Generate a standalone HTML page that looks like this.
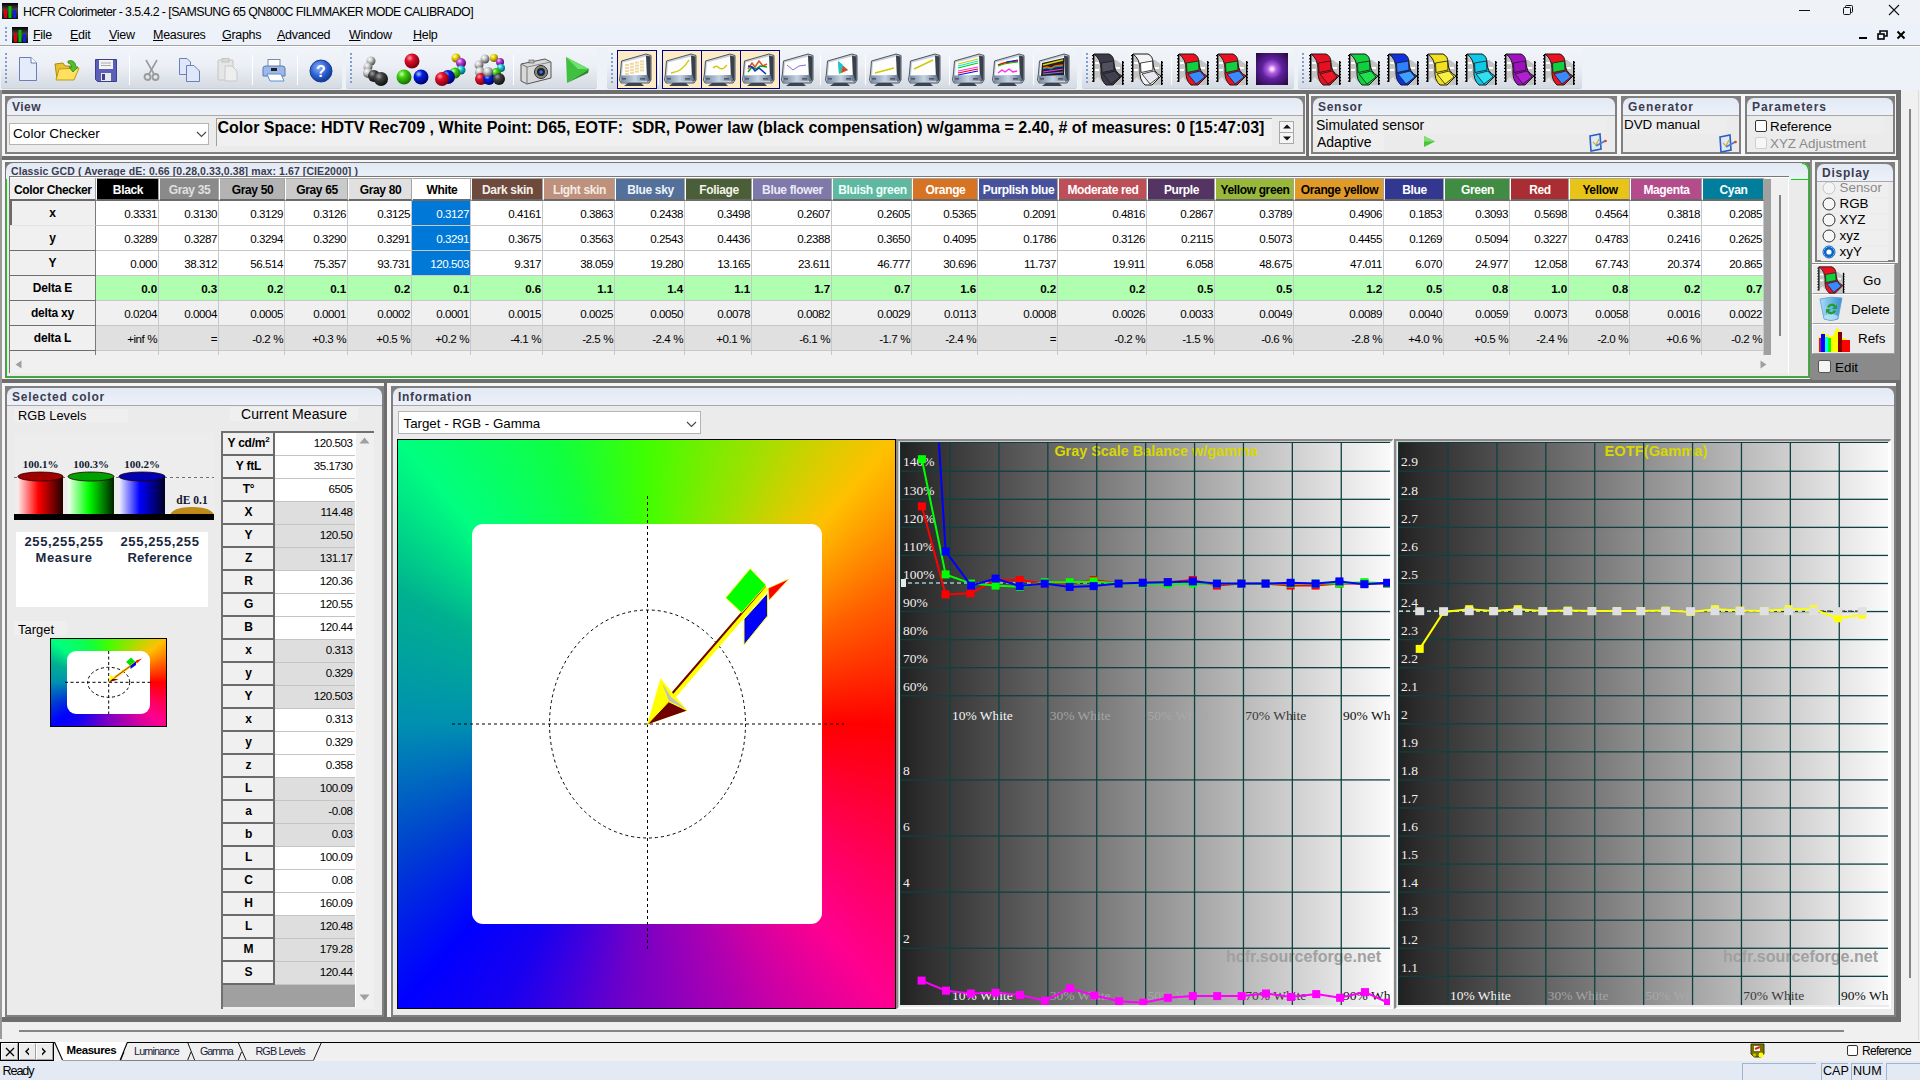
<!DOCTYPE html>
<html><head><meta charset="utf-8"><title>HCFR Colorimeter</title>
<style>
html,body{margin:0;padding:0;width:1920px;height:1080px;overflow:hidden;background:#f0f0f0;font-family:'Liberation Sans', sans-serif;}
#root{position:relative;width:1920px;height:1080px;overflow:hidden;}
#root div{position:absolute;box-sizing:border-box;}
#root svg{position:absolute;}
</style></head><body><div id="root">
<div style="left:0px;top:0px;width:1920px;height:23px;background:#eff2f7"></div><div style="left:0px;top:23px;width:1920px;height:22px;background:#edf1f9"></div><div style="left:0px;top:45px;width:1920px;height:1px;background:#a3a3a3"></div><div style="left:0px;top:46px;width:1920px;height:44px;background:#edf1f8"></div><div style="left:0px;top:46px;width:1920px;height:1px;background:#ffffff"></div><div style="left:1px;top:48px;width:341px;height:41px;background:linear-gradient(#f1f4f9 0%,#eceff5 45%,#d5dbe3 100%);border-radius:3px 3px 2px 2px;border-bottom:1px solid #c9cfd8"></div><div style="left:5px;top:53px;width:2px;height:2px;background:#7f9fcf"></div><div style="left:5px;top:57px;width:2px;height:2px;background:#7f9fcf"></div><div style="left:5px;top:61px;width:2px;height:2px;background:#7f9fcf"></div><div style="left:5px;top:65px;width:2px;height:2px;background:#7f9fcf"></div><div style="left:5px;top:69px;width:2px;height:2px;background:#7f9fcf"></div><div style="left:5px;top:73px;width:2px;height:2px;background:#7f9fcf"></div><div style="left:5px;top:77px;width:2px;height:2px;background:#7f9fcf"></div><div style="left:5px;top:81px;width:2px;height:2px;background:#7f9fcf"></div><div style="left:346px;top:48px;width:251px;height:41px;background:linear-gradient(#f1f4f9 0%,#eceff5 45%,#d5dbe3 100%);border-radius:3px 3px 2px 2px;border-bottom:1px solid #c9cfd8"></div><div style="left:350px;top:53px;width:2px;height:2px;background:#7f9fcf"></div><div style="left:350px;top:57px;width:2px;height:2px;background:#7f9fcf"></div><div style="left:350px;top:61px;width:2px;height:2px;background:#7f9fcf"></div><div style="left:350px;top:65px;width:2px;height:2px;background:#7f9fcf"></div><div style="left:350px;top:69px;width:2px;height:2px;background:#7f9fcf"></div><div style="left:350px;top:73px;width:2px;height:2px;background:#7f9fcf"></div><div style="left:350px;top:77px;width:2px;height:2px;background:#7f9fcf"></div><div style="left:350px;top:81px;width:2px;height:2px;background:#7f9fcf"></div><div style="left:607px;top:48px;width:470px;height:41px;background:linear-gradient(#f1f4f9 0%,#eceff5 45%,#d5dbe3 100%);border-radius:3px 3px 2px 2px;border-bottom:1px solid #c9cfd8"></div><div style="left:611px;top:53px;width:2px;height:2px;background:#7f9fcf"></div><div style="left:611px;top:57px;width:2px;height:2px;background:#7f9fcf"></div><div style="left:611px;top:61px;width:2px;height:2px;background:#7f9fcf"></div><div style="left:611px;top:65px;width:2px;height:2px;background:#7f9fcf"></div><div style="left:611px;top:69px;width:2px;height:2px;background:#7f9fcf"></div><div style="left:611px;top:73px;width:2px;height:2px;background:#7f9fcf"></div><div style="left:611px;top:77px;width:2px;height:2px;background:#7f9fcf"></div><div style="left:611px;top:81px;width:2px;height:2px;background:#7f9fcf"></div><div style="left:1082px;top:48px;width:212px;height:41px;background:linear-gradient(#f1f4f9 0%,#eceff5 45%,#d5dbe3 100%);border-radius:3px 3px 2px 2px;border-bottom:1px solid #c9cfd8"></div><div style="left:1086px;top:53px;width:2px;height:2px;background:#7f9fcf"></div><div style="left:1086px;top:57px;width:2px;height:2px;background:#7f9fcf"></div><div style="left:1086px;top:61px;width:2px;height:2px;background:#7f9fcf"></div><div style="left:1086px;top:65px;width:2px;height:2px;background:#7f9fcf"></div><div style="left:1086px;top:69px;width:2px;height:2px;background:#7f9fcf"></div><div style="left:1086px;top:73px;width:2px;height:2px;background:#7f9fcf"></div><div style="left:1086px;top:77px;width:2px;height:2px;background:#7f9fcf"></div><div style="left:1086px;top:81px;width:2px;height:2px;background:#7f9fcf"></div><div style="left:1298px;top:48px;width:284px;height:41px;background:linear-gradient(#f1f4f9 0%,#eceff5 45%,#d5dbe3 100%);border-radius:3px 3px 2px 2px;border-bottom:1px solid #c9cfd8"></div><div style="left:1302px;top:53px;width:2px;height:2px;background:#7f9fcf"></div><div style="left:1302px;top:57px;width:2px;height:2px;background:#7f9fcf"></div><div style="left:1302px;top:61px;width:2px;height:2px;background:#7f9fcf"></div><div style="left:1302px;top:65px;width:2px;height:2px;background:#7f9fcf"></div><div style="left:1302px;top:69px;width:2px;height:2px;background:#7f9fcf"></div><div style="left:1302px;top:73px;width:2px;height:2px;background:#7f9fcf"></div><div style="left:1302px;top:77px;width:2px;height:2px;background:#7f9fcf"></div><div style="left:1302px;top:81px;width:2px;height:2px;background:#7f9fcf"></div><div style="left:129px;top:55px;width:1px;height:30px;background:#c5cbd3;border-right:1px solid #fff"></div><div style="left:252px;top:55px;width:1px;height:30px;background:#c5cbd3;border-right:1px solid #fff"></div><div style="left:297px;top:55px;width:1px;height:30px;background:#c5cbd3;border-right:1px solid #fff"></div><div style="left:513px;top:55px;width:1px;height:30px;background:#c5cbd3;border-right:1px solid #fff"></div><div style="left:658px;top:55px;width:1px;height:30px;background:#c5cbd3;border-right:1px solid #fff"></div><div style="left:820px;top:55px;width:1px;height:30px;background:#c5cbd3;border-right:1px solid #fff"></div><div style="left:865px;top:55px;width:1px;height:30px;background:#c5cbd3;border-right:1px solid #fff"></div><div style="left:949px;top:55px;width:1px;height:30px;background:#c5cbd3;border-right:1px solid #fff"></div><div style="left:1033px;top:55px;width:1px;height:30px;background:#c5cbd3;border-right:1px solid #fff"></div><div style="left:1171px;top:55px;width:1px;height:30px;background:#c5cbd3;border-right:1px solid #fff"></div><div style="left:0px;top:90px;width:1901px;height:950px;background:#6e6e6e"></div><div style="left:0px;top:90px;width:2px;height:950px;background:#9a9a9a"></div><div style="left:2px;top:94px;width:1894px;height:62px;background:#f6f6f6"></div><div style="left:2px;top:160px;width:1894px;height:219px;background:#f6f6f6"></div><div style="left:2px;top:383px;width:1894px;height:634px;background:#f6f6f6"></div><div style="left:1306px;top:94px;width:3px;height:62px;background:#6e6e6e"></div><div style="left:384px;top:383px;width:3px;height:634px;background:#6e6e6e"></div><div style="left:1810px;top:160px;width:2px;height:219px;background:#8a8a8a"></div><div style="left:0px;top:1022px;width:1920px;height:20px;background:#f0f0f0"></div><div style="left:0px;top:1022px;width:2px;height:17px;background:#9a9a9a"></div><div style="left:1901px;top:90px;width:19px;height:952px;background:#f0f0f0"></div><div style="left:1918px;top:90px;width:1px;height:950px;background:#dcdcdc"></div><div style="left:1909px;top:109px;width:2px;height:869px;background:#858585"></div><div style="left:19px;top:1030px;width:1825px;height:2px;background:#858585"></div><div style="left:5px;top:96px;width:1300px;height:58px;background:#ebebeb;border:2px solid #808080"></div><div style="left:7px;top:98px;width:1296px;height:17px;background:#808080"></div><div style="left:7px;top:98px;width:1296px;height:17px;background:linear-gradient(#e2e9f4,#edf2f9);border-radius:7px 7px 0 0"></div><div style="left:7px;top:115px;width:1296px;height:1px;background:#a8a8a8"></div><div style="left:12px;top:100.84px;font-family:'Liberation Sans', sans-serif;font-size:12px;line-height:12px;font-weight:bold;color:#3c3c50;white-space:pre;letter-spacing:0.465px;">View</div><div style="left:1311px;top:96px;width:306px;height:58px;background:#ebebeb;border:2px solid #808080"></div><div style="left:1313px;top:98px;width:302px;height:17px;background:#808080"></div><div style="left:1313px;top:98px;width:302px;height:17px;background:linear-gradient(#e2e9f4,#edf2f9);border-radius:7px 7px 0 0"></div><div style="left:1313px;top:115px;width:302px;height:1px;background:#a8a8a8"></div><div style="left:1318px;top:100.84px;font-family:'Liberation Sans', sans-serif;font-size:12px;line-height:12px;font-weight:bold;color:#3c3c50;white-space:pre;letter-spacing:0.719px;">Sensor</div><div style="left:1621px;top:96px;width:120px;height:58px;background:#ebebeb;border:2px solid #808080"></div><div style="left:1623px;top:98px;width:116px;height:17px;background:#808080"></div><div style="left:1623px;top:98px;width:116px;height:17px;background:linear-gradient(#e2e9f4,#edf2f9);border-radius:7px 7px 0 0"></div><div style="left:1623px;top:115px;width:116px;height:1px;background:#a8a8a8"></div><div style="left:1628px;top:100.84px;font-family:'Liberation Sans', sans-serif;font-size:12px;line-height:12px;font-weight:bold;color:#3c3c50;white-space:pre;letter-spacing:0.960px;">Generator</div><div style="left:1745px;top:96px;width:150px;height:58px;background:#ebebeb;border:2px solid #808080"></div><div style="left:1747px;top:98px;width:146px;height:17px;background:#808080"></div><div style="left:1747px;top:98px;width:146px;height:17px;background:linear-gradient(#e2e9f4,#edf2f9);border-radius:7px 7px 0 0"></div><div style="left:1747px;top:115px;width:146px;height:1px;background:#a8a8a8"></div><div style="left:1752px;top:100.84px;font-family:'Liberation Sans', sans-serif;font-size:12px;line-height:12px;font-weight:bold;color:#3c3c50;white-space:pre;letter-spacing:0.961px;">Parameters</div><svg style="left:0;top:0" width="0" height="0"><defs>
<radialGradient id="bR" cx="35%" cy="30%" r="70%"><stop offset="0" stop-color="#ff9aa8"/><stop offset="0.35" stop-color="#e0102a"/><stop offset="1" stop-color="#7a0010"/></radialGradient>
<radialGradient id="bG" cx="35%" cy="30%" r="70%"><stop offset="0" stop-color="#c8ffb0"/><stop offset="0.35" stop-color="#40d010"/><stop offset="1" stop-color="#1a7000"/></radialGradient>
<radialGradient id="bB" cx="35%" cy="30%" r="70%"><stop offset="0" stop-color="#b0c8ff"/><stop offset="0.35" stop-color="#0020e0"/><stop offset="1" stop-color="#000070"/></radialGradient>
<radialGradient id="bW" cx="35%" cy="30%" r="70%"><stop offset="0" stop-color="#ffffff"/><stop offset="0.4" stop-color="#c8c8c8"/><stop offset="1" stop-color="#505050"/></radialGradient>
<radialGradient id="bK" cx="35%" cy="30%" r="70%"><stop offset="0" stop-color="#a0a0a0"/><stop offset="0.4" stop-color="#404040"/><stop offset="1" stop-color="#101010"/></radialGradient>
<radialGradient id="bY" cx="35%" cy="30%" r="70%"><stop offset="0" stop-color="#ffffc0"/><stop offset="0.4" stop-color="#e8d000"/><stop offset="1" stop-color="#806000"/></radialGradient>
<radialGradient id="bM" cx="35%" cy="30%" r="70%"><stop offset="0" stop-color="#ffc0ff"/><stop offset="0.4" stop-color="#b040d0"/><stop offset="1" stop-color="#500070"/></radialGradient>
<radialGradient id="bC" cx="35%" cy="30%" r="70%"><stop offset="0" stop-color="#c0ffff"/><stop offset="0.4" stop-color="#20c8d8"/><stop offset="1" stop-color="#006070"/></radialGradient>
<linearGradient id="monB" x1="0" y1="0" x2="1" y2="0"><stop offset="0" stop-color="#6f87a3"/><stop offset="0.5" stop-color="#c5d3e3"/><stop offset="1" stop-color="#5a708c"/></linearGradient>
<radialGradient id="helpG" cx="40%" cy="35%" r="65%"><stop offset="0" stop-color="#8fb4ff"/><stop offset="0.6" stop-color="#2a5fd0"/><stop offset="1" stop-color="#123a90"/></radialGradient>
<radialGradient id="purp" cx="50%" cy="50%" r="60%"><stop offset="0" stop-color="#ffffff"/><stop offset="0.15" stop-color="#e0a0ff"/><stop offset="0.45" stop-color="#7020c0"/><stop offset="1" stop-color="#1a0830"/></radialGradient>
<linearGradient id="cylR" x1="0" x2="1"><stop offset="0" stop-color="#ffe8e8"/><stop offset="0.45" stop-color="#ff0000"/><stop offset="1" stop-color="#200000"/></linearGradient>
<linearGradient id="cylG" x1="0" x2="1"><stop offset="0" stop-color="#f0fff0"/><stop offset="0.45" stop-color="#00ff00"/><stop offset="1" stop-color="#002000"/></linearGradient>
<linearGradient id="cylB" x1="0" x2="1"><stop offset="0" stop-color="#f0f0ff"/><stop offset="0.45" stop-color="#0000ff"/><stop offset="1" stop-color="#000020"/></linearGradient>
</defs></svg><svg style="left:2px;top:3px" width="16" height="16" viewBox="0 0 16 16"><rect width="16" height="16" fill="#000"/><defs><linearGradient id="ai" x1="0" y1="0" x2="0" y2="1"><stop offset="0" stop-color="#000"/><stop offset="0.4" stop-color="#444"/><stop offset="1" stop-color="#111"/></linearGradient></defs><rect width="16" height="16" fill="url(#ai)"/><rect x="2" y="6" width="3" height="9" fill="#e00000"/><rect x="6.5" y="3" width="3" height="12" fill="#00c000"/><rect x="11" y="7" width="3" height="8" fill="#1020e0"/></svg><div style="left:23px;top:5.50px;font-family:'Liberation Sans', sans-serif;font-size:12.4px;line-height:12.4px;font-weight:normal;color:#000;white-space:pre;letter-spacing:-0.570px;">HCFR Colorimeter - 3.5.4.2 - [SAMSUNG 65 QN800C FILMMAKER MODE CALIBRADO]</div><div style="left:1799px;top:10px;width:11px;height:1px;background:#111"></div><svg style="left:1842px;top:4px" width="12" height="12" viewBox="0 0 12 12"><rect x="1.5" y="3.5" width="7" height="7" rx="1" fill="none" stroke="#111"/><path d="M3.5,3.5 V2.5 Q3.5,1.5 4.5,1.5 H9.5 Q10.5,1.5 10.5,2.5 V7.5 Q10.5,8.5 9.5,8.5 H8.5" fill="none" stroke="#111"/></svg><svg style="left:1888px;top:4px" width="12" height="12" viewBox="0 0 12 12"><path d="M1,1 L11,11 M11,1 L1,11" stroke="#111" stroke-width="1.1"/></svg><div style="left:5px;top:27px;width:2px;height:2px;background:#7f9fcf"></div><div style="left:5px;top:31px;width:2px;height:2px;background:#7f9fcf"></div><div style="left:5px;top:35px;width:2px;height:2px;background:#7f9fcf"></div><div style="left:5px;top:39px;width:2px;height:2px;background:#7f9fcf"></div><svg style="left:12px;top:27px" width="16" height="16" viewBox="0 0 16 16"><rect width="16" height="16" fill="#000"/><defs><linearGradient id="ai" x1="0" y1="0" x2="0" y2="1"><stop offset="0" stop-color="#000"/><stop offset="0.4" stop-color="#444"/><stop offset="1" stop-color="#111"/></linearGradient></defs><rect width="16" height="16" fill="url(#ai)"/><rect x="2" y="6" width="3" height="9" fill="#e00000"/><rect x="6.5" y="3" width="3" height="12" fill="#00c000"/><rect x="11" y="7" width="3" height="8" fill="#1020e0"/></svg><div style="left:33px;top:29.42px;font-family:'Liberation Sans', sans-serif;font-size:12.5px;line-height:12.5px;font-weight:normal;color:#000;white-space:pre;letter-spacing:-0.3px"><u>F</u>ile</div><div style="left:70px;top:29.42px;font-family:'Liberation Sans', sans-serif;font-size:12.5px;line-height:12.5px;font-weight:normal;color:#000;white-space:pre;letter-spacing:-0.3px"><u>E</u>dit</div><div style="left:109px;top:29.42px;font-family:'Liberation Sans', sans-serif;font-size:12.5px;line-height:12.5px;font-weight:normal;color:#000;white-space:pre;letter-spacing:-0.3px"><u>V</u>iew</div><div style="left:153px;top:29.42px;font-family:'Liberation Sans', sans-serif;font-size:12.5px;line-height:12.5px;font-weight:normal;color:#000;white-space:pre;letter-spacing:-0.3px"><u>M</u>easures</div><div style="left:222px;top:29.42px;font-family:'Liberation Sans', sans-serif;font-size:12.5px;line-height:12.5px;font-weight:normal;color:#000;white-space:pre;letter-spacing:-0.3px"><u>G</u>raphs</div><div style="left:277px;top:29.42px;font-family:'Liberation Sans', sans-serif;font-size:12.5px;line-height:12.5px;font-weight:normal;color:#000;white-space:pre;letter-spacing:-0.3px"><u>A</u>dvanced</div><div style="left:349px;top:29.42px;font-family:'Liberation Sans', sans-serif;font-size:12.5px;line-height:12.5px;font-weight:normal;color:#000;white-space:pre;letter-spacing:-0.3px"><u>W</u>indow</div><div style="left:413px;top:29.42px;font-family:'Liberation Sans', sans-serif;font-size:12.5px;line-height:12.5px;font-weight:normal;color:#000;white-space:pre;letter-spacing:-0.3px"><u>H</u>elp</div><div style="left:1859px;top:37px;width:8px;height:2px;background:#000"></div><svg style="left:1877px;top:30px" width="11" height="10" viewBox="0 0 11 10"><rect x="1" y="4" width="6" height="5" fill="none" stroke="#000" stroke-width="1.6"/><path d="M3,3.5 V1 H10 V6 H7.5" fill="none" stroke="#000" stroke-width="1.6"/></svg><svg style="left:1896px;top:30px" width="10" height="10" viewBox="0 0 10 10"><path d="M1.5,1.5 L8.5,8.5 M8.5,1.5 L1.5,8.5" stroke="#000" stroke-width="2"/></svg><svg style="left:18px;top:57px" width="20" height="24" viewBox="0 0 20 24"><path d="M1.5,0.5 H13 L18.5,6 V23.5 H1.5 Z" fill="#e4ecfb" stroke="#6b7fb8"/><path d="M13,0.5 V6 H18.5" fill="#fff" stroke="#6b7fb8"/></svg><svg style="left:54px;top:58px" width="26" height="24" viewBox="0 0 26 24"><path d="M1,6 L9,5 L11,8 L20,8 L20,21 L3,21 Z" fill="#e8c030" stroke="#b08a10"/><path d="M5,11 L25,10 L20,22 L2,22 Z" fill="#ffe060" stroke="#c09a10"/><path d="M14,3 Q21,1 22,9 L24,9 L19,14 L15,9 L18,9 Q17,5 14,5 Z" fill="#50c030" stroke="#2a8a10" stroke-width="0.8"/></svg><svg style="left:95px;top:59px" width="22" height="23" viewBox="0 0 22 23"><path d="M0.5,0.5 H21.5 V22.5 H2.5 L0.5,20.5 Z" fill="#5a5fb8" stroke="#3a3f90"/><rect x="4" y="1" width="14" height="9" fill="#f4f4f4"/><line x1="6" y1="4" x2="16" y2="4" stroke="#aaa"/><line x1="6" y1="6.5" x2="16" y2="6.5" stroke="#aaa"/><rect x="6" y="14" width="10" height="8" fill="#e8e8e8"/><rect x="7" y="15" width="3" height="6" fill="#3a3f90"/></svg><svg style="left:143px;top:59px" width="17" height="22" viewBox="0 0 17 22"><line x1="3" y1="1" x2="11" y2="15" stroke="#9a9a9a" stroke-width="1.6"/><line x1="14" y1="1" x2="6" y2="15" stroke="#9a9a9a" stroke-width="1.6"/><circle cx="4.5" cy="18" r="3" fill="none" stroke="#9a9a9a" stroke-width="1.8"/><circle cx="12.5" cy="18" r="3" fill="none" stroke="#9a9a9a" stroke-width="1.8"/></svg><svg style="left:179px;top:58px" width="22" height="24" viewBox="0 0 22 24"><path d="M0.5,0.5 H8 L11.5,4 V16.5 H0.5 Z" fill="#dfe8fa" stroke="#6b7fb8"/><path d="M7.5,7.5 H15 L20.5,13 V23.5 H7.5 Z" fill="#dfe8fa" stroke="#6b7fb8"/></svg><svg style="left:217px;top:58px" width="22" height="24" viewBox="0 0 22 24"><rect x="1" y="2" width="15" height="20" rx="1" fill="#e6e6e6" stroke="#c4c4c4"/><rect x="5" y="0.5" width="7" height="3.5" fill="#d8d8d8" stroke="#c4c4c4"/><path d="M8,8 H15 L20,13 V23 H8 Z" fill="#eeeeee" stroke="#c8c8c8"/></svg><svg style="left:262px;top:59px" width="24" height="23" viewBox="0 0 24 23"><rect x="6" y="0.5" width="12" height="8" fill="#fff" stroke="#7a8ab0"/><path d="M1,9 Q1,7 4,7 H20 Q23,7 23,9 V17 H1 Z" fill="#9ab8e8" stroke="#5a78b0"/><rect x="9" y="9" width="6" height="3" fill="#222"/><path d="M5,15 H19 L22,22 H8 Z" fill="#fff" stroke="#5a90d0"/></svg><svg style="left:309px;top:59px" width="24" height="24" viewBox="0 0 24 24"><circle cx="12" cy="12" r="11" fill="url(#helpG)" stroke="#1a3f90" stroke-width="1"/><text x="12" y="18" font-family="Liberation Sans" font-weight="bold" font-size="16" fill="#fff" text-anchor="middle">?</text></svg><svg style="left:359px;top:53px" width="34" height="34" viewBox="0 0 34 34"><circle cx="12" cy="8" r="4.5" fill="url(#bW)"/><circle cx="9" cy="14" r="4.5" fill="url(#bW)"/><circle cx="9" cy="20" r="5" fill="url(#bW)"/><circle cx="15" cy="23" r="6" fill="url(#bK)"/><circle cx="22" cy="26" r="7" fill="url(#bK)"/></svg><svg style="left:396px;top:53px" width="34" height="34" viewBox="0 0 34 34"><circle cx="16" cy="8" r="7.5" fill="url(#bR)"/><circle cx="8" cy="24" r="7.5" fill="url(#bG)"/><circle cx="25" cy="24" r="7.5" fill="url(#bB)"/></svg><svg style="left:435px;top:53px" width="34" height="34" viewBox="0 0 34 34"><circle cx="21" cy="5" r="4.5" fill="url(#bY)"/><circle cx="26" cy="10" r="5" fill="url(#bM)"/><circle cx="26" cy="17" r="4.5" fill="url(#bC)"/><circle cx="20" cy="20" r="5.5" fill="url(#bG)"/><circle cx="13" cy="24" r="7" fill="url(#bB)"/><circle cx="7" cy="26" r="7" fill="url(#bR)"/></svg><svg style="left:474px;top:53px" width="34" height="34" viewBox="0 0 34 34"><circle cx="11" cy="6" r="4.5" fill="url(#bW)"/><circle cx="20" cy="5" r="4" fill="url(#bY)"/><circle cx="26" cy="9" r="4" fill="url(#bM)"/><circle cx="27" cy="15" r="4" fill="url(#bC)"/><circle cx="22" cy="20" r="5" fill="url(#bG)"/><circle cx="5" cy="12" r="4.5" fill="url(#bW)"/><circle cx="6" cy="19" r="5" fill="url(#bW)"/><circle cx="7" cy="26" r="6" fill="url(#bR)"/><circle cx="15" cy="26" r="6" fill="url(#bB)"/><circle cx="25" cy="26" r="6" fill="url(#bK)"/><circle cx="14" cy="19" r="5" fill="url(#bW)"/></svg><svg style="left:519px;top:56px" width="34" height="30" viewBox="0 0 34 30"><path d="M2,8 L26,3 L32,6 L32,22 L8,28 L2,25 Z" fill="#d8d8d8" stroke="#555" stroke-width="1"/><path d="M2,8 L8,11 L8,28" fill="none" stroke="#777"/><path d="M8,11 L32,6" fill="none" stroke="#888"/><circle cx="22" cy="16" r="6.5" fill="#888" stroke="#333"/><circle cx="22" cy="16" r="4" fill="#222"/><circle cx="22" cy="16" r="1.8" fill="#3070ff"/><rect x="10" y="4" width="5" height="3" fill="#bbb" stroke="#555" stroke-width="0.6"/></svg><svg style="left:564px;top:56px" width="26" height="28" viewBox="0 0 26 28"><path d="M2,1 L25,13 L3,27 Z" fill="#40c040"/><path d="M2,1 L25,13 L14,13 Z" fill="#70e070"/><path d="M3,27 L25,13 L24,17 Z" fill="#209020"/></svg><div style="left:617px;top:50px;width:40px;height:39px;background:#fdebc6;border:1px solid #000080"></div><div style="left:662px;top:50px;width:40px;height:39px;background:#fdebc6;border:1px solid #000080"></div><div style="left:701px;top:50px;width:40px;height:39px;background:#fdebc6;border:1px solid #000080"></div><div style="left:740px;top:50px;width:40px;height:39px;background:#fdebc6;border:1px solid #000080"></div><svg style="left:619px;top:53px" width="34" height="34" viewBox="0 0 34 34"><path d="M2.5,8 L27,1 L32,2.5 L32,27 L30,30 L2,30 L0.5,27 L1.5,20 Z" fill="#c9d0d8" stroke="#4e5662" stroke-width="1"/><path d="M4,9.5 L27,3.5 L27,22 L3,23 Z" fill="#fdfdfd"/><path d="M27,2.5 L31.5,3.5 L31.5,27 L28.5,29 Z" fill="#394049"/><path d="M1.5,22.5 L28,22 L30.5,27.5 L2,29.5 Z" fill="url(#monB)"/><rect x="3" y="25" width="4" height="1.6" fill="#556"/><rect x="21" y="25" width="5" height="1.6" fill="#556"/><path d="M5,33 L25,33 L22,30 L9,30 Z" fill="#3c4350"/><g fill="#f0d8a0"><rect x="6" y="11.0" width="4" height="2"/><rect x="11" y="9.8" width="4" height="2"/><rect x="16" y="8.6" width="4" height="2"/><rect x="21" y="7.4" width="4" height="2"/><rect x="6" y="14.0" width="4" height="2"/><rect x="11" y="12.8" width="4" height="2"/><rect x="16" y="11.6" width="4" height="2"/><rect x="21" y="10.4" width="4" height="2"/><rect x="6" y="17.0" width="4" height="2"/><rect x="11" y="15.8" width="4" height="2"/><rect x="16" y="14.6" width="4" height="2"/><rect x="21" y="13.4" width="4" height="2"/><rect x="6" y="20.0" width="4" height="2"/><rect x="11" y="18.8" width="4" height="2"/><rect x="16" y="17.6" width="4" height="2"/><rect x="21" y="16.4" width="4" height="2"/></g></svg><svg style="left:664px;top:53px" width="34" height="34" viewBox="0 0 34 34"><path d="M2.5,8 L27,1 L32,2.5 L32,27 L30,30 L2,30 L0.5,27 L1.5,20 Z" fill="#c9d0d8" stroke="#4e5662" stroke-width="1"/><path d="M4,9.5 L27,3.5 L27,22 L3,23 Z" fill="#fdfdfd"/><path d="M27,2.5 L31.5,3.5 L31.5,27 L28.5,29 Z" fill="#394049"/><path d="M1.5,22.5 L28,22 L30.5,27.5 L2,29.5 Z" fill="url(#monB)"/><rect x="3" y="25" width="4" height="1.6" fill="#556"/><rect x="21" y="25" width="5" height="1.6" fill="#556"/><path d="M5,33 L25,33 L22,30 L9,30 Z" fill="#3c4350"/><path d="M7,20 Q18,19 25,7" fill="none" stroke="#d0c800" stroke-width="1.4"/></svg><svg style="left:703px;top:53px" width="34" height="34" viewBox="0 0 34 34"><path d="M2.5,8 L27,1 L32,2.5 L32,27 L30,30 L2,30 L0.5,27 L1.5,20 Z" fill="#c9d0d8" stroke="#4e5662" stroke-width="1"/><path d="M4,9.5 L27,3.5 L27,22 L3,23 Z" fill="#fdfdfd"/><path d="M27,2.5 L31.5,3.5 L31.5,27 L28.5,29 Z" fill="#394049"/><path d="M1.5,22.5 L28,22 L30.5,27.5 L2,29.5 Z" fill="url(#monB)"/><rect x="3" y="25" width="4" height="1.6" fill="#556"/><rect x="21" y="25" width="5" height="1.6" fill="#556"/><path d="M5,33 L25,33 L22,30 L9,30 Z" fill="#3c4350"/><path d="M10,15 Q13,12 15,14 Q18,17 21,15 L24,12" fill="none" stroke="#d0c800" stroke-width="1.4"/></svg><svg style="left:742px;top:53px" width="34" height="34" viewBox="0 0 34 34"><path d="M2.5,8 L27,1 L32,2.5 L32,27 L30,30 L2,30 L0.5,27 L1.5,20 Z" fill="#c9d0d8" stroke="#4e5662" stroke-width="1"/><path d="M4,9.5 L27,3.5 L27,22 L3,23 Z" fill="#fdfdfd"/><path d="M27,2.5 L31.5,3.5 L31.5,27 L28.5,29 Z" fill="#394049"/><path d="M1.5,22.5 L28,22 L30.5,27.5 L2,29.5 Z" fill="url(#monB)"/><rect x="3" y="25" width="4" height="1.6" fill="#556"/><rect x="21" y="25" width="5" height="1.6" fill="#556"/><path d="M5,33 L25,33 L22,30 L9,30 Z" fill="#3c4350"/><path d="M6,16 L10,10 L13,14 L17,8 L21,13 L25,11" fill="none" stroke="#e05020" stroke-width="1.5"/><path d="M6,19 L10,14 L14,16 L18,13 L25,14" fill="none" stroke="#10a020" stroke-width="1.5"/><path d="M6,13 L10,14 L13,18 L17,15 L24,21" fill="none" stroke="#1030c0" stroke-width="1.5"/></svg><svg style="left:781px;top:53px" width="34" height="34" viewBox="0 0 34 34"><path d="M2.5,8 L27,1 L32,2.5 L32,27 L30,30 L2,30 L0.5,27 L1.5,20 Z" fill="#c9d0d8" stroke="#4e5662" stroke-width="1"/><path d="M4,9.5 L27,3.5 L27,22 L3,23 Z" fill="#fdfdfd"/><path d="M27,2.5 L31.5,3.5 L31.5,27 L28.5,29 Z" fill="#394049"/><path d="M1.5,22.5 L28,22 L30.5,27.5 L2,29.5 Z" fill="url(#monB)"/><rect x="3" y="25" width="4" height="1.6" fill="#556"/><rect x="21" y="25" width="5" height="1.6" fill="#556"/><path d="M5,33 L25,33 L22,30 L9,30 Z" fill="#3c4350"/><path d="M6,12 L12,17 L18,13 L25,12" fill="none" stroke="#8070e0" stroke-width="1"/></svg><svg style="left:825px;top:53px" width="34" height="34" viewBox="0 0 34 34"><path d="M2.5,8 L27,1 L32,2.5 L32,27 L30,30 L2,30 L0.5,27 L1.5,20 Z" fill="#c9d0d8" stroke="#4e5662" stroke-width="1"/><path d="M4,9.5 L27,3.5 L27,22 L3,23 Z" fill="#fdfdfd"/><path d="M27,2.5 L31.5,3.5 L31.5,27 L28.5,29 Z" fill="#394049"/><path d="M1.5,22.5 L28,22 L30.5,27.5 L2,29.5 Z" fill="url(#monB)"/><rect x="3" y="25" width="4" height="1.6" fill="#556"/><rect x="21" y="25" width="5" height="1.6" fill="#556"/><path d="M5,33 L25,33 L22,30 L9,30 Z" fill="#3c4350"/><path d="M13,8 L23,17 L14,21 Z" fill="#40d040"/><path d="M13,8 L18,12 L14,21 Z" fill="#20c0e0"/><path d="M18,13 L23,17 L16,20 Z" fill="#e04040"/></svg><svg style="left:869px;top:53px" width="34" height="34" viewBox="0 0 34 34"><path d="M2.5,8 L27,1 L32,2.5 L32,27 L30,30 L2,30 L0.5,27 L1.5,20 Z" fill="#c9d0d8" stroke="#4e5662" stroke-width="1"/><path d="M4,9.5 L27,3.5 L27,22 L3,23 Z" fill="#fdfdfd"/><path d="M27,2.5 L31.5,3.5 L31.5,27 L28.5,29 Z" fill="#394049"/><path d="M1.5,22.5 L28,22 L30.5,27.5 L2,29.5 Z" fill="url(#monB)"/><rect x="3" y="25" width="4" height="1.6" fill="#556"/><rect x="21" y="25" width="5" height="1.6" fill="#556"/><path d="M5,33 L25,33 L22,30 L9,30 Z" fill="#3c4350"/><path d="M6,20 L25,15" fill="none" stroke="#d0c800" stroke-width="1.4"/></svg><svg style="left:908px;top:53px" width="34" height="34" viewBox="0 0 34 34"><path d="M2.5,8 L27,1 L32,2.5 L32,27 L30,30 L2,30 L0.5,27 L1.5,20 Z" fill="#c9d0d8" stroke="#4e5662" stroke-width="1"/><path d="M4,9.5 L27,3.5 L27,22 L3,23 Z" fill="#fdfdfd"/><path d="M27,2.5 L31.5,3.5 L31.5,27 L28.5,29 Z" fill="#394049"/><path d="M1.5,22.5 L28,22 L30.5,27.5 L2,29.5 Z" fill="url(#monB)"/><rect x="3" y="25" width="4" height="1.6" fill="#556"/><rect x="21" y="25" width="5" height="1.6" fill="#556"/><path d="M5,33 L25,33 L22,30 L9,30 Z" fill="#3c4350"/><path d="M6,16 L25,7" fill="none" stroke="#d0c800" stroke-width="1.4"/></svg><svg style="left:952px;top:53px" width="34" height="34" viewBox="0 0 34 34"><path d="M2.5,8 L27,1 L32,2.5 L32,27 L30,30 L2,30 L0.5,27 L1.5,20 Z" fill="#c9d0d8" stroke="#4e5662" stroke-width="1"/><path d="M4,9.5 L27,3.5 L27,22 L3,23 Z" fill="#fdfdfd"/><path d="M27,2.5 L31.5,3.5 L31.5,27 L28.5,29 Z" fill="#394049"/><path d="M1.5,22.5 L28,22 L30.5,27.5 L2,29.5 Z" fill="url(#monB)"/><rect x="3" y="25" width="4" height="1.6" fill="#556"/><rect x="21" y="25" width="5" height="1.6" fill="#556"/><path d="M5,33 L25,33 L22,30 L9,30 Z" fill="#3c4350"/><path d="M6,11 L26,6" stroke="#d0c800" stroke-width="1.2"/><path d="M6,13 L26,8" stroke="#00e8e8" stroke-width="1.2"/><path d="M6,15 L26,10" stroke="#00d000" stroke-width="1.2"/><path d="M6,18 L26,14" stroke="#ff30ff" stroke-width="1.2"/><path d="M6,20 L26,16" stroke="#ff0000" stroke-width="1.2"/><path d="M6,22 L26,18" stroke="#0010ff" stroke-width="1.2"/></svg><svg style="left:992px;top:53px" width="34" height="34" viewBox="0 0 34 34"><path d="M2.5,8 L27,1 L32,2.5 L32,27 L30,30 L2,30 L0.5,27 L1.5,20 Z" fill="#c9d0d8" stroke="#4e5662" stroke-width="1"/><path d="M4,9.5 L27,3.5 L27,22 L3,23 Z" fill="#fdfdfd"/><path d="M27,2.5 L31.5,3.5 L31.5,27 L28.5,29 Z" fill="#394049"/><path d="M1.5,22.5 L28,22 L30.5,27.5 L2,29.5 Z" fill="url(#monB)"/><rect x="3" y="25" width="4" height="1.6" fill="#556"/><rect x="21" y="25" width="5" height="1.6" fill="#556"/><path d="M5,33 L25,33 L22,30 L9,30 Z" fill="#3c4350"/><path d="M6,12 L12,10 L18,9 L26,8" stroke="#ff0000" stroke-width="1.6" fill="none"/><path d="M6,13 L12,11 L18,10 L26,9" stroke="#00c000" stroke-width="1.2" fill="none"/><path d="M14,9 L26,7" stroke="#0020ff" stroke-width="1.2" fill="none"/><path d="M6,20 L10,17 L13,19 L17,16 L21,19 L25,18" stroke="#ff20ff" stroke-width="1.3" fill="none"/></svg><svg style="left:1037px;top:53px" width="34" height="34" viewBox="0 0 34 34"><path d="M2.5,8 L27,1 L32,2.5 L32,27 L30,30 L2,30 L0.5,27 L1.5,20 Z" fill="#c9d0d8" stroke="#4e5662" stroke-width="1"/><path d="M4,9.5 L27,3.5 L27,22 L3,23 Z" fill="#fdfdfd"/><path d="M27,2.5 L31.5,3.5 L31.5,27 L28.5,29 Z" fill="#394049"/><path d="M1.5,22.5 L28,22 L30.5,27.5 L2,29.5 Z" fill="url(#monB)"/><rect x="3" y="25" width="4" height="1.6" fill="#556"/><rect x="21" y="25" width="5" height="1.6" fill="#556"/><path d="M5,33 L25,33 L22,30 L9,30 Z" fill="#3c4350"/><path d="M5,10 L27,5 L27,22 L4,23 Z" fill="#202020"/><path d="M6,12 L26,7" stroke="#e0d000" stroke-width="1.3"/><path d="M6,15 L10,14 L14,15 L18,13 L26,12" stroke="#ff6000" stroke-width="1.3" fill="none"/><path d="M6,16 L10,15 L14,16 L18,14 L26,13" stroke="#00a0e0" stroke-width="1" fill="none"/><path d="M6,19 L26,16" stroke="#ff30ff" stroke-width="1.2"/><path d="M6,21 L26,19" stroke="#8070ff" stroke-width="1.2"/></svg><svg style="left:1092px;top:53px" width="32" height="33" viewBox="0 0 32 33"><path d="M1,1 L10,1 L10,29 L6,24 L1,29 Z" fill="#c4c4c4"/><rect x="1" y="1" width="1.4" height="28" fill="#000"/><path d="M3,9 H7 V11 H3 Z M3,16 H7 V18 H3 Z" fill="#fff"/><path d="M19,7 L24,7 L31,12 L31,32 L20,32 Z" fill="#c4c4c4"/><rect x="30" y="8" width="1.4" height="24" fill="#000"/><path d="M24,14 H28 V16 H24 Z M24,21 H28 V23 H24 Z" fill="#fff"/><rect x="0" y="2.0" width="1.2" height="1.2" fill="#000"/><rect x="0" y="5.2" width="1.2" height="1.2" fill="#000"/><rect x="0" y="8.4" width="1.2" height="1.2" fill="#000"/><rect x="0" y="11.6" width="1.2" height="1.2" fill="#000"/><rect x="0" y="14.8" width="1.2" height="1.2" fill="#000"/><rect x="0" y="18.0" width="1.2" height="1.2" fill="#000"/><rect x="0" y="21.2" width="1.2" height="1.2" fill="#000"/><rect x="0" y="24.4" width="1.2" height="1.2" fill="#000"/><rect x="0" y="27.6" width="1.2" height="1.2" fill="#000"/><rect x="30.8" y="9.0" width="1.2" height="1.2" fill="#000"/><rect x="30.8" y="12.0" width="1.2" height="1.2" fill="#000"/><rect x="30.8" y="15.0" width="1.2" height="1.2" fill="#000"/><rect x="30.8" y="18.0" width="1.2" height="1.2" fill="#000"/><rect x="30.8" y="21.0" width="1.2" height="1.2" fill="#000"/><rect x="30.8" y="24.0" width="1.2" height="1.2" fill="#000"/><rect x="30.8" y="27.0" width="1.2" height="1.2" fill="#000"/><rect x="30.8" y="30.0" width="1.2" height="1.2" fill="#000"/><path d="M2,1 L17,1 Q22,3 22,10 Q22,19 30,23 L21,32 L14,32 Q8,27 9,16 Q9,6 2,1 Z" fill="#3a3a48" stroke="#1a1a1a" stroke-width="1"/><path d="M9.5,10 L21.5,8 L22,17 L10,19.5 Z" fill="#505060" stroke="#1a1a1a" stroke-width="0.8"/><path d="M11,21 L23,18 L28,24 L19,31 Z" fill="#404050" stroke="#1a1a1a" stroke-width="0.8"/></svg><svg style="left:1131px;top:53px" width="32" height="33" viewBox="0 0 32 33"><path d="M1,1 L10,1 L10,29 L6,24 L1,29 Z" fill="#c4c4c4"/><rect x="1" y="1" width="1.4" height="28" fill="#000"/><path d="M3,9 H7 V11 H3 Z M3,16 H7 V18 H3 Z" fill="#fff"/><path d="M19,7 L24,7 L31,12 L31,32 L20,32 Z" fill="#c4c4c4"/><rect x="30" y="8" width="1.4" height="24" fill="#000"/><path d="M24,14 H28 V16 H24 Z M24,21 H28 V23 H24 Z" fill="#fff"/><rect x="0" y="2.0" width="1.2" height="1.2" fill="#000"/><rect x="0" y="5.2" width="1.2" height="1.2" fill="#000"/><rect x="0" y="8.4" width="1.2" height="1.2" fill="#000"/><rect x="0" y="11.6" width="1.2" height="1.2" fill="#000"/><rect x="0" y="14.8" width="1.2" height="1.2" fill="#000"/><rect x="0" y="18.0" width="1.2" height="1.2" fill="#000"/><rect x="0" y="21.2" width="1.2" height="1.2" fill="#000"/><rect x="0" y="24.4" width="1.2" height="1.2" fill="#000"/><rect x="0" y="27.6" width="1.2" height="1.2" fill="#000"/><rect x="30.8" y="9.0" width="1.2" height="1.2" fill="#000"/><rect x="30.8" y="12.0" width="1.2" height="1.2" fill="#000"/><rect x="30.8" y="15.0" width="1.2" height="1.2" fill="#000"/><rect x="30.8" y="18.0" width="1.2" height="1.2" fill="#000"/><rect x="30.8" y="21.0" width="1.2" height="1.2" fill="#000"/><rect x="30.8" y="24.0" width="1.2" height="1.2" fill="#000"/><rect x="30.8" y="27.0" width="1.2" height="1.2" fill="#000"/><rect x="30.8" y="30.0" width="1.2" height="1.2" fill="#000"/><path d="M2,1 L17,1 Q22,3 22,10 Q22,19 30,23 L21,32 L14,32 Q8,27 9,16 Q9,6 2,1 Z" fill="#f4f4f4" stroke="#1a1a1a" stroke-width="1"/><path d="M9.5,10 L21.5,8 L22,17 L10,19.5 Z" fill="#ffffff" stroke="#1a1a1a" stroke-width="0.8"/><path d="M11,21 L23,18 L28,24 L19,31 Z" fill="#e8e8f0" stroke="#1a1a1a" stroke-width="0.8"/></svg><svg style="left:1177px;top:53px" width="32" height="33" viewBox="0 0 32 33"><path d="M1,1 L10,1 L10,29 L6,24 L1,29 Z" fill="#c4c4c4"/><rect x="1" y="1" width="1.4" height="28" fill="#000"/><path d="M3,9 H7 V11 H3 Z M3,16 H7 V18 H3 Z" fill="#fff"/><path d="M19,7 L24,7 L31,12 L31,32 L20,32 Z" fill="#c4c4c4"/><rect x="30" y="8" width="1.4" height="24" fill="#000"/><path d="M24,14 H28 V16 H24 Z M24,21 H28 V23 H24 Z" fill="#fff"/><rect x="0" y="2.0" width="1.2" height="1.2" fill="#000"/><rect x="0" y="5.2" width="1.2" height="1.2" fill="#000"/><rect x="0" y="8.4" width="1.2" height="1.2" fill="#000"/><rect x="0" y="11.6" width="1.2" height="1.2" fill="#000"/><rect x="0" y="14.8" width="1.2" height="1.2" fill="#000"/><rect x="0" y="18.0" width="1.2" height="1.2" fill="#000"/><rect x="0" y="21.2" width="1.2" height="1.2" fill="#000"/><rect x="0" y="24.4" width="1.2" height="1.2" fill="#000"/><rect x="0" y="27.6" width="1.2" height="1.2" fill="#000"/><rect x="30.8" y="9.0" width="1.2" height="1.2" fill="#000"/><rect x="30.8" y="12.0" width="1.2" height="1.2" fill="#000"/><rect x="30.8" y="15.0" width="1.2" height="1.2" fill="#000"/><rect x="30.8" y="18.0" width="1.2" height="1.2" fill="#000"/><rect x="30.8" y="21.0" width="1.2" height="1.2" fill="#000"/><rect x="30.8" y="24.0" width="1.2" height="1.2" fill="#000"/><rect x="30.8" y="27.0" width="1.2" height="1.2" fill="#000"/><rect x="30.8" y="30.0" width="1.2" height="1.2" fill="#000"/><path d="M2,1 L17,1 Q22,3 22,10 Q22,19 30,23 L21,32 L14,32 Q8,27 9,16 Q9,6 2,1 Z" fill="#ee1020" stroke="#1a1a1a" stroke-width="1"/><path d="M9.5,10 L21.5,8 L22,17 L10,19.5 Z" fill="#10d040" stroke="#1a1a1a" stroke-width="0.8"/><path d="M11,21 L23,18 L28,24 L19,31 Z" fill="#3a8aff" stroke="#1a1a1a" stroke-width="0.8"/></svg><svg style="left:1216px;top:53px" width="32" height="33" viewBox="0 0 32 33"><path d="M1,1 L10,1 L10,29 L6,24 L1,29 Z" fill="#c4c4c4"/><rect x="1" y="1" width="1.4" height="28" fill="#000"/><path d="M3,9 H7 V11 H3 Z M3,16 H7 V18 H3 Z" fill="#fff"/><path d="M19,7 L24,7 L31,12 L31,32 L20,32 Z" fill="#c4c4c4"/><rect x="30" y="8" width="1.4" height="24" fill="#000"/><path d="M24,14 H28 V16 H24 Z M24,21 H28 V23 H24 Z" fill="#fff"/><rect x="0" y="2.0" width="1.2" height="1.2" fill="#000"/><rect x="0" y="5.2" width="1.2" height="1.2" fill="#000"/><rect x="0" y="8.4" width="1.2" height="1.2" fill="#000"/><rect x="0" y="11.6" width="1.2" height="1.2" fill="#000"/><rect x="0" y="14.8" width="1.2" height="1.2" fill="#000"/><rect x="0" y="18.0" width="1.2" height="1.2" fill="#000"/><rect x="0" y="21.2" width="1.2" height="1.2" fill="#000"/><rect x="0" y="24.4" width="1.2" height="1.2" fill="#000"/><rect x="0" y="27.6" width="1.2" height="1.2" fill="#000"/><rect x="30.8" y="9.0" width="1.2" height="1.2" fill="#000"/><rect x="30.8" y="12.0" width="1.2" height="1.2" fill="#000"/><rect x="30.8" y="15.0" width="1.2" height="1.2" fill="#000"/><rect x="30.8" y="18.0" width="1.2" height="1.2" fill="#000"/><rect x="30.8" y="21.0" width="1.2" height="1.2" fill="#000"/><rect x="30.8" y="24.0" width="1.2" height="1.2" fill="#000"/><rect x="30.8" y="27.0" width="1.2" height="1.2" fill="#000"/><rect x="30.8" y="30.0" width="1.2" height="1.2" fill="#000"/><path d="M2,1 L17,1 Q22,3 22,10 Q22,19 30,23 L21,32 L14,32 Q8,27 9,16 Q9,6 2,1 Z" fill="#ee1020" stroke="#1a1a1a" stroke-width="1"/><path d="M9.5,10 L21.5,8 L22,17 L10,19.5 Z" fill="#10d040" stroke="#1a1a1a" stroke-width="0.8"/><path d="M11,21 L23,18 L28,24 L19,31 Z" fill="#3a8aff" stroke="#1a1a1a" stroke-width="0.8"/></svg><div style="left:1256px;top:53px;width:32px;height:32px;background:radial-gradient(circle at 50% 50%,#ffffff 0,#f0c0ff 8%,#b060e0 20%,#6020a0 45%,#200838 100%)"></div><svg style="left:1309px;top:53px" width="32" height="33" viewBox="0 0 32 33"><path d="M1,1 L10,1 L10,29 L6,24 L1,29 Z" fill="#c4c4c4"/><rect x="1" y="1" width="1.4" height="28" fill="#000"/><path d="M3,9 H7 V11 H3 Z M3,16 H7 V18 H3 Z" fill="#fff"/><path d="M19,7 L24,7 L31,12 L31,32 L20,32 Z" fill="#c4c4c4"/><rect x="30" y="8" width="1.4" height="24" fill="#000"/><path d="M24,14 H28 V16 H24 Z M24,21 H28 V23 H24 Z" fill="#fff"/><rect x="0" y="2.0" width="1.2" height="1.2" fill="#000"/><rect x="0" y="5.2" width="1.2" height="1.2" fill="#000"/><rect x="0" y="8.4" width="1.2" height="1.2" fill="#000"/><rect x="0" y="11.6" width="1.2" height="1.2" fill="#000"/><rect x="0" y="14.8" width="1.2" height="1.2" fill="#000"/><rect x="0" y="18.0" width="1.2" height="1.2" fill="#000"/><rect x="0" y="21.2" width="1.2" height="1.2" fill="#000"/><rect x="0" y="24.4" width="1.2" height="1.2" fill="#000"/><rect x="0" y="27.6" width="1.2" height="1.2" fill="#000"/><rect x="30.8" y="9.0" width="1.2" height="1.2" fill="#000"/><rect x="30.8" y="12.0" width="1.2" height="1.2" fill="#000"/><rect x="30.8" y="15.0" width="1.2" height="1.2" fill="#000"/><rect x="30.8" y="18.0" width="1.2" height="1.2" fill="#000"/><rect x="30.8" y="21.0" width="1.2" height="1.2" fill="#000"/><rect x="30.8" y="24.0" width="1.2" height="1.2" fill="#000"/><rect x="30.8" y="27.0" width="1.2" height="1.2" fill="#000"/><rect x="30.8" y="30.0" width="1.2" height="1.2" fill="#000"/><path d="M2,1 L17,1 Q22,3 22,10 Q22,19 30,23 L21,32 L14,32 Q8,27 9,16 Q9,6 2,1 Z" fill="#e81020" stroke="#1a1a1a" stroke-width="1"/><path d="M9.5,10 L21.5,8 L22,17 L10,19.5 Z" fill="#e81020" stroke="#1a1a1a" stroke-width="0.8"/><path d="M11,21 L23,18 L28,24 L19,31 Z" fill="#f01828" stroke="#1a1a1a" stroke-width="0.8"/></svg><svg style="left:1348px;top:53px" width="32" height="33" viewBox="0 0 32 33"><path d="M1,1 L10,1 L10,29 L6,24 L1,29 Z" fill="#c4c4c4"/><rect x="1" y="1" width="1.4" height="28" fill="#000"/><path d="M3,9 H7 V11 H3 Z M3,16 H7 V18 H3 Z" fill="#fff"/><path d="M19,7 L24,7 L31,12 L31,32 L20,32 Z" fill="#c4c4c4"/><rect x="30" y="8" width="1.4" height="24" fill="#000"/><path d="M24,14 H28 V16 H24 Z M24,21 H28 V23 H24 Z" fill="#fff"/><rect x="0" y="2.0" width="1.2" height="1.2" fill="#000"/><rect x="0" y="5.2" width="1.2" height="1.2" fill="#000"/><rect x="0" y="8.4" width="1.2" height="1.2" fill="#000"/><rect x="0" y="11.6" width="1.2" height="1.2" fill="#000"/><rect x="0" y="14.8" width="1.2" height="1.2" fill="#000"/><rect x="0" y="18.0" width="1.2" height="1.2" fill="#000"/><rect x="0" y="21.2" width="1.2" height="1.2" fill="#000"/><rect x="0" y="24.4" width="1.2" height="1.2" fill="#000"/><rect x="0" y="27.6" width="1.2" height="1.2" fill="#000"/><rect x="30.8" y="9.0" width="1.2" height="1.2" fill="#000"/><rect x="30.8" y="12.0" width="1.2" height="1.2" fill="#000"/><rect x="30.8" y="15.0" width="1.2" height="1.2" fill="#000"/><rect x="30.8" y="18.0" width="1.2" height="1.2" fill="#000"/><rect x="30.8" y="21.0" width="1.2" height="1.2" fill="#000"/><rect x="30.8" y="24.0" width="1.2" height="1.2" fill="#000"/><rect x="30.8" y="27.0" width="1.2" height="1.2" fill="#000"/><rect x="30.8" y="30.0" width="1.2" height="1.2" fill="#000"/><path d="M2,1 L17,1 Q22,3 22,10 Q22,19 30,23 L21,32 L14,32 Q8,27 9,16 Q9,6 2,1 Z" fill="#10d040" stroke="#1a1a1a" stroke-width="1"/><path d="M9.5,10 L21.5,8 L22,17 L10,19.5 Z" fill="#10d040" stroke="#1a1a1a" stroke-width="0.8"/><path d="M11,21 L23,18 L28,24 L19,31 Z" fill="#20e050" stroke="#1a1a1a" stroke-width="0.8"/></svg><svg style="left:1387px;top:53px" width="32" height="33" viewBox="0 0 32 33"><path d="M1,1 L10,1 L10,29 L6,24 L1,29 Z" fill="#c4c4c4"/><rect x="1" y="1" width="1.4" height="28" fill="#000"/><path d="M3,9 H7 V11 H3 Z M3,16 H7 V18 H3 Z" fill="#fff"/><path d="M19,7 L24,7 L31,12 L31,32 L20,32 Z" fill="#c4c4c4"/><rect x="30" y="8" width="1.4" height="24" fill="#000"/><path d="M24,14 H28 V16 H24 Z M24,21 H28 V23 H24 Z" fill="#fff"/><rect x="0" y="2.0" width="1.2" height="1.2" fill="#000"/><rect x="0" y="5.2" width="1.2" height="1.2" fill="#000"/><rect x="0" y="8.4" width="1.2" height="1.2" fill="#000"/><rect x="0" y="11.6" width="1.2" height="1.2" fill="#000"/><rect x="0" y="14.8" width="1.2" height="1.2" fill="#000"/><rect x="0" y="18.0" width="1.2" height="1.2" fill="#000"/><rect x="0" y="21.2" width="1.2" height="1.2" fill="#000"/><rect x="0" y="24.4" width="1.2" height="1.2" fill="#000"/><rect x="0" y="27.6" width="1.2" height="1.2" fill="#000"/><rect x="30.8" y="9.0" width="1.2" height="1.2" fill="#000"/><rect x="30.8" y="12.0" width="1.2" height="1.2" fill="#000"/><rect x="30.8" y="15.0" width="1.2" height="1.2" fill="#000"/><rect x="30.8" y="18.0" width="1.2" height="1.2" fill="#000"/><rect x="30.8" y="21.0" width="1.2" height="1.2" fill="#000"/><rect x="30.8" y="24.0" width="1.2" height="1.2" fill="#000"/><rect x="30.8" y="27.0" width="1.2" height="1.2" fill="#000"/><rect x="30.8" y="30.0" width="1.2" height="1.2" fill="#000"/><path d="M2,1 L17,1 Q22,3 22,10 Q22,19 30,23 L21,32 L14,32 Q8,27 9,16 Q9,6 2,1 Z" fill="#1030e0" stroke="#1a1a1a" stroke-width="1"/><path d="M9.5,10 L21.5,8 L22,17 L10,19.5 Z" fill="#3080ff" stroke="#1a1a1a" stroke-width="0.8"/><path d="M11,21 L23,18 L28,24 L19,31 Z" fill="#40a0ff" stroke="#1a1a1a" stroke-width="0.8"/></svg><svg style="left:1426px;top:53px" width="32" height="33" viewBox="0 0 32 33"><path d="M1,1 L10,1 L10,29 L6,24 L1,29 Z" fill="#c4c4c4"/><rect x="1" y="1" width="1.4" height="28" fill="#000"/><path d="M3,9 H7 V11 H3 Z M3,16 H7 V18 H3 Z" fill="#fff"/><path d="M19,7 L24,7 L31,12 L31,32 L20,32 Z" fill="#c4c4c4"/><rect x="30" y="8" width="1.4" height="24" fill="#000"/><path d="M24,14 H28 V16 H24 Z M24,21 H28 V23 H24 Z" fill="#fff"/><rect x="0" y="2.0" width="1.2" height="1.2" fill="#000"/><rect x="0" y="5.2" width="1.2" height="1.2" fill="#000"/><rect x="0" y="8.4" width="1.2" height="1.2" fill="#000"/><rect x="0" y="11.6" width="1.2" height="1.2" fill="#000"/><rect x="0" y="14.8" width="1.2" height="1.2" fill="#000"/><rect x="0" y="18.0" width="1.2" height="1.2" fill="#000"/><rect x="0" y="21.2" width="1.2" height="1.2" fill="#000"/><rect x="0" y="24.4" width="1.2" height="1.2" fill="#000"/><rect x="0" y="27.6" width="1.2" height="1.2" fill="#000"/><rect x="30.8" y="9.0" width="1.2" height="1.2" fill="#000"/><rect x="30.8" y="12.0" width="1.2" height="1.2" fill="#000"/><rect x="30.8" y="15.0" width="1.2" height="1.2" fill="#000"/><rect x="30.8" y="18.0" width="1.2" height="1.2" fill="#000"/><rect x="30.8" y="21.0" width="1.2" height="1.2" fill="#000"/><rect x="30.8" y="24.0" width="1.2" height="1.2" fill="#000"/><rect x="30.8" y="27.0" width="1.2" height="1.2" fill="#000"/><rect x="30.8" y="30.0" width="1.2" height="1.2" fill="#000"/><path d="M2,1 L17,1 Q22,3 22,10 Q22,19 30,23 L21,32 L14,32 Q8,27 9,16 Q9,6 2,1 Z" fill="#f0e020" stroke="#1a1a1a" stroke-width="1"/><path d="M9.5,10 L21.5,8 L22,17 L10,19.5 Z" fill="#f0e020" stroke="#1a1a1a" stroke-width="0.8"/><path d="M11,21 L23,18 L28,24 L19,31 Z" fill="#f8f040" stroke="#1a1a1a" stroke-width="0.8"/></svg><svg style="left:1465px;top:53px" width="32" height="33" viewBox="0 0 32 33"><path d="M1,1 L10,1 L10,29 L6,24 L1,29 Z" fill="#c4c4c4"/><rect x="1" y="1" width="1.4" height="28" fill="#000"/><path d="M3,9 H7 V11 H3 Z M3,16 H7 V18 H3 Z" fill="#fff"/><path d="M19,7 L24,7 L31,12 L31,32 L20,32 Z" fill="#c4c4c4"/><rect x="30" y="8" width="1.4" height="24" fill="#000"/><path d="M24,14 H28 V16 H24 Z M24,21 H28 V23 H24 Z" fill="#fff"/><rect x="0" y="2.0" width="1.2" height="1.2" fill="#000"/><rect x="0" y="5.2" width="1.2" height="1.2" fill="#000"/><rect x="0" y="8.4" width="1.2" height="1.2" fill="#000"/><rect x="0" y="11.6" width="1.2" height="1.2" fill="#000"/><rect x="0" y="14.8" width="1.2" height="1.2" fill="#000"/><rect x="0" y="18.0" width="1.2" height="1.2" fill="#000"/><rect x="0" y="21.2" width="1.2" height="1.2" fill="#000"/><rect x="0" y="24.4" width="1.2" height="1.2" fill="#000"/><rect x="0" y="27.6" width="1.2" height="1.2" fill="#000"/><rect x="30.8" y="9.0" width="1.2" height="1.2" fill="#000"/><rect x="30.8" y="12.0" width="1.2" height="1.2" fill="#000"/><rect x="30.8" y="15.0" width="1.2" height="1.2" fill="#000"/><rect x="30.8" y="18.0" width="1.2" height="1.2" fill="#000"/><rect x="30.8" y="21.0" width="1.2" height="1.2" fill="#000"/><rect x="30.8" y="24.0" width="1.2" height="1.2" fill="#000"/><rect x="30.8" y="27.0" width="1.2" height="1.2" fill="#000"/><rect x="30.8" y="30.0" width="1.2" height="1.2" fill="#000"/><path d="M2,1 L17,1 Q22,3 22,10 Q22,19 30,23 L21,32 L14,32 Q8,27 9,16 Q9,6 2,1 Z" fill="#10c8e8" stroke="#1a1a1a" stroke-width="1"/><path d="M9.5,10 L21.5,8 L22,17 L10,19.5 Z" fill="#10c8e8" stroke="#1a1a1a" stroke-width="0.8"/><path d="M11,21 L23,18 L28,24 L19,31 Z" fill="#30e0f0" stroke="#1a1a1a" stroke-width="0.8"/></svg><svg style="left:1504px;top:53px" width="32" height="33" viewBox="0 0 32 33"><path d="M1,1 L10,1 L10,29 L6,24 L1,29 Z" fill="#c4c4c4"/><rect x="1" y="1" width="1.4" height="28" fill="#000"/><path d="M3,9 H7 V11 H3 Z M3,16 H7 V18 H3 Z" fill="#fff"/><path d="M19,7 L24,7 L31,12 L31,32 L20,32 Z" fill="#c4c4c4"/><rect x="30" y="8" width="1.4" height="24" fill="#000"/><path d="M24,14 H28 V16 H24 Z M24,21 H28 V23 H24 Z" fill="#fff"/><rect x="0" y="2.0" width="1.2" height="1.2" fill="#000"/><rect x="0" y="5.2" width="1.2" height="1.2" fill="#000"/><rect x="0" y="8.4" width="1.2" height="1.2" fill="#000"/><rect x="0" y="11.6" width="1.2" height="1.2" fill="#000"/><rect x="0" y="14.8" width="1.2" height="1.2" fill="#000"/><rect x="0" y="18.0" width="1.2" height="1.2" fill="#000"/><rect x="0" y="21.2" width="1.2" height="1.2" fill="#000"/><rect x="0" y="24.4" width="1.2" height="1.2" fill="#000"/><rect x="0" y="27.6" width="1.2" height="1.2" fill="#000"/><rect x="30.8" y="9.0" width="1.2" height="1.2" fill="#000"/><rect x="30.8" y="12.0" width="1.2" height="1.2" fill="#000"/><rect x="30.8" y="15.0" width="1.2" height="1.2" fill="#000"/><rect x="30.8" y="18.0" width="1.2" height="1.2" fill="#000"/><rect x="30.8" y="21.0" width="1.2" height="1.2" fill="#000"/><rect x="30.8" y="24.0" width="1.2" height="1.2" fill="#000"/><rect x="30.8" y="27.0" width="1.2" height="1.2" fill="#000"/><rect x="30.8" y="30.0" width="1.2" height="1.2" fill="#000"/><path d="M2,1 L17,1 Q22,3 22,10 Q22,19 30,23 L21,32 L14,32 Q8,27 9,16 Q9,6 2,1 Z" fill="#a010c0" stroke="#1a1a1a" stroke-width="1"/><path d="M9.5,10 L21.5,8 L22,17 L10,19.5 Z" fill="#a010c0" stroke="#1a1a1a" stroke-width="0.8"/><path d="M11,21 L23,18 L28,24 L19,31 Z" fill="#b020d0" stroke="#1a1a1a" stroke-width="0.8"/></svg><svg style="left:1543px;top:53px" width="32" height="33" viewBox="0 0 32 33"><path d="M1,1 L10,1 L10,29 L6,24 L1,29 Z" fill="#c4c4c4"/><rect x="1" y="1" width="1.4" height="28" fill="#000"/><path d="M3,9 H7 V11 H3 Z M3,16 H7 V18 H3 Z" fill="#fff"/><path d="M19,7 L24,7 L31,12 L31,32 L20,32 Z" fill="#c4c4c4"/><rect x="30" y="8" width="1.4" height="24" fill="#000"/><path d="M24,14 H28 V16 H24 Z M24,21 H28 V23 H24 Z" fill="#fff"/><rect x="0" y="2.0" width="1.2" height="1.2" fill="#000"/><rect x="0" y="5.2" width="1.2" height="1.2" fill="#000"/><rect x="0" y="8.4" width="1.2" height="1.2" fill="#000"/><rect x="0" y="11.6" width="1.2" height="1.2" fill="#000"/><rect x="0" y="14.8" width="1.2" height="1.2" fill="#000"/><rect x="0" y="18.0" width="1.2" height="1.2" fill="#000"/><rect x="0" y="21.2" width="1.2" height="1.2" fill="#000"/><rect x="0" y="24.4" width="1.2" height="1.2" fill="#000"/><rect x="0" y="27.6" width="1.2" height="1.2" fill="#000"/><rect x="30.8" y="9.0" width="1.2" height="1.2" fill="#000"/><rect x="30.8" y="12.0" width="1.2" height="1.2" fill="#000"/><rect x="30.8" y="15.0" width="1.2" height="1.2" fill="#000"/><rect x="30.8" y="18.0" width="1.2" height="1.2" fill="#000"/><rect x="30.8" y="21.0" width="1.2" height="1.2" fill="#000"/><rect x="30.8" y="24.0" width="1.2" height="1.2" fill="#000"/><rect x="30.8" y="27.0" width="1.2" height="1.2" fill="#000"/><rect x="30.8" y="30.0" width="1.2" height="1.2" fill="#000"/><path d="M2,1 L17,1 Q22,3 22,10 Q22,19 30,23 L21,32 L14,32 Q8,27 9,16 Q9,6 2,1 Z" fill="#ee1020" stroke="#1a1a1a" stroke-width="1"/><path d="M9.5,10 L21.5,8 L22,17 L10,19.5 Z" fill="#10d040" stroke="#1a1a1a" stroke-width="0.8"/><path d="M11,21 L23,18 L28,24 L19,31 Z" fill="#3a8aff" stroke="#1a1a1a" stroke-width="0.8"/></svg><div style="left:9px;top:123px;width:200px;height:22px;background:#fff;border:1px solid #b4b4b4"></div><div style="left:13px;top:126.99px;font-family:'Liberation Sans', sans-serif;font-size:13.6px;line-height:13.6px;font-weight:normal;color:#000;white-space:pre;">Color Checker</div><svg style="left:196px;top:131px" width="11" height="7" viewBox="0 0 11 7"><path d="M1,1 L5.5,5.5 L10,1" fill="none" stroke="#444" stroke-width="1.1"/></svg><div style="left:216px;top:118px;width:1056px;height:28px;background:#f0f0f0;border-top:1px solid #a0a0a0;border-left:1px solid #a0a0a0"></div><div style="left:217.5px;top:120.46px;font-family:'Liberation Sans', sans-serif;font-size:16px;line-height:16px;font-weight:bold;color:#000;white-space:pre;letter-spacing:0.02px">Color Space: HDTV Rec709 , White Point: D65, EOTF:  SDR, Power law (black compensation) w/gamma = 2.40, # of measures: 0 [15:47:03]</div><div style="left:1279px;top:121px;width:15px;height:12px;background:#f4f4f4;border:1px solid #a8a8a8"></div><div style="left:1279px;top:132px;width:15px;height:12px;background:#f4f4f4;border:1px solid #a8a8a8"></div><svg style="left:1283px;top:124px" width="8" height="5" viewBox="0 0 8 5"><path d="M0,4.5 L4,0.5 L8,4.5 Z" fill="#111"/></svg><svg style="left:1283px;top:136px" width="8" height="5" viewBox="0 0 8 5"><path d="M0,0.5 L4,4.5 L8,0.5 Z" fill="#111"/></svg><div style="left:1314px;top:117px;width:292px;height:17px;background:#ededed"></div><div style="left:1316px;top:118.15px;font-family:'Liberation Sans', sans-serif;font-size:14px;line-height:14px;font-weight:normal;color:#000;white-space:pre;">Simulated sensor</div><div style="left:1317px;top:134px;width:67px;height:17px;background:#efefef"></div><div style="left:1317px;top:134.65px;font-family:'Liberation Sans', sans-serif;font-size:14px;line-height:14px;font-weight:normal;color:#000;white-space:pre;">Adaptive</div><svg style="left:1423px;top:135px" width="13" height="13" viewBox="0 0 13 13"><path d="M1,1 L12,6.5 L1,12 Z" fill="#50c040"/><path d="M1,1 L12,6.5 L1,6.5 Z" fill="#80e070"/></svg><svg style="left:1588px;top:133px" width="20" height="20" viewBox="0 0 20 20"><path d="M2,3 L12,1 L13,16 L3,18 Z" fill="#dfe9fa" stroke="#2a5fc0" stroke-width="1.6"/><path d="M5,9 L8,12 L11,6" fill="none" stroke="#d8b030" stroke-width="1.3"/><path d="M8,13 L17,8" stroke="#5080d0" stroke-width="2"/><circle cx="17.5" cy="8" r="1.3" fill="#d04030"/></svg><div style="left:1624px;top:117px;width:102px;height:17px;background:#ededed"></div><div style="left:1624px;top:117.66px;font-family:'Liberation Sans', sans-serif;font-size:13.4px;line-height:13.4px;font-weight:normal;color:#000;white-space:pre;">DVD manual</div><svg style="left:1718px;top:134px" width="20" height="20" viewBox="0 0 20 20"><path d="M2,3 L12,1 L13,16 L3,18 Z" fill="#dfe9fa" stroke="#2a5fc0" stroke-width="1.6"/><path d="M5,9 L8,12 L11,6" fill="none" stroke="#d8b030" stroke-width="1.3"/><path d="M8,13 L17,8" stroke="#5080d0" stroke-width="2"/><circle cx="17.5" cy="8" r="1.3" fill="#d04030"/></svg><div style="left:1754px;top:117px;width:130px;height:17px;background:#ededed"></div><div style="left:1755px;top:120px;width:12px;height:12px;background:#fff;border:1px solid #333;border-radius:2px"></div><div style="left:1770px;top:120.16px;font-family:'Liberation Sans', sans-serif;font-size:13.4px;line-height:13.4px;font-weight:normal;color:#000;white-space:pre;">Reference</div><div style="left:1755px;top:137px;width:12px;height:12px;background:#f6f6f6;border:1px solid #cfcfcf;border-radius:2px"></div><div style="left:1770px;top:136.66px;font-family:'Liberation Sans', sans-serif;font-size:13.4px;line-height:13.4px;font-weight:normal;color:#8a8a8a;white-space:pre;">XYZ Adjustment</div><div style="left:5px;top:162px;width:1805px;height:216px;background:#ebebeb;border:1px solid #787878"></div><div style="left:6px;top:163px;width:1803px;height:17px;background:#787878"></div><div style="left:6px;top:163px;width:1803px;height:17px;background:linear-gradient(#e2e9f4,#edf2f9);border-radius:7px 7px 0 0"></div><div style="left:6px;top:179px;width:1803px;height:198px;border:1px solid #10d010;border-top:none;border-right:none"></div><div style="left:1791px;top:163px;width:18px;height:214px;border-right:1px solid #10d010;border-top:1px solid transparent;border-radius:0 7px 0 0"></div><div style="left:1791px;top:163px;width:18px;height:10px;border-right:1px solid #10d010;border-top:1px solid #10d010;border-radius:0 7px 0 0;clip-path:inset(0 0 0 60%)"></div><div style="left:1791px;top:179px;width:18px;height:1px;background:#10d010"></div><div style="left:11px;top:165.61px;font-family:'Liberation Sans', sans-serif;font-size:10.5px;line-height:10.5px;font-weight:bold;color:#3c3c50;white-space:pre;letter-spacing:0.084px;">Classic GCD ( Average dE: 0.66 [0.28,0.33,0.38] max: 1.67 [CIE2000] )</div><div style="left:9px;top:176px;width:1780px;height:197px;background:#f0f0f0;border-top:1px solid #777;border-left:1px solid #777"></div><div style="left:10px;top:177px;width:1778px;height:1px;background:#fff"></div><div style="left:10px;top:178px;width:86px;height:23px;background:#f0f0f0;border-right:1px solid #a0a0a0;border-bottom:2px solid #6a6a6a"></div><div style="left:14px;top:183.64px;font-family:'Liberation Sans', sans-serif;font-size:12px;line-height:12px;font-weight:bold;color:#000;white-space:pre;letter-spacing:-0.333px;">Color Checker</div><div style="left:96px;top:178px;width:63px;height:23px;background:#000000;border:1px solid #a4a4a4;border-left:1px solid #fff;border-bottom:2px solid #6a6a6a"></div><div style="left:-172.0px;width:600px;text-align:center;top:183.64px;font-family:'Liberation Sans', sans-serif;font-size:12px;line-height:12px;font-weight:bold;color:#fff;white-space:pre;letter-spacing:-0.35px">Black</div><div style="left:159px;top:178px;width:60px;height:23px;background:#8a8a8a;border:1px solid #a4a4a4;border-left:1px solid #fff;border-bottom:2px solid #6a6a6a"></div><div style="left:-110.5px;width:600px;text-align:center;top:183.64px;font-family:'Liberation Sans', sans-serif;font-size:12px;line-height:12px;font-weight:bold;color:#e0e0e0;white-space:pre;letter-spacing:-0.35px">Gray 35</div><div style="left:219px;top:178px;width:66px;height:23px;background:#b3b3b3;border:1px solid #a4a4a4;border-left:1px solid #fff;border-bottom:2px solid #6a6a6a"></div><div style="left:-47.5px;width:600px;text-align:center;top:183.64px;font-family:'Liberation Sans', sans-serif;font-size:12px;line-height:12px;font-weight:bold;color:#000;white-space:pre;letter-spacing:-0.35px">Gray 50</div><div style="left:285px;top:178px;width:63px;height:23px;background:#cacaca;border:1px solid #a4a4a4;border-left:1px solid #fff;border-bottom:2px solid #6a6a6a"></div><div style="left:17.0px;width:600px;text-align:center;top:183.64px;font-family:'Liberation Sans', sans-serif;font-size:12px;line-height:12px;font-weight:bold;color:#000;white-space:pre;letter-spacing:-0.35px">Gray 65</div><div style="left:348px;top:178px;width:64px;height:23px;background:#e0e0e0;border:1px solid #a4a4a4;border-left:1px solid #fff;border-bottom:2px solid #6a6a6a"></div><div style="left:80.5px;width:600px;text-align:center;top:183.64px;font-family:'Liberation Sans', sans-serif;font-size:12px;line-height:12px;font-weight:bold;color:#000;white-space:pre;letter-spacing:-0.35px">Gray 80</div><div style="left:412px;top:178px;width:59px;height:23px;background:#ffffff;border:1px solid #a4a4a4;border-left:1px solid #fff;border-bottom:2px solid #6a6a6a"></div><div style="left:142.0px;width:600px;text-align:center;top:183.64px;font-family:'Liberation Sans', sans-serif;font-size:12px;line-height:12px;font-weight:bold;color:#000;white-space:pre;letter-spacing:-0.35px">White</div><div style="left:471px;top:178px;width:72px;height:23px;background:#6e4a3c;border:1px solid #a4a4a4;border-left:1px solid #fff;border-bottom:2px solid #6a6a6a"></div><div style="left:207.5px;width:600px;text-align:center;top:183.64px;font-family:'Liberation Sans', sans-serif;font-size:12px;line-height:12px;font-weight:bold;color:#f4f0ec;white-space:pre;letter-spacing:-0.35px">Dark skin</div><div style="left:543px;top:178px;width:72px;height:23px;background:#bf907c;border:1px solid #a4a4a4;border-left:1px solid #fff;border-bottom:2px solid #6a6a6a"></div><div style="left:279.5px;width:600px;text-align:center;top:183.64px;font-family:'Liberation Sans', sans-serif;font-size:12px;line-height:12px;font-weight:bold;color:#f4ece4;white-space:pre;letter-spacing:-0.35px">Light skin</div><div style="left:615px;top:178px;width:70px;height:23px;background:#53709a;border:1px solid #a4a4a4;border-left:1px solid #fff;border-bottom:2px solid #6a6a6a"></div><div style="left:350.5px;width:600px;text-align:center;top:183.64px;font-family:'Liberation Sans', sans-serif;font-size:12px;line-height:12px;font-weight:bold;color:#eef2fa;white-space:pre;letter-spacing:-0.35px">Blue sky</div><div style="left:685px;top:178px;width:67px;height:23px;background:#4a5e38;border:1px solid #a4a4a4;border-left:1px solid #fff;border-bottom:2px solid #6a6a6a"></div><div style="left:419.0px;width:600px;text-align:center;top:183.64px;font-family:'Liberation Sans', sans-serif;font-size:12px;line-height:12px;font-weight:bold;color:#f4f4e8;white-space:pre;letter-spacing:-0.35px">Foliage</div><div style="left:752px;top:178px;width:80px;height:23px;background:#7e78ab;border:1px solid #a4a4a4;border-left:1px solid #fff;border-bottom:2px solid #6a6a6a"></div><div style="left:492.5px;width:600px;text-align:center;top:183.64px;font-family:'Liberation Sans', sans-serif;font-size:12px;line-height:12px;font-weight:bold;color:#eceaf8;white-space:pre;letter-spacing:-0.35px">Blue flower</div><div style="left:832px;top:178px;width:80px;height:23px;background:#5fb8a2;border:1px solid #a4a4a4;border-left:1px solid #fff;border-bottom:2px solid #6a6a6a"></div><div style="left:572.5px;width:600px;text-align:center;top:183.64px;font-family:'Liberation Sans', sans-serif;font-size:12px;line-height:12px;font-weight:bold;color:#f0fff8;white-space:pre;letter-spacing:-0.35px">Bluish green</div><div style="left:912px;top:178px;width:66px;height:23px;background:#d67424;border:1px solid #a4a4a4;border-left:1px solid #fff;border-bottom:2px solid #6a6a6a"></div><div style="left:645.5px;width:600px;text-align:center;top:183.64px;font-family:'Liberation Sans', sans-serif;font-size:12px;line-height:12px;font-weight:bold;color:#fff;white-space:pre;letter-spacing:-0.35px">Orange</div><div style="left:978px;top:178px;width:80px;height:23px;background:#48529c;border:1px solid #a4a4a4;border-left:1px solid #fff;border-bottom:2px solid #6a6a6a"></div><div style="left:718.5px;width:600px;text-align:center;top:183.64px;font-family:'Liberation Sans', sans-serif;font-size:12px;line-height:12px;font-weight:bold;color:#fff;white-space:pre;letter-spacing:-0.35px">Purplish blue</div><div style="left:1058px;top:178px;width:89px;height:23px;background:#bd4f58;border:1px solid #a4a4a4;border-left:1px solid #fff;border-bottom:2px solid #6a6a6a"></div><div style="left:803.0px;width:600px;text-align:center;top:183.64px;font-family:'Liberation Sans', sans-serif;font-size:12px;line-height:12px;font-weight:bold;color:#fff;white-space:pre;letter-spacing:-0.35px">Moderate red</div><div style="left:1147px;top:178px;width:68px;height:23px;background:#543462;border:1px solid #a4a4a4;border-left:1px solid #fff;border-bottom:2px solid #6a6a6a"></div><div style="left:881.5px;width:600px;text-align:center;top:183.64px;font-family:'Liberation Sans', sans-serif;font-size:12px;line-height:12px;font-weight:bold;color:#fff;white-space:pre;letter-spacing:-0.35px">Purple</div><div style="left:1215px;top:178px;width:79px;height:23px;background:#98b83a;border:1px solid #a4a4a4;border-left:1px solid #fff;border-bottom:2px solid #6a6a6a"></div><div style="left:955.0px;width:600px;text-align:center;top:183.64px;font-family:'Liberation Sans', sans-serif;font-size:12px;line-height:12px;font-weight:bold;color:#000;white-space:pre;letter-spacing:-0.35px">Yellow green</div><div style="left:1294px;top:178px;width:90px;height:23px;background:#e09a28;border:1px solid #a4a4a4;border-left:1px solid #fff;border-bottom:2px solid #6a6a6a"></div><div style="left:1039.5px;width:600px;text-align:center;top:183.64px;font-family:'Liberation Sans', sans-serif;font-size:12px;line-height:12px;font-weight:bold;color:#000;white-space:pre;letter-spacing:-0.35px">Orange yellow</div><div style="left:1384px;top:178px;width:60px;height:23px;background:#323890;border:1px solid #a4a4a4;border-left:1px solid #fff;border-bottom:2px solid #6a6a6a"></div><div style="left:1114.5px;width:600px;text-align:center;top:183.64px;font-family:'Liberation Sans', sans-serif;font-size:12px;line-height:12px;font-weight:bold;color:#fff;white-space:pre;letter-spacing:-0.35px">Blue</div><div style="left:1444px;top:178px;width:66px;height:23px;background:#3f8c42;border:1px solid #a4a4a4;border-left:1px solid #fff;border-bottom:2px solid #6a6a6a"></div><div style="left:1177.5px;width:600px;text-align:center;top:183.64px;font-family:'Liberation Sans', sans-serif;font-size:12px;line-height:12px;font-weight:bold;color:#fff;white-space:pre;letter-spacing:-0.35px">Green</div><div style="left:1510px;top:178px;width:59px;height:23px;background:#a82e34;border:1px solid #a4a4a4;border-left:1px solid #fff;border-bottom:2px solid #6a6a6a"></div><div style="left:1240.0px;width:600px;text-align:center;top:183.64px;font-family:'Liberation Sans', sans-serif;font-size:12px;line-height:12px;font-weight:bold;color:#fff;white-space:pre;letter-spacing:-0.35px">Red</div><div style="left:1569px;top:178px;width:61px;height:23px;background:#e8c418;border:1px solid #a4a4a4;border-left:1px solid #fff;border-bottom:2px solid #6a6a6a"></div><div style="left:1300.0px;width:600px;text-align:center;top:183.64px;font-family:'Liberation Sans', sans-serif;font-size:12px;line-height:12px;font-weight:bold;color:#000;white-space:pre;letter-spacing:-0.35px">Yellow</div><div style="left:1630px;top:178px;width:72px;height:23px;background:#b44c8c;border:1px solid #a4a4a4;border-left:1px solid #fff;border-bottom:2px solid #6a6a6a"></div><div style="left:1366.5px;width:600px;text-align:center;top:183.64px;font-family:'Liberation Sans', sans-serif;font-size:12px;line-height:12px;font-weight:bold;color:#fff;white-space:pre;letter-spacing:-0.35px">Magenta</div><div style="left:1702px;top:178px;width:62px;height:23px;background:#007e9c;border:1px solid #a4a4a4;border-left:1px solid #fff;border-bottom:2px solid #6a6a6a"></div><div style="left:1433.5px;width:600px;text-align:center;top:183.64px;font-family:'Liberation Sans', sans-serif;font-size:12px;line-height:12px;font-weight:bold;color:#fff;white-space:pre;letter-spacing:-0.35px">Cyan</div><div style="left:10px;top:201px;width:86px;height:25px;background:#f0f0f0;border-right:1px solid #7a7a7a;border-bottom:1px solid #e4e4e4"></div><div style="left:-247.5px;width:600px;text-align:center;top:207.34px;font-family:'Liberation Sans', sans-serif;font-size:12px;line-height:12px;font-weight:bold;color:#000;white-space:pre;letter-spacing:-0.2px">x</div><div style="left:96px;top:201px;width:1668px;height:25px;background:#ffffff"></div><div style="left:96px;top:201px;width:63px;height:25px;border-right:1px solid #c8c8c8;border-bottom:1px solid #c8c8c8"></div><div style="left:-443px;width:600px;text-align:right;top:207.68px;font-family:'Liberation Sans', sans-serif;font-size:11.6px;line-height:11.6px;font-weight:normal;color:#000;white-space:pre;letter-spacing:-0.45px">0.3331</div><div style="left:159px;top:201px;width:60px;height:25px;border-right:1px solid #c8c8c8;border-bottom:1px solid #c8c8c8"></div><div style="left:-383px;width:600px;text-align:right;top:207.68px;font-family:'Liberation Sans', sans-serif;font-size:11.6px;line-height:11.6px;font-weight:normal;color:#000;white-space:pre;letter-spacing:-0.45px">0.3130</div><div style="left:219px;top:201px;width:66px;height:25px;border-right:1px solid #c8c8c8;border-bottom:1px solid #c8c8c8"></div><div style="left:-317px;width:600px;text-align:right;top:207.68px;font-family:'Liberation Sans', sans-serif;font-size:11.6px;line-height:11.6px;font-weight:normal;color:#000;white-space:pre;letter-spacing:-0.45px">0.3129</div><div style="left:285px;top:201px;width:63px;height:25px;border-right:1px solid #c8c8c8;border-bottom:1px solid #c8c8c8"></div><div style="left:-254px;width:600px;text-align:right;top:207.68px;font-family:'Liberation Sans', sans-serif;font-size:11.6px;line-height:11.6px;font-weight:normal;color:#000;white-space:pre;letter-spacing:-0.45px">0.3126</div><div style="left:348px;top:201px;width:64px;height:25px;border-right:1px solid #c8c8c8;border-bottom:1px solid #c8c8c8"></div><div style="left:-190px;width:600px;text-align:right;top:207.68px;font-family:'Liberation Sans', sans-serif;font-size:11.6px;line-height:11.6px;font-weight:normal;color:#000;white-space:pre;letter-spacing:-0.45px">0.3125</div><div style="left:412px;top:201px;width:59px;height:25px;background:#0078d7"></div><div style="left:412px;top:201px;width:59px;height:25px;border-right:1px solid #c8c8c8;border-bottom:1px solid #c8c8c8"></div><div style="left:-131px;width:600px;text-align:right;top:207.68px;font-family:'Liberation Sans', sans-serif;font-size:11.6px;line-height:11.6px;font-weight:normal;color:#fff;white-space:pre;letter-spacing:-0.45px">0.3127</div><div style="left:471px;top:201px;width:72px;height:25px;border-right:1px solid #c8c8c8;border-bottom:1px solid #c8c8c8"></div><div style="left:-59px;width:600px;text-align:right;top:207.68px;font-family:'Liberation Sans', sans-serif;font-size:11.6px;line-height:11.6px;font-weight:normal;color:#000;white-space:pre;letter-spacing:-0.45px">0.4161</div><div style="left:543px;top:201px;width:72px;height:25px;border-right:1px solid #c8c8c8;border-bottom:1px solid #c8c8c8"></div><div style="left:13px;width:600px;text-align:right;top:207.68px;font-family:'Liberation Sans', sans-serif;font-size:11.6px;line-height:11.6px;font-weight:normal;color:#000;white-space:pre;letter-spacing:-0.45px">0.3863</div><div style="left:615px;top:201px;width:70px;height:25px;border-right:1px solid #c8c8c8;border-bottom:1px solid #c8c8c8"></div><div style="left:83px;width:600px;text-align:right;top:207.68px;font-family:'Liberation Sans', sans-serif;font-size:11.6px;line-height:11.6px;font-weight:normal;color:#000;white-space:pre;letter-spacing:-0.45px">0.2438</div><div style="left:685px;top:201px;width:67px;height:25px;border-right:1px solid #c8c8c8;border-bottom:1px solid #c8c8c8"></div><div style="left:150px;width:600px;text-align:right;top:207.68px;font-family:'Liberation Sans', sans-serif;font-size:11.6px;line-height:11.6px;font-weight:normal;color:#000;white-space:pre;letter-spacing:-0.45px">0.3498</div><div style="left:752px;top:201px;width:80px;height:25px;border-right:1px solid #c8c8c8;border-bottom:1px solid #c8c8c8"></div><div style="left:230px;width:600px;text-align:right;top:207.68px;font-family:'Liberation Sans', sans-serif;font-size:11.6px;line-height:11.6px;font-weight:normal;color:#000;white-space:pre;letter-spacing:-0.45px">0.2607</div><div style="left:832px;top:201px;width:80px;height:25px;border-right:1px solid #c8c8c8;border-bottom:1px solid #c8c8c8"></div><div style="left:310px;width:600px;text-align:right;top:207.68px;font-family:'Liberation Sans', sans-serif;font-size:11.6px;line-height:11.6px;font-weight:normal;color:#000;white-space:pre;letter-spacing:-0.45px">0.2605</div><div style="left:912px;top:201px;width:66px;height:25px;border-right:1px solid #c8c8c8;border-bottom:1px solid #c8c8c8"></div><div style="left:376px;width:600px;text-align:right;top:207.68px;font-family:'Liberation Sans', sans-serif;font-size:11.6px;line-height:11.6px;font-weight:normal;color:#000;white-space:pre;letter-spacing:-0.45px">0.5365</div><div style="left:978px;top:201px;width:80px;height:25px;border-right:1px solid #c8c8c8;border-bottom:1px solid #c8c8c8"></div><div style="left:456px;width:600px;text-align:right;top:207.68px;font-family:'Liberation Sans', sans-serif;font-size:11.6px;line-height:11.6px;font-weight:normal;color:#000;white-space:pre;letter-spacing:-0.45px">0.2091</div><div style="left:1058px;top:201px;width:89px;height:25px;border-right:1px solid #c8c8c8;border-bottom:1px solid #c8c8c8"></div><div style="left:545px;width:600px;text-align:right;top:207.68px;font-family:'Liberation Sans', sans-serif;font-size:11.6px;line-height:11.6px;font-weight:normal;color:#000;white-space:pre;letter-spacing:-0.45px">0.4816</div><div style="left:1147px;top:201px;width:68px;height:25px;border-right:1px solid #c8c8c8;border-bottom:1px solid #c8c8c8"></div><div style="left:613px;width:600px;text-align:right;top:207.68px;font-family:'Liberation Sans', sans-serif;font-size:11.6px;line-height:11.6px;font-weight:normal;color:#000;white-space:pre;letter-spacing:-0.45px">0.2867</div><div style="left:1215px;top:201px;width:79px;height:25px;border-right:1px solid #c8c8c8;border-bottom:1px solid #c8c8c8"></div><div style="left:692px;width:600px;text-align:right;top:207.68px;font-family:'Liberation Sans', sans-serif;font-size:11.6px;line-height:11.6px;font-weight:normal;color:#000;white-space:pre;letter-spacing:-0.45px">0.3789</div><div style="left:1294px;top:201px;width:90px;height:25px;border-right:1px solid #c8c8c8;border-bottom:1px solid #c8c8c8"></div><div style="left:782px;width:600px;text-align:right;top:207.68px;font-family:'Liberation Sans', sans-serif;font-size:11.6px;line-height:11.6px;font-weight:normal;color:#000;white-space:pre;letter-spacing:-0.45px">0.4906</div><div style="left:1384px;top:201px;width:60px;height:25px;border-right:1px solid #c8c8c8;border-bottom:1px solid #c8c8c8"></div><div style="left:842px;width:600px;text-align:right;top:207.68px;font-family:'Liberation Sans', sans-serif;font-size:11.6px;line-height:11.6px;font-weight:normal;color:#000;white-space:pre;letter-spacing:-0.45px">0.1853</div><div style="left:1444px;top:201px;width:66px;height:25px;border-right:1px solid #c8c8c8;border-bottom:1px solid #c8c8c8"></div><div style="left:908px;width:600px;text-align:right;top:207.68px;font-family:'Liberation Sans', sans-serif;font-size:11.6px;line-height:11.6px;font-weight:normal;color:#000;white-space:pre;letter-spacing:-0.45px">0.3093</div><div style="left:1510px;top:201px;width:59px;height:25px;border-right:1px solid #c8c8c8;border-bottom:1px solid #c8c8c8"></div><div style="left:967px;width:600px;text-align:right;top:207.68px;font-family:'Liberation Sans', sans-serif;font-size:11.6px;line-height:11.6px;font-weight:normal;color:#000;white-space:pre;letter-spacing:-0.45px">0.5698</div><div style="left:1569px;top:201px;width:61px;height:25px;border-right:1px solid #c8c8c8;border-bottom:1px solid #c8c8c8"></div><div style="left:1028px;width:600px;text-align:right;top:207.68px;font-family:'Liberation Sans', sans-serif;font-size:11.6px;line-height:11.6px;font-weight:normal;color:#000;white-space:pre;letter-spacing:-0.45px">0.4564</div><div style="left:1630px;top:201px;width:72px;height:25px;border-right:1px solid #c8c8c8;border-bottom:1px solid #c8c8c8"></div><div style="left:1100px;width:600px;text-align:right;top:207.68px;font-family:'Liberation Sans', sans-serif;font-size:11.6px;line-height:11.6px;font-weight:normal;color:#000;white-space:pre;letter-spacing:-0.45px">0.3818</div><div style="left:1702px;top:201px;width:62px;height:25px;border-right:1px solid #c8c8c8;border-bottom:1px solid #c8c8c8"></div><div style="left:1162px;width:600px;text-align:right;top:207.68px;font-family:'Liberation Sans', sans-serif;font-size:11.6px;line-height:11.6px;font-weight:normal;color:#000;white-space:pre;letter-spacing:-0.45px">0.2085</div><div style="left:10px;top:226px;width:86px;height:25px;background:#f0f0f0;border-right:1px solid #7a7a7a;border-bottom:1.5px solid #6e6e6e"></div><div style="left:-247.5px;width:600px;text-align:center;top:232.34px;font-family:'Liberation Sans', sans-serif;font-size:12px;line-height:12px;font-weight:bold;color:#000;white-space:pre;letter-spacing:-0.2px">y</div><div style="left:96px;top:226px;width:1668px;height:25px;background:#ffffff"></div><div style="left:96px;top:226px;width:63px;height:25px;border-right:1px solid #c8c8c8;border-bottom:1px solid #c8c8c8"></div><div style="left:-443px;width:600px;text-align:right;top:232.68px;font-family:'Liberation Sans', sans-serif;font-size:11.6px;line-height:11.6px;font-weight:normal;color:#000;white-space:pre;letter-spacing:-0.45px">0.3289</div><div style="left:159px;top:226px;width:60px;height:25px;border-right:1px solid #c8c8c8;border-bottom:1px solid #c8c8c8"></div><div style="left:-383px;width:600px;text-align:right;top:232.68px;font-family:'Liberation Sans', sans-serif;font-size:11.6px;line-height:11.6px;font-weight:normal;color:#000;white-space:pre;letter-spacing:-0.45px">0.3287</div><div style="left:219px;top:226px;width:66px;height:25px;border-right:1px solid #c8c8c8;border-bottom:1px solid #c8c8c8"></div><div style="left:-317px;width:600px;text-align:right;top:232.68px;font-family:'Liberation Sans', sans-serif;font-size:11.6px;line-height:11.6px;font-weight:normal;color:#000;white-space:pre;letter-spacing:-0.45px">0.3294</div><div style="left:285px;top:226px;width:63px;height:25px;border-right:1px solid #c8c8c8;border-bottom:1px solid #c8c8c8"></div><div style="left:-254px;width:600px;text-align:right;top:232.68px;font-family:'Liberation Sans', sans-serif;font-size:11.6px;line-height:11.6px;font-weight:normal;color:#000;white-space:pre;letter-spacing:-0.45px">0.3290</div><div style="left:348px;top:226px;width:64px;height:25px;border-right:1px solid #c8c8c8;border-bottom:1px solid #c8c8c8"></div><div style="left:-190px;width:600px;text-align:right;top:232.68px;font-family:'Liberation Sans', sans-serif;font-size:11.6px;line-height:11.6px;font-weight:normal;color:#000;white-space:pre;letter-spacing:-0.45px">0.3291</div><div style="left:412px;top:226px;width:59px;height:25px;background:#0078d7"></div><div style="left:412px;top:226px;width:59px;height:25px;border-right:1px solid #c8c8c8;border-bottom:1px solid #c8c8c8"></div><div style="left:-131px;width:600px;text-align:right;top:232.68px;font-family:'Liberation Sans', sans-serif;font-size:11.6px;line-height:11.6px;font-weight:normal;color:#fff;white-space:pre;letter-spacing:-0.45px">0.3291</div><div style="left:471px;top:226px;width:72px;height:25px;border-right:1px solid #c8c8c8;border-bottom:1px solid #c8c8c8"></div><div style="left:-59px;width:600px;text-align:right;top:232.68px;font-family:'Liberation Sans', sans-serif;font-size:11.6px;line-height:11.6px;font-weight:normal;color:#000;white-space:pre;letter-spacing:-0.45px">0.3675</div><div style="left:543px;top:226px;width:72px;height:25px;border-right:1px solid #c8c8c8;border-bottom:1px solid #c8c8c8"></div><div style="left:13px;width:600px;text-align:right;top:232.68px;font-family:'Liberation Sans', sans-serif;font-size:11.6px;line-height:11.6px;font-weight:normal;color:#000;white-space:pre;letter-spacing:-0.45px">0.3563</div><div style="left:615px;top:226px;width:70px;height:25px;border-right:1px solid #c8c8c8;border-bottom:1px solid #c8c8c8"></div><div style="left:83px;width:600px;text-align:right;top:232.68px;font-family:'Liberation Sans', sans-serif;font-size:11.6px;line-height:11.6px;font-weight:normal;color:#000;white-space:pre;letter-spacing:-0.45px">0.2543</div><div style="left:685px;top:226px;width:67px;height:25px;border-right:1px solid #c8c8c8;border-bottom:1px solid #c8c8c8"></div><div style="left:150px;width:600px;text-align:right;top:232.68px;font-family:'Liberation Sans', sans-serif;font-size:11.6px;line-height:11.6px;font-weight:normal;color:#000;white-space:pre;letter-spacing:-0.45px">0.4436</div><div style="left:752px;top:226px;width:80px;height:25px;border-right:1px solid #c8c8c8;border-bottom:1px solid #c8c8c8"></div><div style="left:230px;width:600px;text-align:right;top:232.68px;font-family:'Liberation Sans', sans-serif;font-size:11.6px;line-height:11.6px;font-weight:normal;color:#000;white-space:pre;letter-spacing:-0.45px">0.2388</div><div style="left:832px;top:226px;width:80px;height:25px;border-right:1px solid #c8c8c8;border-bottom:1px solid #c8c8c8"></div><div style="left:310px;width:600px;text-align:right;top:232.68px;font-family:'Liberation Sans', sans-serif;font-size:11.6px;line-height:11.6px;font-weight:normal;color:#000;white-space:pre;letter-spacing:-0.45px">0.3650</div><div style="left:912px;top:226px;width:66px;height:25px;border-right:1px solid #c8c8c8;border-bottom:1px solid #c8c8c8"></div><div style="left:376px;width:600px;text-align:right;top:232.68px;font-family:'Liberation Sans', sans-serif;font-size:11.6px;line-height:11.6px;font-weight:normal;color:#000;white-space:pre;letter-spacing:-0.45px">0.4095</div><div style="left:978px;top:226px;width:80px;height:25px;border-right:1px solid #c8c8c8;border-bottom:1px solid #c8c8c8"></div><div style="left:456px;width:600px;text-align:right;top:232.68px;font-family:'Liberation Sans', sans-serif;font-size:11.6px;line-height:11.6px;font-weight:normal;color:#000;white-space:pre;letter-spacing:-0.45px">0.1786</div><div style="left:1058px;top:226px;width:89px;height:25px;border-right:1px solid #c8c8c8;border-bottom:1px solid #c8c8c8"></div><div style="left:545px;width:600px;text-align:right;top:232.68px;font-family:'Liberation Sans', sans-serif;font-size:11.6px;line-height:11.6px;font-weight:normal;color:#000;white-space:pre;letter-spacing:-0.45px">0.3126</div><div style="left:1147px;top:226px;width:68px;height:25px;border-right:1px solid #c8c8c8;border-bottom:1px solid #c8c8c8"></div><div style="left:613px;width:600px;text-align:right;top:232.68px;font-family:'Liberation Sans', sans-serif;font-size:11.6px;line-height:11.6px;font-weight:normal;color:#000;white-space:pre;letter-spacing:-0.45px">0.2115</div><div style="left:1215px;top:226px;width:79px;height:25px;border-right:1px solid #c8c8c8;border-bottom:1px solid #c8c8c8"></div><div style="left:692px;width:600px;text-align:right;top:232.68px;font-family:'Liberation Sans', sans-serif;font-size:11.6px;line-height:11.6px;font-weight:normal;color:#000;white-space:pre;letter-spacing:-0.45px">0.5073</div><div style="left:1294px;top:226px;width:90px;height:25px;border-right:1px solid #c8c8c8;border-bottom:1px solid #c8c8c8"></div><div style="left:782px;width:600px;text-align:right;top:232.68px;font-family:'Liberation Sans', sans-serif;font-size:11.6px;line-height:11.6px;font-weight:normal;color:#000;white-space:pre;letter-spacing:-0.45px">0.4455</div><div style="left:1384px;top:226px;width:60px;height:25px;border-right:1px solid #c8c8c8;border-bottom:1px solid #c8c8c8"></div><div style="left:842px;width:600px;text-align:right;top:232.68px;font-family:'Liberation Sans', sans-serif;font-size:11.6px;line-height:11.6px;font-weight:normal;color:#000;white-space:pre;letter-spacing:-0.45px">0.1269</div><div style="left:1444px;top:226px;width:66px;height:25px;border-right:1px solid #c8c8c8;border-bottom:1px solid #c8c8c8"></div><div style="left:908px;width:600px;text-align:right;top:232.68px;font-family:'Liberation Sans', sans-serif;font-size:11.6px;line-height:11.6px;font-weight:normal;color:#000;white-space:pre;letter-spacing:-0.45px">0.5094</div><div style="left:1510px;top:226px;width:59px;height:25px;border-right:1px solid #c8c8c8;border-bottom:1px solid #c8c8c8"></div><div style="left:967px;width:600px;text-align:right;top:232.68px;font-family:'Liberation Sans', sans-serif;font-size:11.6px;line-height:11.6px;font-weight:normal;color:#000;white-space:pre;letter-spacing:-0.45px">0.3227</div><div style="left:1569px;top:226px;width:61px;height:25px;border-right:1px solid #c8c8c8;border-bottom:1px solid #c8c8c8"></div><div style="left:1028px;width:600px;text-align:right;top:232.68px;font-family:'Liberation Sans', sans-serif;font-size:11.6px;line-height:11.6px;font-weight:normal;color:#000;white-space:pre;letter-spacing:-0.45px">0.4783</div><div style="left:1630px;top:226px;width:72px;height:25px;border-right:1px solid #c8c8c8;border-bottom:1px solid #c8c8c8"></div><div style="left:1100px;width:600px;text-align:right;top:232.68px;font-family:'Liberation Sans', sans-serif;font-size:11.6px;line-height:11.6px;font-weight:normal;color:#000;white-space:pre;letter-spacing:-0.45px">0.2416</div><div style="left:1702px;top:226px;width:62px;height:25px;border-right:1px solid #c8c8c8;border-bottom:1px solid #c8c8c8"></div><div style="left:1162px;width:600px;text-align:right;top:232.68px;font-family:'Liberation Sans', sans-serif;font-size:11.6px;line-height:11.6px;font-weight:normal;color:#000;white-space:pre;letter-spacing:-0.45px">0.2625</div><div style="left:10px;top:251px;width:86px;height:25px;background:#f0f0f0;border-right:1px solid #7a7a7a;border-bottom:1.5px solid #6e6e6e"></div><div style="left:-247.5px;width:600px;text-align:center;top:257.34px;font-family:'Liberation Sans', sans-serif;font-size:12px;line-height:12px;font-weight:bold;color:#000;white-space:pre;letter-spacing:-0.2px">Y</div><div style="left:96px;top:251px;width:1668px;height:25px;background:#ffffff"></div><div style="left:96px;top:251px;width:63px;height:25px;border-right:1px solid #c8c8c8;border-bottom:1px solid #c8c8c8"></div><div style="left:-443px;width:600px;text-align:right;top:257.68px;font-family:'Liberation Sans', sans-serif;font-size:11.6px;line-height:11.6px;font-weight:normal;color:#000;white-space:pre;letter-spacing:-0.45px">0.000</div><div style="left:159px;top:251px;width:60px;height:25px;border-right:1px solid #c8c8c8;border-bottom:1px solid #c8c8c8"></div><div style="left:-383px;width:600px;text-align:right;top:257.68px;font-family:'Liberation Sans', sans-serif;font-size:11.6px;line-height:11.6px;font-weight:normal;color:#000;white-space:pre;letter-spacing:-0.45px">38.312</div><div style="left:219px;top:251px;width:66px;height:25px;border-right:1px solid #c8c8c8;border-bottom:1px solid #c8c8c8"></div><div style="left:-317px;width:600px;text-align:right;top:257.68px;font-family:'Liberation Sans', sans-serif;font-size:11.6px;line-height:11.6px;font-weight:normal;color:#000;white-space:pre;letter-spacing:-0.45px">56.514</div><div style="left:285px;top:251px;width:63px;height:25px;border-right:1px solid #c8c8c8;border-bottom:1px solid #c8c8c8"></div><div style="left:-254px;width:600px;text-align:right;top:257.68px;font-family:'Liberation Sans', sans-serif;font-size:11.6px;line-height:11.6px;font-weight:normal;color:#000;white-space:pre;letter-spacing:-0.45px">75.357</div><div style="left:348px;top:251px;width:64px;height:25px;border-right:1px solid #c8c8c8;border-bottom:1px solid #c8c8c8"></div><div style="left:-190px;width:600px;text-align:right;top:257.68px;font-family:'Liberation Sans', sans-serif;font-size:11.6px;line-height:11.6px;font-weight:normal;color:#000;white-space:pre;letter-spacing:-0.45px">93.731</div><div style="left:412px;top:251px;width:59px;height:25px;background:#0078d7"></div><div style="left:412px;top:251px;width:59px;height:25px;border-right:1px solid #c8c8c8;border-bottom:1px solid #c8c8c8"></div><div style="left:-131px;width:600px;text-align:right;top:257.68px;font-family:'Liberation Sans', sans-serif;font-size:11.6px;line-height:11.6px;font-weight:normal;color:#fff;white-space:pre;letter-spacing:-0.45px">120.503</div><div style="left:471px;top:251px;width:72px;height:25px;border-right:1px solid #c8c8c8;border-bottom:1px solid #c8c8c8"></div><div style="left:-59px;width:600px;text-align:right;top:257.68px;font-family:'Liberation Sans', sans-serif;font-size:11.6px;line-height:11.6px;font-weight:normal;color:#000;white-space:pre;letter-spacing:-0.45px">9.317</div><div style="left:543px;top:251px;width:72px;height:25px;border-right:1px solid #c8c8c8;border-bottom:1px solid #c8c8c8"></div><div style="left:13px;width:600px;text-align:right;top:257.68px;font-family:'Liberation Sans', sans-serif;font-size:11.6px;line-height:11.6px;font-weight:normal;color:#000;white-space:pre;letter-spacing:-0.45px">38.059</div><div style="left:615px;top:251px;width:70px;height:25px;border-right:1px solid #c8c8c8;border-bottom:1px solid #c8c8c8"></div><div style="left:83px;width:600px;text-align:right;top:257.68px;font-family:'Liberation Sans', sans-serif;font-size:11.6px;line-height:11.6px;font-weight:normal;color:#000;white-space:pre;letter-spacing:-0.45px">19.280</div><div style="left:685px;top:251px;width:67px;height:25px;border-right:1px solid #c8c8c8;border-bottom:1px solid #c8c8c8"></div><div style="left:150px;width:600px;text-align:right;top:257.68px;font-family:'Liberation Sans', sans-serif;font-size:11.6px;line-height:11.6px;font-weight:normal;color:#000;white-space:pre;letter-spacing:-0.45px">13.165</div><div style="left:752px;top:251px;width:80px;height:25px;border-right:1px solid #c8c8c8;border-bottom:1px solid #c8c8c8"></div><div style="left:230px;width:600px;text-align:right;top:257.68px;font-family:'Liberation Sans', sans-serif;font-size:11.6px;line-height:11.6px;font-weight:normal;color:#000;white-space:pre;letter-spacing:-0.45px">23.611</div><div style="left:832px;top:251px;width:80px;height:25px;border-right:1px solid #c8c8c8;border-bottom:1px solid #c8c8c8"></div><div style="left:310px;width:600px;text-align:right;top:257.68px;font-family:'Liberation Sans', sans-serif;font-size:11.6px;line-height:11.6px;font-weight:normal;color:#000;white-space:pre;letter-spacing:-0.45px">46.777</div><div style="left:912px;top:251px;width:66px;height:25px;border-right:1px solid #c8c8c8;border-bottom:1px solid #c8c8c8"></div><div style="left:376px;width:600px;text-align:right;top:257.68px;font-family:'Liberation Sans', sans-serif;font-size:11.6px;line-height:11.6px;font-weight:normal;color:#000;white-space:pre;letter-spacing:-0.45px">30.696</div><div style="left:978px;top:251px;width:80px;height:25px;border-right:1px solid #c8c8c8;border-bottom:1px solid #c8c8c8"></div><div style="left:456px;width:600px;text-align:right;top:257.68px;font-family:'Liberation Sans', sans-serif;font-size:11.6px;line-height:11.6px;font-weight:normal;color:#000;white-space:pre;letter-spacing:-0.45px">11.737</div><div style="left:1058px;top:251px;width:89px;height:25px;border-right:1px solid #c8c8c8;border-bottom:1px solid #c8c8c8"></div><div style="left:545px;width:600px;text-align:right;top:257.68px;font-family:'Liberation Sans', sans-serif;font-size:11.6px;line-height:11.6px;font-weight:normal;color:#000;white-space:pre;letter-spacing:-0.45px">19.911</div><div style="left:1147px;top:251px;width:68px;height:25px;border-right:1px solid #c8c8c8;border-bottom:1px solid #c8c8c8"></div><div style="left:613px;width:600px;text-align:right;top:257.68px;font-family:'Liberation Sans', sans-serif;font-size:11.6px;line-height:11.6px;font-weight:normal;color:#000;white-space:pre;letter-spacing:-0.45px">6.058</div><div style="left:1215px;top:251px;width:79px;height:25px;border-right:1px solid #c8c8c8;border-bottom:1px solid #c8c8c8"></div><div style="left:692px;width:600px;text-align:right;top:257.68px;font-family:'Liberation Sans', sans-serif;font-size:11.6px;line-height:11.6px;font-weight:normal;color:#000;white-space:pre;letter-spacing:-0.45px">48.675</div><div style="left:1294px;top:251px;width:90px;height:25px;border-right:1px solid #c8c8c8;border-bottom:1px solid #c8c8c8"></div><div style="left:782px;width:600px;text-align:right;top:257.68px;font-family:'Liberation Sans', sans-serif;font-size:11.6px;line-height:11.6px;font-weight:normal;color:#000;white-space:pre;letter-spacing:-0.45px">47.011</div><div style="left:1384px;top:251px;width:60px;height:25px;border-right:1px solid #c8c8c8;border-bottom:1px solid #c8c8c8"></div><div style="left:842px;width:600px;text-align:right;top:257.68px;font-family:'Liberation Sans', sans-serif;font-size:11.6px;line-height:11.6px;font-weight:normal;color:#000;white-space:pre;letter-spacing:-0.45px">6.070</div><div style="left:1444px;top:251px;width:66px;height:25px;border-right:1px solid #c8c8c8;border-bottom:1px solid #c8c8c8"></div><div style="left:908px;width:600px;text-align:right;top:257.68px;font-family:'Liberation Sans', sans-serif;font-size:11.6px;line-height:11.6px;font-weight:normal;color:#000;white-space:pre;letter-spacing:-0.45px">24.977</div><div style="left:1510px;top:251px;width:59px;height:25px;border-right:1px solid #c8c8c8;border-bottom:1px solid #c8c8c8"></div><div style="left:967px;width:600px;text-align:right;top:257.68px;font-family:'Liberation Sans', sans-serif;font-size:11.6px;line-height:11.6px;font-weight:normal;color:#000;white-space:pre;letter-spacing:-0.45px">12.058</div><div style="left:1569px;top:251px;width:61px;height:25px;border-right:1px solid #c8c8c8;border-bottom:1px solid #c8c8c8"></div><div style="left:1028px;width:600px;text-align:right;top:257.68px;font-family:'Liberation Sans', sans-serif;font-size:11.6px;line-height:11.6px;font-weight:normal;color:#000;white-space:pre;letter-spacing:-0.45px">67.743</div><div style="left:1630px;top:251px;width:72px;height:25px;border-right:1px solid #c8c8c8;border-bottom:1px solid #c8c8c8"></div><div style="left:1100px;width:600px;text-align:right;top:257.68px;font-family:'Liberation Sans', sans-serif;font-size:11.6px;line-height:11.6px;font-weight:normal;color:#000;white-space:pre;letter-spacing:-0.45px">20.374</div><div style="left:1702px;top:251px;width:62px;height:25px;border-right:1px solid #c8c8c8;border-bottom:1px solid #c8c8c8"></div><div style="left:1162px;width:600px;text-align:right;top:257.68px;font-family:'Liberation Sans', sans-serif;font-size:11.6px;line-height:11.6px;font-weight:normal;color:#000;white-space:pre;letter-spacing:-0.45px">20.865</div><div style="left:10px;top:276px;width:86px;height:25px;background:#f0f0f0;border-right:1px solid #7a7a7a;border-bottom:1.5px solid #6e6e6e"></div><div style="left:-247.5px;width:600px;text-align:center;top:282.34px;font-family:'Liberation Sans', sans-serif;font-size:12px;line-height:12px;font-weight:bold;color:#000;white-space:pre;letter-spacing:-0.2px">Delta E</div><div style="left:96px;top:276px;width:1668px;height:25px;background:#b0ffb0"></div><div style="left:96px;top:276px;width:63px;height:25px;border-right:1px solid #c8c8c8;border-bottom:1px solid #c8c8c8"></div><div style="left:-443px;width:600px;text-align:right;top:282.68px;font-family:'Liberation Sans', sans-serif;font-size:11.6px;line-height:11.6px;font-weight:bold;color:#000;white-space:pre;letter-spacing:-0.1px">0.0</div><div style="left:159px;top:276px;width:60px;height:25px;border-right:1px solid #c8c8c8;border-bottom:1px solid #c8c8c8"></div><div style="left:-383px;width:600px;text-align:right;top:282.68px;font-family:'Liberation Sans', sans-serif;font-size:11.6px;line-height:11.6px;font-weight:bold;color:#000;white-space:pre;letter-spacing:-0.1px">0.3</div><div style="left:219px;top:276px;width:66px;height:25px;border-right:1px solid #c8c8c8;border-bottom:1px solid #c8c8c8"></div><div style="left:-317px;width:600px;text-align:right;top:282.68px;font-family:'Liberation Sans', sans-serif;font-size:11.6px;line-height:11.6px;font-weight:bold;color:#000;white-space:pre;letter-spacing:-0.1px">0.2</div><div style="left:285px;top:276px;width:63px;height:25px;border-right:1px solid #c8c8c8;border-bottom:1px solid #c8c8c8"></div><div style="left:-254px;width:600px;text-align:right;top:282.68px;font-family:'Liberation Sans', sans-serif;font-size:11.6px;line-height:11.6px;font-weight:bold;color:#000;white-space:pre;letter-spacing:-0.1px">0.1</div><div style="left:348px;top:276px;width:64px;height:25px;border-right:1px solid #c8c8c8;border-bottom:1px solid #c8c8c8"></div><div style="left:-190px;width:600px;text-align:right;top:282.68px;font-family:'Liberation Sans', sans-serif;font-size:11.6px;line-height:11.6px;font-weight:bold;color:#000;white-space:pre;letter-spacing:-0.1px">0.2</div><div style="left:412px;top:276px;width:59px;height:25px;border-right:1px solid #c8c8c8;border-bottom:1px solid #c8c8c8"></div><div style="left:-131px;width:600px;text-align:right;top:282.68px;font-family:'Liberation Sans', sans-serif;font-size:11.6px;line-height:11.6px;font-weight:bold;color:#000;white-space:pre;letter-spacing:-0.1px">0.1</div><div style="left:471px;top:276px;width:72px;height:25px;border-right:1px solid #c8c8c8;border-bottom:1px solid #c8c8c8"></div><div style="left:-59px;width:600px;text-align:right;top:282.68px;font-family:'Liberation Sans', sans-serif;font-size:11.6px;line-height:11.6px;font-weight:bold;color:#000;white-space:pre;letter-spacing:-0.1px">0.6</div><div style="left:543px;top:276px;width:72px;height:25px;border-right:1px solid #c8c8c8;border-bottom:1px solid #c8c8c8"></div><div style="left:13px;width:600px;text-align:right;top:282.68px;font-family:'Liberation Sans', sans-serif;font-size:11.6px;line-height:11.6px;font-weight:bold;color:#000;white-space:pre;letter-spacing:-0.1px">1.1</div><div style="left:615px;top:276px;width:70px;height:25px;border-right:1px solid #c8c8c8;border-bottom:1px solid #c8c8c8"></div><div style="left:83px;width:600px;text-align:right;top:282.68px;font-family:'Liberation Sans', sans-serif;font-size:11.6px;line-height:11.6px;font-weight:bold;color:#000;white-space:pre;letter-spacing:-0.1px">1.4</div><div style="left:685px;top:276px;width:67px;height:25px;border-right:1px solid #c8c8c8;border-bottom:1px solid #c8c8c8"></div><div style="left:150px;width:600px;text-align:right;top:282.68px;font-family:'Liberation Sans', sans-serif;font-size:11.6px;line-height:11.6px;font-weight:bold;color:#000;white-space:pre;letter-spacing:-0.1px">1.1</div><div style="left:752px;top:276px;width:80px;height:25px;border-right:1px solid #c8c8c8;border-bottom:1px solid #c8c8c8"></div><div style="left:230px;width:600px;text-align:right;top:282.68px;font-family:'Liberation Sans', sans-serif;font-size:11.6px;line-height:11.6px;font-weight:bold;color:#000;white-space:pre;letter-spacing:-0.1px">1.7</div><div style="left:832px;top:276px;width:80px;height:25px;border-right:1px solid #c8c8c8;border-bottom:1px solid #c8c8c8"></div><div style="left:310px;width:600px;text-align:right;top:282.68px;font-family:'Liberation Sans', sans-serif;font-size:11.6px;line-height:11.6px;font-weight:bold;color:#000;white-space:pre;letter-spacing:-0.1px">0.7</div><div style="left:912px;top:276px;width:66px;height:25px;border-right:1px solid #c8c8c8;border-bottom:1px solid #c8c8c8"></div><div style="left:376px;width:600px;text-align:right;top:282.68px;font-family:'Liberation Sans', sans-serif;font-size:11.6px;line-height:11.6px;font-weight:bold;color:#000;white-space:pre;letter-spacing:-0.1px">1.6</div><div style="left:978px;top:276px;width:80px;height:25px;border-right:1px solid #c8c8c8;border-bottom:1px solid #c8c8c8"></div><div style="left:456px;width:600px;text-align:right;top:282.68px;font-family:'Liberation Sans', sans-serif;font-size:11.6px;line-height:11.6px;font-weight:bold;color:#000;white-space:pre;letter-spacing:-0.1px">0.2</div><div style="left:1058px;top:276px;width:89px;height:25px;border-right:1px solid #c8c8c8;border-bottom:1px solid #c8c8c8"></div><div style="left:545px;width:600px;text-align:right;top:282.68px;font-family:'Liberation Sans', sans-serif;font-size:11.6px;line-height:11.6px;font-weight:bold;color:#000;white-space:pre;letter-spacing:-0.1px">0.2</div><div style="left:1147px;top:276px;width:68px;height:25px;border-right:1px solid #c8c8c8;border-bottom:1px solid #c8c8c8"></div><div style="left:613px;width:600px;text-align:right;top:282.68px;font-family:'Liberation Sans', sans-serif;font-size:11.6px;line-height:11.6px;font-weight:bold;color:#000;white-space:pre;letter-spacing:-0.1px">0.5</div><div style="left:1215px;top:276px;width:79px;height:25px;border-right:1px solid #c8c8c8;border-bottom:1px solid #c8c8c8"></div><div style="left:692px;width:600px;text-align:right;top:282.68px;font-family:'Liberation Sans', sans-serif;font-size:11.6px;line-height:11.6px;font-weight:bold;color:#000;white-space:pre;letter-spacing:-0.1px">0.5</div><div style="left:1294px;top:276px;width:90px;height:25px;border-right:1px solid #c8c8c8;border-bottom:1px solid #c8c8c8"></div><div style="left:782px;width:600px;text-align:right;top:282.68px;font-family:'Liberation Sans', sans-serif;font-size:11.6px;line-height:11.6px;font-weight:bold;color:#000;white-space:pre;letter-spacing:-0.1px">1.2</div><div style="left:1384px;top:276px;width:60px;height:25px;border-right:1px solid #c8c8c8;border-bottom:1px solid #c8c8c8"></div><div style="left:842px;width:600px;text-align:right;top:282.68px;font-family:'Liberation Sans', sans-serif;font-size:11.6px;line-height:11.6px;font-weight:bold;color:#000;white-space:pre;letter-spacing:-0.1px">0.5</div><div style="left:1444px;top:276px;width:66px;height:25px;border-right:1px solid #c8c8c8;border-bottom:1px solid #c8c8c8"></div><div style="left:908px;width:600px;text-align:right;top:282.68px;font-family:'Liberation Sans', sans-serif;font-size:11.6px;line-height:11.6px;font-weight:bold;color:#000;white-space:pre;letter-spacing:-0.1px">0.8</div><div style="left:1510px;top:276px;width:59px;height:25px;border-right:1px solid #c8c8c8;border-bottom:1px solid #c8c8c8"></div><div style="left:967px;width:600px;text-align:right;top:282.68px;font-family:'Liberation Sans', sans-serif;font-size:11.6px;line-height:11.6px;font-weight:bold;color:#000;white-space:pre;letter-spacing:-0.1px">1.0</div><div style="left:1569px;top:276px;width:61px;height:25px;border-right:1px solid #c8c8c8;border-bottom:1px solid #c8c8c8"></div><div style="left:1028px;width:600px;text-align:right;top:282.68px;font-family:'Liberation Sans', sans-serif;font-size:11.6px;line-height:11.6px;font-weight:bold;color:#000;white-space:pre;letter-spacing:-0.1px">0.8</div><div style="left:1630px;top:276px;width:72px;height:25px;border-right:1px solid #c8c8c8;border-bottom:1px solid #c8c8c8"></div><div style="left:1100px;width:600px;text-align:right;top:282.68px;font-family:'Liberation Sans', sans-serif;font-size:11.6px;line-height:11.6px;font-weight:bold;color:#000;white-space:pre;letter-spacing:-0.1px">0.2</div><div style="left:1702px;top:276px;width:62px;height:25px;border-right:1px solid #c8c8c8;border-bottom:1px solid #c8c8c8"></div><div style="left:1162px;width:600px;text-align:right;top:282.68px;font-family:'Liberation Sans', sans-serif;font-size:11.6px;line-height:11.6px;font-weight:bold;color:#000;white-space:pre;letter-spacing:-0.1px">0.7</div><div style="left:10px;top:301px;width:86px;height:25px;background:#f0f0f0;border-right:1px solid #7a7a7a;border-bottom:1.5px solid #6e6e6e"></div><div style="left:-247.5px;width:600px;text-align:center;top:307.34px;font-family:'Liberation Sans', sans-serif;font-size:12px;line-height:12px;font-weight:bold;color:#000;white-space:pre;letter-spacing:-0.2px">delta xy</div><div style="left:96px;top:301px;width:1668px;height:25px;background:#f0f0f0"></div><div style="left:96px;top:301px;width:63px;height:25px;border-right:1px solid #c8c8c8;border-bottom:1px solid #c8c8c8"></div><div style="left:-443px;width:600px;text-align:right;top:307.68px;font-family:'Liberation Sans', sans-serif;font-size:11.6px;line-height:11.6px;font-weight:normal;color:#000;white-space:pre;letter-spacing:-0.45px">0.0204</div><div style="left:159px;top:301px;width:60px;height:25px;border-right:1px solid #c8c8c8;border-bottom:1px solid #c8c8c8"></div><div style="left:-383px;width:600px;text-align:right;top:307.68px;font-family:'Liberation Sans', sans-serif;font-size:11.6px;line-height:11.6px;font-weight:normal;color:#000;white-space:pre;letter-spacing:-0.45px">0.0004</div><div style="left:219px;top:301px;width:66px;height:25px;border-right:1px solid #c8c8c8;border-bottom:1px solid #c8c8c8"></div><div style="left:-317px;width:600px;text-align:right;top:307.68px;font-family:'Liberation Sans', sans-serif;font-size:11.6px;line-height:11.6px;font-weight:normal;color:#000;white-space:pre;letter-spacing:-0.45px">0.0005</div><div style="left:285px;top:301px;width:63px;height:25px;border-right:1px solid #c8c8c8;border-bottom:1px solid #c8c8c8"></div><div style="left:-254px;width:600px;text-align:right;top:307.68px;font-family:'Liberation Sans', sans-serif;font-size:11.6px;line-height:11.6px;font-weight:normal;color:#000;white-space:pre;letter-spacing:-0.45px">0.0001</div><div style="left:348px;top:301px;width:64px;height:25px;border-right:1px solid #c8c8c8;border-bottom:1px solid #c8c8c8"></div><div style="left:-190px;width:600px;text-align:right;top:307.68px;font-family:'Liberation Sans', sans-serif;font-size:11.6px;line-height:11.6px;font-weight:normal;color:#000;white-space:pre;letter-spacing:-0.45px">0.0002</div><div style="left:412px;top:301px;width:59px;height:25px;border-right:1px solid #c8c8c8;border-bottom:1px solid #c8c8c8"></div><div style="left:-131px;width:600px;text-align:right;top:307.68px;font-family:'Liberation Sans', sans-serif;font-size:11.6px;line-height:11.6px;font-weight:normal;color:#000;white-space:pre;letter-spacing:-0.45px">0.0001</div><div style="left:471px;top:301px;width:72px;height:25px;border-right:1px solid #c8c8c8;border-bottom:1px solid #c8c8c8"></div><div style="left:-59px;width:600px;text-align:right;top:307.68px;font-family:'Liberation Sans', sans-serif;font-size:11.6px;line-height:11.6px;font-weight:normal;color:#000;white-space:pre;letter-spacing:-0.45px">0.0015</div><div style="left:543px;top:301px;width:72px;height:25px;border-right:1px solid #c8c8c8;border-bottom:1px solid #c8c8c8"></div><div style="left:13px;width:600px;text-align:right;top:307.68px;font-family:'Liberation Sans', sans-serif;font-size:11.6px;line-height:11.6px;font-weight:normal;color:#000;white-space:pre;letter-spacing:-0.45px">0.0025</div><div style="left:615px;top:301px;width:70px;height:25px;border-right:1px solid #c8c8c8;border-bottom:1px solid #c8c8c8"></div><div style="left:83px;width:600px;text-align:right;top:307.68px;font-family:'Liberation Sans', sans-serif;font-size:11.6px;line-height:11.6px;font-weight:normal;color:#000;white-space:pre;letter-spacing:-0.45px">0.0050</div><div style="left:685px;top:301px;width:67px;height:25px;border-right:1px solid #c8c8c8;border-bottom:1px solid #c8c8c8"></div><div style="left:150px;width:600px;text-align:right;top:307.68px;font-family:'Liberation Sans', sans-serif;font-size:11.6px;line-height:11.6px;font-weight:normal;color:#000;white-space:pre;letter-spacing:-0.45px">0.0078</div><div style="left:752px;top:301px;width:80px;height:25px;border-right:1px solid #c8c8c8;border-bottom:1px solid #c8c8c8"></div><div style="left:230px;width:600px;text-align:right;top:307.68px;font-family:'Liberation Sans', sans-serif;font-size:11.6px;line-height:11.6px;font-weight:normal;color:#000;white-space:pre;letter-spacing:-0.45px">0.0082</div><div style="left:832px;top:301px;width:80px;height:25px;border-right:1px solid #c8c8c8;border-bottom:1px solid #c8c8c8"></div><div style="left:310px;width:600px;text-align:right;top:307.68px;font-family:'Liberation Sans', sans-serif;font-size:11.6px;line-height:11.6px;font-weight:normal;color:#000;white-space:pre;letter-spacing:-0.45px">0.0029</div><div style="left:912px;top:301px;width:66px;height:25px;border-right:1px solid #c8c8c8;border-bottom:1px solid #c8c8c8"></div><div style="left:376px;width:600px;text-align:right;top:307.68px;font-family:'Liberation Sans', sans-serif;font-size:11.6px;line-height:11.6px;font-weight:normal;color:#000;white-space:pre;letter-spacing:-0.45px">0.0113</div><div style="left:978px;top:301px;width:80px;height:25px;border-right:1px solid #c8c8c8;border-bottom:1px solid #c8c8c8"></div><div style="left:456px;width:600px;text-align:right;top:307.68px;font-family:'Liberation Sans', sans-serif;font-size:11.6px;line-height:11.6px;font-weight:normal;color:#000;white-space:pre;letter-spacing:-0.45px">0.0008</div><div style="left:1058px;top:301px;width:89px;height:25px;border-right:1px solid #c8c8c8;border-bottom:1px solid #c8c8c8"></div><div style="left:545px;width:600px;text-align:right;top:307.68px;font-family:'Liberation Sans', sans-serif;font-size:11.6px;line-height:11.6px;font-weight:normal;color:#000;white-space:pre;letter-spacing:-0.45px">0.0026</div><div style="left:1147px;top:301px;width:68px;height:25px;border-right:1px solid #c8c8c8;border-bottom:1px solid #c8c8c8"></div><div style="left:613px;width:600px;text-align:right;top:307.68px;font-family:'Liberation Sans', sans-serif;font-size:11.6px;line-height:11.6px;font-weight:normal;color:#000;white-space:pre;letter-spacing:-0.45px">0.0033</div><div style="left:1215px;top:301px;width:79px;height:25px;border-right:1px solid #c8c8c8;border-bottom:1px solid #c8c8c8"></div><div style="left:692px;width:600px;text-align:right;top:307.68px;font-family:'Liberation Sans', sans-serif;font-size:11.6px;line-height:11.6px;font-weight:normal;color:#000;white-space:pre;letter-spacing:-0.45px">0.0049</div><div style="left:1294px;top:301px;width:90px;height:25px;border-right:1px solid #c8c8c8;border-bottom:1px solid #c8c8c8"></div><div style="left:782px;width:600px;text-align:right;top:307.68px;font-family:'Liberation Sans', sans-serif;font-size:11.6px;line-height:11.6px;font-weight:normal;color:#000;white-space:pre;letter-spacing:-0.45px">0.0089</div><div style="left:1384px;top:301px;width:60px;height:25px;border-right:1px solid #c8c8c8;border-bottom:1px solid #c8c8c8"></div><div style="left:842px;width:600px;text-align:right;top:307.68px;font-family:'Liberation Sans', sans-serif;font-size:11.6px;line-height:11.6px;font-weight:normal;color:#000;white-space:pre;letter-spacing:-0.45px">0.0040</div><div style="left:1444px;top:301px;width:66px;height:25px;border-right:1px solid #c8c8c8;border-bottom:1px solid #c8c8c8"></div><div style="left:908px;width:600px;text-align:right;top:307.68px;font-family:'Liberation Sans', sans-serif;font-size:11.6px;line-height:11.6px;font-weight:normal;color:#000;white-space:pre;letter-spacing:-0.45px">0.0059</div><div style="left:1510px;top:301px;width:59px;height:25px;border-right:1px solid #c8c8c8;border-bottom:1px solid #c8c8c8"></div><div style="left:967px;width:600px;text-align:right;top:307.68px;font-family:'Liberation Sans', sans-serif;font-size:11.6px;line-height:11.6px;font-weight:normal;color:#000;white-space:pre;letter-spacing:-0.45px">0.0073</div><div style="left:1569px;top:301px;width:61px;height:25px;border-right:1px solid #c8c8c8;border-bottom:1px solid #c8c8c8"></div><div style="left:1028px;width:600px;text-align:right;top:307.68px;font-family:'Liberation Sans', sans-serif;font-size:11.6px;line-height:11.6px;font-weight:normal;color:#000;white-space:pre;letter-spacing:-0.45px">0.0058</div><div style="left:1630px;top:301px;width:72px;height:25px;border-right:1px solid #c8c8c8;border-bottom:1px solid #c8c8c8"></div><div style="left:1100px;width:600px;text-align:right;top:307.68px;font-family:'Liberation Sans', sans-serif;font-size:11.6px;line-height:11.6px;font-weight:normal;color:#000;white-space:pre;letter-spacing:-0.45px">0.0016</div><div style="left:1702px;top:301px;width:62px;height:25px;border-right:1px solid #c8c8c8;border-bottom:1px solid #c8c8c8"></div><div style="left:1162px;width:600px;text-align:right;top:307.68px;font-family:'Liberation Sans', sans-serif;font-size:11.6px;line-height:11.6px;font-weight:normal;color:#000;white-space:pre;letter-spacing:-0.45px">0.0022</div><div style="left:10px;top:326px;width:86px;height:25px;background:#f0f0f0;border-right:1px solid #7a7a7a;border-bottom:1.5px solid #6e6e6e"></div><div style="left:-247.5px;width:600px;text-align:center;top:332.34px;font-family:'Liberation Sans', sans-serif;font-size:12px;line-height:12px;font-weight:bold;color:#000;white-space:pre;letter-spacing:-0.2px">delta L</div><div style="left:96px;top:326px;width:1668px;height:25px;background:#e0e0e0"></div><div style="left:96px;top:326px;width:63px;height:25px;border-right:1px solid #c8c8c8;border-bottom:1px solid #c8c8c8"></div><div style="left:-443px;width:600px;text-align:right;top:332.68px;font-family:'Liberation Sans', sans-serif;font-size:11.6px;line-height:11.6px;font-weight:normal;color:#000;white-space:pre;letter-spacing:-0.45px">+inf %</div><div style="left:159px;top:326px;width:60px;height:25px;border-right:1px solid #c8c8c8;border-bottom:1px solid #c8c8c8"></div><div style="left:-383px;width:600px;text-align:right;top:332.68px;font-family:'Liberation Sans', sans-serif;font-size:11.6px;line-height:11.6px;font-weight:normal;color:#000;white-space:pre;letter-spacing:-0.45px">=</div><div style="left:219px;top:326px;width:66px;height:25px;border-right:1px solid #c8c8c8;border-bottom:1px solid #c8c8c8"></div><div style="left:-317px;width:600px;text-align:right;top:332.68px;font-family:'Liberation Sans', sans-serif;font-size:11.6px;line-height:11.6px;font-weight:normal;color:#000;white-space:pre;letter-spacing:-0.45px">-0.2 %</div><div style="left:285px;top:326px;width:63px;height:25px;border-right:1px solid #c8c8c8;border-bottom:1px solid #c8c8c8"></div><div style="left:-254px;width:600px;text-align:right;top:332.68px;font-family:'Liberation Sans', sans-serif;font-size:11.6px;line-height:11.6px;font-weight:normal;color:#000;white-space:pre;letter-spacing:-0.45px">+0.3 %</div><div style="left:348px;top:326px;width:64px;height:25px;border-right:1px solid #c8c8c8;border-bottom:1px solid #c8c8c8"></div><div style="left:-190px;width:600px;text-align:right;top:332.68px;font-family:'Liberation Sans', sans-serif;font-size:11.6px;line-height:11.6px;font-weight:normal;color:#000;white-space:pre;letter-spacing:-0.45px">+0.5 %</div><div style="left:412px;top:326px;width:59px;height:25px;border-right:1px solid #c8c8c8;border-bottom:1px solid #c8c8c8"></div><div style="left:-131px;width:600px;text-align:right;top:332.68px;font-family:'Liberation Sans', sans-serif;font-size:11.6px;line-height:11.6px;font-weight:normal;color:#000;white-space:pre;letter-spacing:-0.45px">+0.2 %</div><div style="left:471px;top:326px;width:72px;height:25px;border-right:1px solid #c8c8c8;border-bottom:1px solid #c8c8c8"></div><div style="left:-59px;width:600px;text-align:right;top:332.68px;font-family:'Liberation Sans', sans-serif;font-size:11.6px;line-height:11.6px;font-weight:normal;color:#000;white-space:pre;letter-spacing:-0.45px">-4.1 %</div><div style="left:543px;top:326px;width:72px;height:25px;border-right:1px solid #c8c8c8;border-bottom:1px solid #c8c8c8"></div><div style="left:13px;width:600px;text-align:right;top:332.68px;font-family:'Liberation Sans', sans-serif;font-size:11.6px;line-height:11.6px;font-weight:normal;color:#000;white-space:pre;letter-spacing:-0.45px">-2.5 %</div><div style="left:615px;top:326px;width:70px;height:25px;border-right:1px solid #c8c8c8;border-bottom:1px solid #c8c8c8"></div><div style="left:83px;width:600px;text-align:right;top:332.68px;font-family:'Liberation Sans', sans-serif;font-size:11.6px;line-height:11.6px;font-weight:normal;color:#000;white-space:pre;letter-spacing:-0.45px">-2.4 %</div><div style="left:685px;top:326px;width:67px;height:25px;border-right:1px solid #c8c8c8;border-bottom:1px solid #c8c8c8"></div><div style="left:150px;width:600px;text-align:right;top:332.68px;font-family:'Liberation Sans', sans-serif;font-size:11.6px;line-height:11.6px;font-weight:normal;color:#000;white-space:pre;letter-spacing:-0.45px">+0.1 %</div><div style="left:752px;top:326px;width:80px;height:25px;border-right:1px solid #c8c8c8;border-bottom:1px solid #c8c8c8"></div><div style="left:230px;width:600px;text-align:right;top:332.68px;font-family:'Liberation Sans', sans-serif;font-size:11.6px;line-height:11.6px;font-weight:normal;color:#000;white-space:pre;letter-spacing:-0.45px">-6.1 %</div><div style="left:832px;top:326px;width:80px;height:25px;border-right:1px solid #c8c8c8;border-bottom:1px solid #c8c8c8"></div><div style="left:310px;width:600px;text-align:right;top:332.68px;font-family:'Liberation Sans', sans-serif;font-size:11.6px;line-height:11.6px;font-weight:normal;color:#000;white-space:pre;letter-spacing:-0.45px">-1.7 %</div><div style="left:912px;top:326px;width:66px;height:25px;border-right:1px solid #c8c8c8;border-bottom:1px solid #c8c8c8"></div><div style="left:376px;width:600px;text-align:right;top:332.68px;font-family:'Liberation Sans', sans-serif;font-size:11.6px;line-height:11.6px;font-weight:normal;color:#000;white-space:pre;letter-spacing:-0.45px">-2.4 %</div><div style="left:978px;top:326px;width:80px;height:25px;border-right:1px solid #c8c8c8;border-bottom:1px solid #c8c8c8"></div><div style="left:456px;width:600px;text-align:right;top:332.68px;font-family:'Liberation Sans', sans-serif;font-size:11.6px;line-height:11.6px;font-weight:normal;color:#000;white-space:pre;letter-spacing:-0.45px">=</div><div style="left:1058px;top:326px;width:89px;height:25px;border-right:1px solid #c8c8c8;border-bottom:1px solid #c8c8c8"></div><div style="left:545px;width:600px;text-align:right;top:332.68px;font-family:'Liberation Sans', sans-serif;font-size:11.6px;line-height:11.6px;font-weight:normal;color:#000;white-space:pre;letter-spacing:-0.45px">-0.2 %</div><div style="left:1147px;top:326px;width:68px;height:25px;border-right:1px solid #c8c8c8;border-bottom:1px solid #c8c8c8"></div><div style="left:613px;width:600px;text-align:right;top:332.68px;font-family:'Liberation Sans', sans-serif;font-size:11.6px;line-height:11.6px;font-weight:normal;color:#000;white-space:pre;letter-spacing:-0.45px">-1.5 %</div><div style="left:1215px;top:326px;width:79px;height:25px;border-right:1px solid #c8c8c8;border-bottom:1px solid #c8c8c8"></div><div style="left:692px;width:600px;text-align:right;top:332.68px;font-family:'Liberation Sans', sans-serif;font-size:11.6px;line-height:11.6px;font-weight:normal;color:#000;white-space:pre;letter-spacing:-0.45px">-0.6 %</div><div style="left:1294px;top:326px;width:90px;height:25px;border-right:1px solid #c8c8c8;border-bottom:1px solid #c8c8c8"></div><div style="left:782px;width:600px;text-align:right;top:332.68px;font-family:'Liberation Sans', sans-serif;font-size:11.6px;line-height:11.6px;font-weight:normal;color:#000;white-space:pre;letter-spacing:-0.45px">-2.8 %</div><div style="left:1384px;top:326px;width:60px;height:25px;border-right:1px solid #c8c8c8;border-bottom:1px solid #c8c8c8"></div><div style="left:842px;width:600px;text-align:right;top:332.68px;font-family:'Liberation Sans', sans-serif;font-size:11.6px;line-height:11.6px;font-weight:normal;color:#000;white-space:pre;letter-spacing:-0.45px">+4.0 %</div><div style="left:1444px;top:326px;width:66px;height:25px;border-right:1px solid #c8c8c8;border-bottom:1px solid #c8c8c8"></div><div style="left:908px;width:600px;text-align:right;top:332.68px;font-family:'Liberation Sans', sans-serif;font-size:11.6px;line-height:11.6px;font-weight:normal;color:#000;white-space:pre;letter-spacing:-0.45px">+0.5 %</div><div style="left:1510px;top:326px;width:59px;height:25px;border-right:1px solid #c8c8c8;border-bottom:1px solid #c8c8c8"></div><div style="left:967px;width:600px;text-align:right;top:332.68px;font-family:'Liberation Sans', sans-serif;font-size:11.6px;line-height:11.6px;font-weight:normal;color:#000;white-space:pre;letter-spacing:-0.45px">-2.4 %</div><div style="left:1569px;top:326px;width:61px;height:25px;border-right:1px solid #c8c8c8;border-bottom:1px solid #c8c8c8"></div><div style="left:1028px;width:600px;text-align:right;top:332.68px;font-family:'Liberation Sans', sans-serif;font-size:11.6px;line-height:11.6px;font-weight:normal;color:#000;white-space:pre;letter-spacing:-0.45px">-2.0 %</div><div style="left:1630px;top:326px;width:72px;height:25px;border-right:1px solid #c8c8c8;border-bottom:1px solid #c8c8c8"></div><div style="left:1100px;width:600px;text-align:right;top:332.68px;font-family:'Liberation Sans', sans-serif;font-size:11.6px;line-height:11.6px;font-weight:normal;color:#000;white-space:pre;letter-spacing:-0.45px">+0.6 %</div><div style="left:1702px;top:326px;width:62px;height:25px;border-right:1px solid #c8c8c8;border-bottom:1px solid #c8c8c8"></div><div style="left:1162px;width:600px;text-align:right;top:332.68px;font-family:'Liberation Sans', sans-serif;font-size:11.6px;line-height:11.6px;font-weight:normal;color:#000;white-space:pre;letter-spacing:-0.45px">-0.2 %</div><div style="left:10px;top:201px;width:1.5px;height:24px;background:#6a6a6a"></div><div style="left:10px;top:351px;width:1754px;height:4px;background:#f0f0f0"></div><div style="left:95px;top:351px;width:1px;height:4px;background:#c8c8c8"></div><div style="left:158px;top:351px;width:1px;height:4px;background:#c8c8c8"></div><div style="left:218px;top:351px;width:1px;height:4px;background:#c8c8c8"></div><div style="left:284px;top:351px;width:1px;height:4px;background:#c8c8c8"></div><div style="left:347px;top:351px;width:1px;height:4px;background:#c8c8c8"></div><div style="left:411px;top:351px;width:1px;height:4px;background:#c8c8c8"></div><div style="left:470px;top:351px;width:1px;height:4px;background:#c8c8c8"></div><div style="left:542px;top:351px;width:1px;height:4px;background:#c8c8c8"></div><div style="left:614px;top:351px;width:1px;height:4px;background:#c8c8c8"></div><div style="left:684px;top:351px;width:1px;height:4px;background:#c8c8c8"></div><div style="left:751px;top:351px;width:1px;height:4px;background:#c8c8c8"></div><div style="left:831px;top:351px;width:1px;height:4px;background:#c8c8c8"></div><div style="left:911px;top:351px;width:1px;height:4px;background:#c8c8c8"></div><div style="left:977px;top:351px;width:1px;height:4px;background:#c8c8c8"></div><div style="left:1057px;top:351px;width:1px;height:4px;background:#c8c8c8"></div><div style="left:1146px;top:351px;width:1px;height:4px;background:#c8c8c8"></div><div style="left:1214px;top:351px;width:1px;height:4px;background:#c8c8c8"></div><div style="left:1293px;top:351px;width:1px;height:4px;background:#c8c8c8"></div><div style="left:1383px;top:351px;width:1px;height:4px;background:#c8c8c8"></div><div style="left:1443px;top:351px;width:1px;height:4px;background:#c8c8c8"></div><div style="left:1509px;top:351px;width:1px;height:4px;background:#c8c8c8"></div><div style="left:1568px;top:351px;width:1px;height:4px;background:#c8c8c8"></div><div style="left:1629px;top:351px;width:1px;height:4px;background:#c8c8c8"></div><div style="left:1701px;top:351px;width:1px;height:4px;background:#c8c8c8"></div><div style="left:1763px;top:351px;width:1px;height:4px;background:#c8c8c8"></div><div style="left:95px;top:351px;width:1px;height:4px;background:#7a7a7a"></div><div style="left:10px;top:355px;width:1778px;height:18px;background:#f0f0f0"></div><svg style="left:15px;top:360px" width="7" height="9" viewBox="0 0 7 9"><path d="M6.5,0.5 L0.5,4.5 L6.5,8.5 Z" fill="#a0a0a0"/></svg><svg style="left:1760px;top:360px" width="7" height="9" viewBox="0 0 7 9"><path d="M0.5,0.5 L6.5,4.5 L0.5,8.5 Z" fill="#a0a0a0"/></svg><div style="left:1764px;top:179px;width:7px;height:176px;background:#a0a0a0"></div><div style="left:1771px;top:179px;width:17px;height:176px;background:#f0f0f0"></div><div style="left:1779px;top:195px;width:2px;height:141px;background:#858585"></div><div style="left:1788px;top:177px;width:1px;height:197px;background:#fff"></div><div style="left:1812px;top:160px;width:88px;height:220px;background:#8a8a8a"></div><div style="left:1812px;top:160px;width:86px;height:103px;background:#f6f6f6"></div><div style="left:1815px;top:162px;width:80px;height:100px;background:#ebebeb;border:2px solid #808080"></div><div style="left:1817px;top:164px;width:76px;height:17px;background:#808080"></div><div style="left:1817px;top:164px;width:76px;height:17px;background:linear-gradient(#e2e9f4,#edf2f9);border-radius:7px 7px 0 0"></div><div style="left:1817px;top:181px;width:76px;height:1px;background:#a8a8a8"></div><div style="left:1822px;top:166.84px;font-family:'Liberation Sans', sans-serif;font-size:12px;line-height:12px;font-weight:bold;color:#3c3c50;white-space:pre;letter-spacing:0.759px;">Display</div><div style="left:1821px;top:182px;width:67px;height:15px;background:#efefef"></div><svg style="left:1821.5px;top:180.5px" width="14" height="14" viewBox="0 0 14 14"><circle cx="7" cy="7" r="6" fill="#f4f4f4" stroke="#c4c4c4" stroke-width="1"/></svg><div style="left:1839.5px;top:181.36px;font-family:'Liberation Sans', sans-serif;font-size:13.4px;line-height:13.4px;font-weight:normal;color:#8a8a8a;white-space:pre;">Sensor</div><div style="left:1821px;top:198px;width:67px;height:15px;background:#efefef"></div><svg style="left:1821.5px;top:196.5px" width="14" height="14" viewBox="0 0 14 14"><circle cx="7" cy="7" r="6" fill="#f6f6f6" stroke="#333" stroke-width="1"/></svg><div style="left:1839.5px;top:197.36px;font-family:'Liberation Sans', sans-serif;font-size:13.4px;line-height:13.4px;font-weight:normal;color:#000;white-space:pre;">RGB</div><div style="left:1821px;top:214px;width:67px;height:15px;background:#efefef"></div><svg style="left:1821.5px;top:212.5px" width="14" height="14" viewBox="0 0 14 14"><circle cx="7" cy="7" r="6" fill="#f6f6f6" stroke="#333" stroke-width="1"/></svg><div style="left:1839.5px;top:213.36px;font-family:'Liberation Sans', sans-serif;font-size:13.4px;line-height:13.4px;font-weight:normal;color:#000;white-space:pre;">XYZ</div><div style="left:1821px;top:230px;width:67px;height:15px;background:#efefef"></div><svg style="left:1821.5px;top:228.5px" width="14" height="14" viewBox="0 0 14 14"><circle cx="7" cy="7" r="6" fill="#f6f6f6" stroke="#333" stroke-width="1"/></svg><div style="left:1839.5px;top:229.36px;font-family:'Liberation Sans', sans-serif;font-size:13.4px;line-height:13.4px;font-weight:normal;color:#000;white-space:pre;">xyz</div><div style="left:1821px;top:246px;width:67px;height:15px;background:#efefef"></div><svg style="left:1821.5px;top:244.5px" width="14" height="14" viewBox="0 0 14 14"><circle cx="7" cy="7" r="6" fill="#fff" stroke="#0060c0" stroke-width="1"/><circle cx="7" cy="7" r="5.2" fill="#0a64c8"/><circle cx="7" cy="7" r="2.6" fill="#fff"/></svg><div style="left:1839.5px;top:245.36px;font-family:'Liberation Sans', sans-serif;font-size:13.4px;line-height:13.4px;font-weight:normal;color:#000;white-space:pre;">xyY</div><div style="left:1812px;top:264px;width:83px;height:30px;background:#ebebeb;border-top:1px solid #fff;border-left:1px solid #fff;border-right:1px solid #a0a0a0;border-bottom:1px solid #a0a0a0"></div><div style="left:1863px;top:273.66px;font-family:'Liberation Sans', sans-serif;font-size:13.4px;line-height:13.4px;font-weight:normal;color:#000;white-space:pre;">Go</div><div style="left:1812px;top:294px;width:83px;height:30px;background:#ebebeb;border-top:1px solid #fff;border-left:1px solid #fff;border-right:1px solid #a0a0a0;border-bottom:1px solid #a0a0a0"></div><div style="left:1851px;top:302.66px;font-family:'Liberation Sans', sans-serif;font-size:13.4px;line-height:13.4px;font-weight:normal;color:#000;white-space:pre;">Delete</div><div style="left:1812px;top:324px;width:83px;height:30px;background:#ebebeb;border-top:1px solid #fff;border-left:1px solid #fff;border-right:1px solid #a0a0a0;border-bottom:1px solid #a0a0a0"></div><div style="left:1858px;top:332.16px;font-family:'Liberation Sans', sans-serif;font-size:13.4px;line-height:13.4px;font-weight:normal;color:#000;white-space:pre;">Refs</div><svg style="left:1817px;top:266px" width="28" height="28" viewBox="0 0 32 33"><path d="M1,1 L10,1 L10,29 L6,24 L1,29 Z" fill="#c4c4c4"/><rect x="1" y="1" width="1.4" height="28" fill="#000"/><path d="M3,9 H7 V11 H3 Z M3,16 H7 V18 H3 Z" fill="#fff"/><path d="M19,7 L24,7 L31,12 L31,32 L20,32 Z" fill="#c4c4c4"/><rect x="30" y="8" width="1.4" height="24" fill="#000"/><path d="M24,14 H28 V16 H24 Z M24,21 H28 V23 H24 Z" fill="#fff"/><rect x="0" y="2.0" width="1.2" height="1.2" fill="#000"/><rect x="0" y="5.2" width="1.2" height="1.2" fill="#000"/><rect x="0" y="8.4" width="1.2" height="1.2" fill="#000"/><rect x="0" y="11.6" width="1.2" height="1.2" fill="#000"/><rect x="0" y="14.8" width="1.2" height="1.2" fill="#000"/><rect x="0" y="18.0" width="1.2" height="1.2" fill="#000"/><rect x="0" y="21.2" width="1.2" height="1.2" fill="#000"/><rect x="0" y="24.4" width="1.2" height="1.2" fill="#000"/><rect x="0" y="27.6" width="1.2" height="1.2" fill="#000"/><rect x="30.8" y="9.0" width="1.2" height="1.2" fill="#000"/><rect x="30.8" y="12.0" width="1.2" height="1.2" fill="#000"/><rect x="30.8" y="15.0" width="1.2" height="1.2" fill="#000"/><rect x="30.8" y="18.0" width="1.2" height="1.2" fill="#000"/><rect x="30.8" y="21.0" width="1.2" height="1.2" fill="#000"/><rect x="30.8" y="24.0" width="1.2" height="1.2" fill="#000"/><rect x="30.8" y="27.0" width="1.2" height="1.2" fill="#000"/><rect x="30.8" y="30.0" width="1.2" height="1.2" fill="#000"/><path d="M2,1 L17,1 Q22,3 22,10 Q22,19 30,23 L21,32 L14,32 Q8,27 9,16 Q9,6 2,1 Z" fill="#ee1020" stroke="#1a1a1a" stroke-width="1"/><path d="M9.5,10 L21.5,8 L22,17 L10,19.5 Z" fill="#10d040" stroke="#1a1a1a" stroke-width="0.8"/><path d="M11,21 L23,18 L28,24 L19,31 Z" fill="#3a8aff" stroke="#1a1a1a" stroke-width="0.8"/></svg><svg style="left:1819px;top:296px" width="24" height="26" viewBox="0 0 24 26"><defs><linearGradient id="bin" x1="0" x2="1"><stop offset="0" stop-color="#a8dcf8"/><stop offset="1" stop-color="#3a90d0"/></linearGradient></defs><path d="M1,3 Q12,0 23,2 L19,23 Q12,26 5,23 Z" fill="url(#bin)" stroke="#5aa0d0" stroke-width="0.8"/><ellipse cx="12" cy="21" rx="7" ry="3" fill="#c8ecff" opacity="0.7"/><path d="M8,11 A5,5 0 0 1 17,10 L18,8 L18,13 L13,13 L15,11 A3,3 0 0 0 10,12 Z" fill="#20a030"/><path d="M17,15 A5,5 0 0 1 8,16 L7,18 L7,13 L12,13 L10,15 A3,3 0 0 0 15,14 Z" fill="#20a030"/></svg><svg style="left:1818px;top:328px" width="32" height="24" viewBox="0 0 32 24"><path d="M0,24 L0,10 L3,8 L5,3 L7,7 L10,6 L12,9 L15,8 L17,3 L19,0 L22,3 L24,11 L27,10 L29,12 L32,12 L32,24 Z" fill="#ffff00"/><rect x="1" y="10" width="2" height="14" fill="#c000c0"/><rect x="3" y="6" width="4" height="18" fill="#0000ff"/><rect x="7" y="9" width="3" height="15" fill="#00ffff"/><rect x="10" y="10" width="3" height="14" fill="#00ff00"/><rect x="13" y="8" width="7" height="16" fill="#ffff00"/><rect x="20" y="4" width="4" height="20" fill="#800000"/><rect x="24" y="12" width="8" height="12" fill="#ff0000"/></svg><div style="left:1818px;top:360px;width:13px;height:13px;background:#f4f4f4;border:1px solid #555;border-radius:2px"></div><div style="left:1835px;top:360.66px;font-family:'Liberation Sans', sans-serif;font-size:13.4px;line-height:13.4px;font-weight:normal;color:#000;white-space:pre;">Edit</div><div style="left:5px;top:386px;width:379px;height:631px;background:#ebebeb;border:2px solid #808080"></div><div style="left:7px;top:388px;width:375px;height:17px;background:#808080"></div><div style="left:7px;top:388px;width:375px;height:17px;background:linear-gradient(#e2e9f4,#edf2f9);border-radius:7px 7px 0 0"></div><div style="left:7px;top:405px;width:375px;height:1px;background:#a8a8a8"></div><div style="left:12px;top:390.84px;font-family:'Liberation Sans', sans-serif;font-size:12px;line-height:12px;font-weight:bold;color:#3c3c50;white-space:pre;letter-spacing:0.783px;">Selected color</div><div style="left:14px;top:409px;width:114px;height:13px;background:#efefef"></div><div style="left:18px;top:410.16px;font-family:'Liberation Sans', sans-serif;font-size:12.8px;line-height:12.8px;font-weight:normal;color:#000;white-space:pre;">RGB Levels</div><div style="left:230px;top:407px;width:128px;height:14px;background:#efefef"></div><div style="left:241px;top:406.85px;font-family:'Liberation Sans', sans-serif;font-size:14px;line-height:14px;font-weight:normal;color:#000;white-space:pre;letter-spacing:0.064px;">Current Measure</div><div style="left:14px;top:433px;width:200px;height:87px;background:#ededed"></div><div style="left:14px;top:477px;width:200px;height:1px;background:repeating-linear-gradient(90deg,#707070 0 3px,transparent 3px 6px)"></div><svg style="left:17px;top:470px" width="47" height="46" viewBox="0 0 47 46"><rect x="1" y="6" width="45" height="40" fill="url(#cylR)"/><ellipse cx="23.5" cy="6.5" rx="22.5" ry="4.5" fill="#a00000" stroke="#200" stroke-width="0.8"/></svg><div style="left:-259.5px;width:600px;text-align:center;top:458.79px;font-family:'Liberation Serif', serif;font-size:11px;line-height:11px;font-weight:bold;color:#101830;white-space:pre;">100.1%</div><svg style="left:67px;top:470px" width="48" height="46" viewBox="0 0 48 46"><rect x="1" y="6" width="46" height="40" fill="url(#cylG)"/><ellipse cx="24.0" cy="6.5" rx="23.0" ry="4.5" fill="#00a000" stroke="#200" stroke-width="0.8"/></svg><div style="left:-209.0px;width:600px;text-align:center;top:458.79px;font-family:'Liberation Serif', serif;font-size:11px;line-height:11px;font-weight:bold;color:#101830;white-space:pre;">100.3%</div><svg style="left:118px;top:470px" width="48" height="46" viewBox="0 0 48 46"><rect x="1" y="6" width="46" height="40" fill="url(#cylB)"/><ellipse cx="24.0" cy="6.5" rx="23.0" ry="4.5" fill="#0000b0" stroke="#200" stroke-width="0.8"/></svg><div style="left:-158.0px;width:600px;text-align:center;top:458.79px;font-family:'Liberation Serif', serif;font-size:11px;line-height:11px;font-weight:bold;color:#101830;white-space:pre;">100.2%</div><svg style="left:170px;top:506px" width="44" height="9" viewBox="0 0 44 9"><path d="M0,9 Q3,1 22,1 Q41,1 44,9 Z" fill="#c08a18"/></svg><div style="left:-108px;width:600px;text-align:center;top:495.37px;font-family:'Liberation Serif', serif;font-size:11.5px;line-height:11.5px;font-weight:bold;color:#101830;white-space:pre;">dE 0.1</div><div style="left:14px;top:514px;width:200px;height:6px;background:#000"></div><div style="left:16px;top:532px;width:192px;height:75px;background:#fff"></div><div style="left:-236px;width:600px;text-align:center;top:534.50px;font-family:'Liberation Sans', sans-serif;font-size:13px;line-height:13px;font-weight:bold;color:#1a2840;white-space:pre;letter-spacing:0.609px;">255,255,255</div><div style="left:-236px;width:600px;text-align:center;top:551.00px;font-family:'Liberation Sans', sans-serif;font-size:13px;line-height:13px;font-weight:bold;color:#1a2840;white-space:pre;letter-spacing:0.607px;">Measure</div><div style="left:-140px;width:600px;text-align:center;top:534.50px;font-family:'Liberation Sans', sans-serif;font-size:13px;line-height:13px;font-weight:bold;color:#1a2840;white-space:pre;letter-spacing:0.609px;">255,255,255</div><div style="left:-140px;width:600px;text-align:center;top:551.00px;font-family:'Liberation Sans', sans-serif;font-size:13px;line-height:13px;font-weight:bold;color:#1a2840;white-space:pre;letter-spacing:0.236px;">Reference</div><div style="left:14px;top:621px;width:53px;height:14px;background:#efefef"></div><div style="left:18px;top:622.50px;font-family:'Liberation Sans', sans-serif;font-size:13px;line-height:13px;font-weight:normal;color:#000;white-space:pre;">Target</div><div style="left:50px;top:638px;width:117px;height:89px;background:#000"></div><div style="left:51px;top:639px;width:115px;height:87px;overflow:hidden"><div style="left:0;top:0;width:115px;height:115px;transform-origin:0 0;transform:scale(1,0.75652);background:conic-gradient(from 0deg at 50% 50%, #40ff00 0deg, #a0e000 25deg, #ffc000 45deg, #ff6000 65deg, #ff0000 90deg, #ff0050 115deg, #ff0090 135deg, #b000b0 160deg, #7000c8 185deg, #1800f0 210deg, #0000ff 225deg, #0040d0 245deg, #0090b0 270deg, #00b090 295deg, #00ff80 315deg, #10ff40 340deg, #40ff00 360deg)"></div></div><div style="left:67px;top:651px;width:83px;height:63px;background:#fff;border-radius:9px"></div><svg style="left:50px;top:638px" width="117" height="89" viewBox="0 0 117 89"><g fill="none" stroke="#000" stroke-width="1" stroke-dasharray="3,2.5"><line x1="58.7" y1="13" x2="58.7" y2="76"/><line x1="15" y1="44.3" x2="102" y2="44.3"/><ellipse cx="58.7" cy="44.3" rx="21" ry="15"/></g><path d="M62,41.5 L88,22.5" stroke="#ffd000" stroke-width="2.2"/><path d="M62,41.5 L88,22.5" stroke="#800000" stroke-width="0.7"/><path d="M58.7,44.3 L60.5,37 L66,40.5 Z" fill="#ffff00"/><path d="M58.7,44.3 L63,40.5 L68.5,41.5 Z" fill="#700000"/><path d="M76,24 L81,19.5 L85,23.5 L80,27.5 Z" fill="#00e000"/><path d="M80.5,28 L86,23.5 L86,27 L80.5,31 Z" fill="#0000ff"/><path d="M86.5,22.5 L92,20.5 L86.5,25.5 Z" fill="#ff0000"/></svg><div style="left:221px;top:431px;width:153px;height:578px;background:#f0f0f0;border-top:2px solid #707070;border-left:2px solid #707070"></div><div style="left:355px;top:433px;width:18px;height:575px;background:#f0f0f0;border-left:1px solid #fff"></div><svg style="left:359px;top:437px" width="11" height="7" viewBox="0 0 11 7"><path d="M0.5,6.5 L5.5,0.5 L10.5,6.5 Z" fill="#a0a0a0"/></svg><svg style="left:359px;top:994px" width="11" height="7" viewBox="0 0 11 7"><path d="M0.5,0.5 L5.5,6.5 L10.5,0.5 Z" fill="#a0a0a0"/></svg><div style="left:223px;top:433px;width:52px;height:23px;background:#f0f0f0;border-right:2px solid #6a6a6a;border-bottom:2px solid #6a6a6a"></div><div style="left:275px;top:433px;width:80px;height:23px;background:#ffffff;border-bottom:1px solid #c4c4c4"></div><div style="left:-51.5px;width:600px;text-align:center;top:436.64px;font-family:'Liberation Sans', sans-serif;font-size:12px;line-height:12px;font-weight:bold;color:#000;white-space:pre;letter-spacing:-0.2px">Y cd/m<sup style='font-size:8px;vertical-align:5px;line-height:0'>2</sup></div><div style="left:-247.5px;width:600px;text-align:right;top:436.98px;font-family:'Liberation Sans', sans-serif;font-size:11.6px;line-height:11.6px;font-weight:normal;color:#000;white-space:pre;letter-spacing:-0.45px">120.503</div><div style="left:223px;top:456px;width:52px;height:23px;background:#f0f0f0;border-right:2px solid #6a6a6a;border-bottom:2px solid #6a6a6a"></div><div style="left:275px;top:456px;width:80px;height:23px;background:#ffffff;border-bottom:1px solid #c4c4c4"></div><div style="left:-51.5px;width:600px;text-align:center;top:459.64px;font-family:'Liberation Sans', sans-serif;font-size:12px;line-height:12px;font-weight:bold;color:#000;white-space:pre;letter-spacing:-0.2px">Y ftL</div><div style="left:-247.5px;width:600px;text-align:right;top:459.98px;font-family:'Liberation Sans', sans-serif;font-size:11.6px;line-height:11.6px;font-weight:normal;color:#000;white-space:pre;letter-spacing:-0.45px">35.1730</div><div style="left:223px;top:479px;width:52px;height:23px;background:#f0f0f0;border-right:2px solid #6a6a6a;border-bottom:2px solid #6a6a6a"></div><div style="left:275px;top:479px;width:80px;height:23px;background:#ffffff;border-bottom:1px solid #c4c4c4"></div><div style="left:-51.5px;width:600px;text-align:center;top:482.64px;font-family:'Liberation Sans', sans-serif;font-size:12px;line-height:12px;font-weight:bold;color:#000;white-space:pre;letter-spacing:-0.2px">T°</div><div style="left:-247.5px;width:600px;text-align:right;top:482.98px;font-family:'Liberation Sans', sans-serif;font-size:11.6px;line-height:11.6px;font-weight:normal;color:#000;white-space:pre;letter-spacing:-0.45px">6505</div><div style="left:223px;top:502px;width:52px;height:23px;background:#f0f0f0;border-right:2px solid #6a6a6a;border-bottom:2px solid #6a6a6a"></div><div style="left:275px;top:502px;width:80px;height:23px;background:#dedede;border-bottom:1px solid #c4c4c4"></div><div style="left:-51.5px;width:600px;text-align:center;top:505.64px;font-family:'Liberation Sans', sans-serif;font-size:12px;line-height:12px;font-weight:bold;color:#000;white-space:pre;letter-spacing:-0.2px">X</div><div style="left:-247.5px;width:600px;text-align:right;top:505.98px;font-family:'Liberation Sans', sans-serif;font-size:11.6px;line-height:11.6px;font-weight:normal;color:#000;white-space:pre;letter-spacing:-0.45px">114.48</div><div style="left:223px;top:525px;width:52px;height:23px;background:#f0f0f0;border-right:2px solid #6a6a6a;border-bottom:2px solid #6a6a6a"></div><div style="left:275px;top:525px;width:80px;height:23px;background:#dedede;border-bottom:1px solid #c4c4c4"></div><div style="left:-51.5px;width:600px;text-align:center;top:528.64px;font-family:'Liberation Sans', sans-serif;font-size:12px;line-height:12px;font-weight:bold;color:#000;white-space:pre;letter-spacing:-0.2px">Y</div><div style="left:-247.5px;width:600px;text-align:right;top:528.98px;font-family:'Liberation Sans', sans-serif;font-size:11.6px;line-height:11.6px;font-weight:normal;color:#000;white-space:pre;letter-spacing:-0.45px">120.50</div><div style="left:223px;top:548px;width:52px;height:23px;background:#f0f0f0;border-right:2px solid #6a6a6a;border-bottom:2px solid #6a6a6a"></div><div style="left:275px;top:548px;width:80px;height:23px;background:#dedede;border-bottom:1px solid #c4c4c4"></div><div style="left:-51.5px;width:600px;text-align:center;top:551.64px;font-family:'Liberation Sans', sans-serif;font-size:12px;line-height:12px;font-weight:bold;color:#000;white-space:pre;letter-spacing:-0.2px">Z</div><div style="left:-247.5px;width:600px;text-align:right;top:551.98px;font-family:'Liberation Sans', sans-serif;font-size:11.6px;line-height:11.6px;font-weight:normal;color:#000;white-space:pre;letter-spacing:-0.45px">131.17</div><div style="left:223px;top:571px;width:52px;height:23px;background:#f0f0f0;border-right:2px solid #6a6a6a;border-bottom:2px solid #6a6a6a"></div><div style="left:275px;top:571px;width:80px;height:23px;background:#ffffff;border-bottom:1px solid #c4c4c4"></div><div style="left:-51.5px;width:600px;text-align:center;top:574.64px;font-family:'Liberation Sans', sans-serif;font-size:12px;line-height:12px;font-weight:bold;color:#000;white-space:pre;letter-spacing:-0.2px">R</div><div style="left:-247.5px;width:600px;text-align:right;top:574.98px;font-family:'Liberation Sans', sans-serif;font-size:11.6px;line-height:11.6px;font-weight:normal;color:#000;white-space:pre;letter-spacing:-0.45px">120.36</div><div style="left:223px;top:594px;width:52px;height:23px;background:#f0f0f0;border-right:2px solid #6a6a6a;border-bottom:2px solid #6a6a6a"></div><div style="left:275px;top:594px;width:80px;height:23px;background:#ffffff;border-bottom:1px solid #c4c4c4"></div><div style="left:-51.5px;width:600px;text-align:center;top:597.64px;font-family:'Liberation Sans', sans-serif;font-size:12px;line-height:12px;font-weight:bold;color:#000;white-space:pre;letter-spacing:-0.2px">G</div><div style="left:-247.5px;width:600px;text-align:right;top:597.98px;font-family:'Liberation Sans', sans-serif;font-size:11.6px;line-height:11.6px;font-weight:normal;color:#000;white-space:pre;letter-spacing:-0.45px">120.55</div><div style="left:223px;top:617px;width:52px;height:23px;background:#f0f0f0;border-right:2px solid #6a6a6a;border-bottom:2px solid #6a6a6a"></div><div style="left:275px;top:617px;width:80px;height:23px;background:#ffffff;border-bottom:1px solid #c4c4c4"></div><div style="left:-51.5px;width:600px;text-align:center;top:620.64px;font-family:'Liberation Sans', sans-serif;font-size:12px;line-height:12px;font-weight:bold;color:#000;white-space:pre;letter-spacing:-0.2px">B</div><div style="left:-247.5px;width:600px;text-align:right;top:620.98px;font-family:'Liberation Sans', sans-serif;font-size:11.6px;line-height:11.6px;font-weight:normal;color:#000;white-space:pre;letter-spacing:-0.45px">120.44</div><div style="left:223px;top:640px;width:52px;height:23px;background:#f0f0f0;border-right:2px solid #6a6a6a;border-bottom:2px solid #6a6a6a"></div><div style="left:275px;top:640px;width:80px;height:23px;background:#dedede;border-bottom:1px solid #c4c4c4"></div><div style="left:-51.5px;width:600px;text-align:center;top:643.64px;font-family:'Liberation Sans', sans-serif;font-size:12px;line-height:12px;font-weight:bold;color:#000;white-space:pre;letter-spacing:-0.2px">x</div><div style="left:-247.5px;width:600px;text-align:right;top:643.98px;font-family:'Liberation Sans', sans-serif;font-size:11.6px;line-height:11.6px;font-weight:normal;color:#000;white-space:pre;letter-spacing:-0.45px">0.313</div><div style="left:223px;top:663px;width:52px;height:23px;background:#f0f0f0;border-right:2px solid #6a6a6a;border-bottom:2px solid #6a6a6a"></div><div style="left:275px;top:663px;width:80px;height:23px;background:#dedede;border-bottom:1px solid #c4c4c4"></div><div style="left:-51.5px;width:600px;text-align:center;top:666.64px;font-family:'Liberation Sans', sans-serif;font-size:12px;line-height:12px;font-weight:bold;color:#000;white-space:pre;letter-spacing:-0.2px">y</div><div style="left:-247.5px;width:600px;text-align:right;top:666.98px;font-family:'Liberation Sans', sans-serif;font-size:11.6px;line-height:11.6px;font-weight:normal;color:#000;white-space:pre;letter-spacing:-0.45px">0.329</div><div style="left:223px;top:686px;width:52px;height:23px;background:#f0f0f0;border-right:2px solid #6a6a6a;border-bottom:2px solid #6a6a6a"></div><div style="left:275px;top:686px;width:80px;height:23px;background:#dedede;border-bottom:1px solid #c4c4c4"></div><div style="left:-51.5px;width:600px;text-align:center;top:689.64px;font-family:'Liberation Sans', sans-serif;font-size:12px;line-height:12px;font-weight:bold;color:#000;white-space:pre;letter-spacing:-0.2px">Y</div><div style="left:-247.5px;width:600px;text-align:right;top:689.98px;font-family:'Liberation Sans', sans-serif;font-size:11.6px;line-height:11.6px;font-weight:normal;color:#000;white-space:pre;letter-spacing:-0.45px">120.503</div><div style="left:223px;top:709px;width:52px;height:23px;background:#f0f0f0;border-right:2px solid #6a6a6a;border-bottom:2px solid #6a6a6a"></div><div style="left:275px;top:709px;width:80px;height:23px;background:#ffffff;border-bottom:1px solid #c4c4c4"></div><div style="left:-51.5px;width:600px;text-align:center;top:712.64px;font-family:'Liberation Sans', sans-serif;font-size:12px;line-height:12px;font-weight:bold;color:#000;white-space:pre;letter-spacing:-0.2px">x</div><div style="left:-247.5px;width:600px;text-align:right;top:712.98px;font-family:'Liberation Sans', sans-serif;font-size:11.6px;line-height:11.6px;font-weight:normal;color:#000;white-space:pre;letter-spacing:-0.45px">0.313</div><div style="left:223px;top:732px;width:52px;height:23px;background:#f0f0f0;border-right:2px solid #6a6a6a;border-bottom:2px solid #6a6a6a"></div><div style="left:275px;top:732px;width:80px;height:23px;background:#ffffff;border-bottom:1px solid #c4c4c4"></div><div style="left:-51.5px;width:600px;text-align:center;top:735.64px;font-family:'Liberation Sans', sans-serif;font-size:12px;line-height:12px;font-weight:bold;color:#000;white-space:pre;letter-spacing:-0.2px">y</div><div style="left:-247.5px;width:600px;text-align:right;top:735.98px;font-family:'Liberation Sans', sans-serif;font-size:11.6px;line-height:11.6px;font-weight:normal;color:#000;white-space:pre;letter-spacing:-0.45px">0.329</div><div style="left:223px;top:755px;width:52px;height:23px;background:#f0f0f0;border-right:2px solid #6a6a6a;border-bottom:2px solid #6a6a6a"></div><div style="left:275px;top:755px;width:80px;height:23px;background:#ffffff;border-bottom:1px solid #c4c4c4"></div><div style="left:-51.5px;width:600px;text-align:center;top:758.64px;font-family:'Liberation Sans', sans-serif;font-size:12px;line-height:12px;font-weight:bold;color:#000;white-space:pre;letter-spacing:-0.2px">z</div><div style="left:-247.5px;width:600px;text-align:right;top:758.98px;font-family:'Liberation Sans', sans-serif;font-size:11.6px;line-height:11.6px;font-weight:normal;color:#000;white-space:pre;letter-spacing:-0.45px">0.358</div><div style="left:223px;top:778px;width:52px;height:23px;background:#f0f0f0;border-right:2px solid #6a6a6a;border-bottom:2px solid #6a6a6a"></div><div style="left:275px;top:778px;width:80px;height:23px;background:#dedede;border-bottom:1px solid #c4c4c4"></div><div style="left:-51.5px;width:600px;text-align:center;top:781.64px;font-family:'Liberation Sans', sans-serif;font-size:12px;line-height:12px;font-weight:bold;color:#000;white-space:pre;letter-spacing:-0.2px">L</div><div style="left:-247.5px;width:600px;text-align:right;top:781.98px;font-family:'Liberation Sans', sans-serif;font-size:11.6px;line-height:11.6px;font-weight:normal;color:#000;white-space:pre;letter-spacing:-0.45px">100.09</div><div style="left:223px;top:801px;width:52px;height:23px;background:#f0f0f0;border-right:2px solid #6a6a6a;border-bottom:2px solid #6a6a6a"></div><div style="left:275px;top:801px;width:80px;height:23px;background:#dedede;border-bottom:1px solid #c4c4c4"></div><div style="left:-51.5px;width:600px;text-align:center;top:804.64px;font-family:'Liberation Sans', sans-serif;font-size:12px;line-height:12px;font-weight:bold;color:#000;white-space:pre;letter-spacing:-0.2px">a</div><div style="left:-247.5px;width:600px;text-align:right;top:804.98px;font-family:'Liberation Sans', sans-serif;font-size:11.6px;line-height:11.6px;font-weight:normal;color:#000;white-space:pre;letter-spacing:-0.45px">-0.08</div><div style="left:223px;top:824px;width:52px;height:23px;background:#f0f0f0;border-right:2px solid #6a6a6a;border-bottom:2px solid #6a6a6a"></div><div style="left:275px;top:824px;width:80px;height:23px;background:#dedede;border-bottom:1px solid #c4c4c4"></div><div style="left:-51.5px;width:600px;text-align:center;top:827.64px;font-family:'Liberation Sans', sans-serif;font-size:12px;line-height:12px;font-weight:bold;color:#000;white-space:pre;letter-spacing:-0.2px">b</div><div style="left:-247.5px;width:600px;text-align:right;top:827.98px;font-family:'Liberation Sans', sans-serif;font-size:11.6px;line-height:11.6px;font-weight:normal;color:#000;white-space:pre;letter-spacing:-0.45px">0.03</div><div style="left:223px;top:847px;width:52px;height:23px;background:#f0f0f0;border-right:2px solid #6a6a6a;border-bottom:2px solid #6a6a6a"></div><div style="left:275px;top:847px;width:80px;height:23px;background:#ffffff;border-bottom:1px solid #c4c4c4"></div><div style="left:-51.5px;width:600px;text-align:center;top:850.64px;font-family:'Liberation Sans', sans-serif;font-size:12px;line-height:12px;font-weight:bold;color:#000;white-space:pre;letter-spacing:-0.2px">L</div><div style="left:-247.5px;width:600px;text-align:right;top:850.98px;font-family:'Liberation Sans', sans-serif;font-size:11.6px;line-height:11.6px;font-weight:normal;color:#000;white-space:pre;letter-spacing:-0.45px">100.09</div><div style="left:223px;top:870px;width:52px;height:23px;background:#f0f0f0;border-right:2px solid #6a6a6a;border-bottom:2px solid #6a6a6a"></div><div style="left:275px;top:870px;width:80px;height:23px;background:#ffffff;border-bottom:1px solid #c4c4c4"></div><div style="left:-51.5px;width:600px;text-align:center;top:873.64px;font-family:'Liberation Sans', sans-serif;font-size:12px;line-height:12px;font-weight:bold;color:#000;white-space:pre;letter-spacing:-0.2px">C</div><div style="left:-247.5px;width:600px;text-align:right;top:873.98px;font-family:'Liberation Sans', sans-serif;font-size:11.6px;line-height:11.6px;font-weight:normal;color:#000;white-space:pre;letter-spacing:-0.45px">0.08</div><div style="left:223px;top:893px;width:52px;height:23px;background:#f0f0f0;border-right:2px solid #6a6a6a;border-bottom:2px solid #6a6a6a"></div><div style="left:275px;top:893px;width:80px;height:23px;background:#ffffff;border-bottom:1px solid #c4c4c4"></div><div style="left:-51.5px;width:600px;text-align:center;top:896.64px;font-family:'Liberation Sans', sans-serif;font-size:12px;line-height:12px;font-weight:bold;color:#000;white-space:pre;letter-spacing:-0.2px">H</div><div style="left:-247.5px;width:600px;text-align:right;top:896.98px;font-family:'Liberation Sans', sans-serif;font-size:11.6px;line-height:11.6px;font-weight:normal;color:#000;white-space:pre;letter-spacing:-0.45px">160.09</div><div style="left:223px;top:916px;width:52px;height:23px;background:#f0f0f0;border-right:2px solid #6a6a6a;border-bottom:2px solid #6a6a6a"></div><div style="left:275px;top:916px;width:80px;height:23px;background:#dedede;border-bottom:1px solid #c4c4c4"></div><div style="left:-51.5px;width:600px;text-align:center;top:919.64px;font-family:'Liberation Sans', sans-serif;font-size:12px;line-height:12px;font-weight:bold;color:#000;white-space:pre;letter-spacing:-0.2px">L</div><div style="left:-247.5px;width:600px;text-align:right;top:919.98px;font-family:'Liberation Sans', sans-serif;font-size:11.6px;line-height:11.6px;font-weight:normal;color:#000;white-space:pre;letter-spacing:-0.45px">120.48</div><div style="left:223px;top:939px;width:52px;height:23px;background:#f0f0f0;border-right:2px solid #6a6a6a;border-bottom:2px solid #6a6a6a"></div><div style="left:275px;top:939px;width:80px;height:23px;background:#dedede;border-bottom:1px solid #c4c4c4"></div><div style="left:-51.5px;width:600px;text-align:center;top:942.64px;font-family:'Liberation Sans', sans-serif;font-size:12px;line-height:12px;font-weight:bold;color:#000;white-space:pre;letter-spacing:-0.2px">M</div><div style="left:-247.5px;width:600px;text-align:right;top:942.98px;font-family:'Liberation Sans', sans-serif;font-size:11.6px;line-height:11.6px;font-weight:normal;color:#000;white-space:pre;letter-spacing:-0.45px">179.28</div><div style="left:223px;top:962px;width:52px;height:23px;background:#f0f0f0;border-right:2px solid #6a6a6a;border-bottom:2px solid #6a6a6a"></div><div style="left:275px;top:962px;width:80px;height:23px;background:#dedede;border-bottom:1px solid #c4c4c4"></div><div style="left:-51.5px;width:600px;text-align:center;top:965.64px;font-family:'Liberation Sans', sans-serif;font-size:12px;line-height:12px;font-weight:bold;color:#000;white-space:pre;letter-spacing:-0.2px">S</div><div style="left:-247.5px;width:600px;text-align:right;top:965.98px;font-family:'Liberation Sans', sans-serif;font-size:11.6px;line-height:11.6px;font-weight:normal;color:#000;white-space:pre;letter-spacing:-0.45px">120.44</div><div style="left:223px;top:985px;width:132px;height:22px;background:#a0a0a0"></div><div style="left:391px;top:386px;width:1505px;height:631px;background:#ebebeb;border:2px solid #808080"></div><div style="left:393px;top:388px;width:1501px;height:17px;background:#808080"></div><div style="left:393px;top:388px;width:1501px;height:17px;background:linear-gradient(#e2e9f4,#edf2f9);border-radius:7px 7px 0 0"></div><div style="left:393px;top:405px;width:1501px;height:1px;background:#a8a8a8"></div><div style="left:398px;top:390.84px;font-family:'Liberation Sans', sans-serif;font-size:12px;line-height:12px;font-weight:bold;color:#3c3c50;white-space:pre;letter-spacing:0.727px;">Information</div><div style="left:398px;top:411px;width:303px;height:23px;background:#fff;border:1px solid #b4b4b4"></div><div style="left:403.5px;top:416.54px;font-family:'Liberation Sans', sans-serif;font-size:13.3px;line-height:13.3px;font-weight:normal;color:#000;white-space:pre;">Target - RGB - Gamma</div><svg style="left:686px;top:421px" width="11" height="7" viewBox="0 0 11 7"><path d="M1,1 L5.5,5.5 L10,1" fill="none" stroke="#444" stroke-width="1.1"/></svg><div style="left:397px;top:439px;width:499px;height:570px;background:#000"></div><div style="left:398px;top:440px;width:497px;height:568px;overflow:hidden"><div style="left:0;top:0;width:497px;height:497px;transform-origin:0 0;transform:scale(1,1.14286);background:conic-gradient(from 0deg at 50% 50%, #40ff00 0deg, #a0e000 25deg, #ffc000 45deg, #ff6000 65deg, #ff0000 90deg, #ff0050 115deg, #ff0090 135deg, #b000b0 160deg, #7000c8 185deg, #1800f0 210deg, #0000ff 225deg, #0040d0 245deg, #0090b0 270deg, #00b090 295deg, #00ff80 315deg, #10ff40 340deg, #40ff00 360deg)"></div></div><div style="left:472px;top:524px;width:350px;height:400px;background:#fff;border-radius:11px"></div><svg style="left:397px;top:439px" width="499" height="570" viewBox="0 0 499 570"><g fill="none" stroke="#000" stroke-width="1" stroke-dasharray="3,3"><line x1="250.5" y1="57" x2="250.5" y2="513"/><line x1="55" y1="285" x2="447" y2="285"/><ellipse cx="250.5" cy="285" rx="98" ry="114"/></g><path d="M274.5,258.5 L369.5,148.5" stroke="#ffff00" stroke-width="6"/><path d="M273,257 L368,147" stroke="#700000" stroke-width="2"/><path d="M250.1,285.6 L263.5,239.3 L290.2,271.6 Z" fill="#ffff00"/><path d="M265,244 L274,258 L289,270 L272,262 Z" fill="#c0c0c0"/><path d="M250.1,285.6 L271.7,262.7 L290.2,271.6 Z" fill="#700000"/><path d="M250.1,285.6 L271.7,262.7 L290.2,271.6" fill="none" stroke="#ffff00" stroke-width="1"/><path d="M328.8,158.8 L353.2,129.7 L369,146.2 L344.6,173.8 Z" fill="#00ff00" stroke="#ffff00" stroke-width="1"/><path d="M347,180 L370.6,154 L370.6,176.9 L347,206 Z" fill="#0000ff" stroke="#ffff00" stroke-width="1"/><path d="M371.3,149.3 L391.8,139.9 L372.1,161.2 Z" fill="#ff0000" stroke="#ffff00" stroke-width="0.6"/></svg><div style="left:896px;top:439px;width:497px;height:570px;background:#ebebeb;border-top:2px solid #8a8a8a;border-left:2px solid #8a8a8a;border-right:1px solid #fff;border-bottom:1px solid #fff"></div><div style="left:898px;top:441px;width:494px;height:567px;border-top:1px solid #c8c8c8;border-left:1px solid #c8c8c8;border-right:1px solid #fff;border-bottom:1px solid #fff"></div><div style="left:900px;top:442px;width:490px;height:563px;background:linear-gradient(90deg,#212121 0%,#2c2c2c 4%,#fafafa 100%);border-left:1px solid #0e3e3c;border-top:1px solid #0e3e3c"></div><div style="left:1394px;top:439px;width:497px;height:570px;background:#ebebeb;border-top:2px solid #8a8a8a;border-left:2px solid #8a8a8a;border-right:1px solid #fff;border-bottom:1px solid #fff"></div><div style="left:1396px;top:441px;width:494px;height:567px;border-top:1px solid #c8c8c8;border-left:1px solid #c8c8c8;border-right:1px solid #fff;border-bottom:1px solid #fff"></div><div style="left:1398px;top:442px;width:490px;height:563px;background:linear-gradient(90deg,#212121 0%,#2c2c2c 4%,#fafafa 100%);border-left:1px solid #0e3e3c;border-top:1px solid #0e3e3c"></div><div style="left:903px;top:455.49px;font-family:'Liberation Serif', serif;font-size:13.5px;line-height:13.5px;font-weight:normal;color:#f0f0f0;white-space:pre;">140%</div><div style="left:903px;top:483.55px;font-family:'Liberation Serif', serif;font-size:13.5px;line-height:13.5px;font-weight:normal;color:#f0f0f0;white-space:pre;">130%</div><div style="left:903px;top:511.61px;font-family:'Liberation Serif', serif;font-size:13.5px;line-height:13.5px;font-weight:normal;color:#f0f0f0;white-space:pre;">120%</div><div style="left:903px;top:539.67px;font-family:'Liberation Serif', serif;font-size:13.5px;line-height:13.5px;font-weight:normal;color:#f0f0f0;white-space:pre;">110%</div><div style="left:903px;top:567.73px;font-family:'Liberation Serif', serif;font-size:13.5px;line-height:13.5px;font-weight:normal;color:#f0f0f0;white-space:pre;">100%</div><div style="left:903px;top:595.79px;font-family:'Liberation Serif', serif;font-size:13.5px;line-height:13.5px;font-weight:normal;color:#f0f0f0;white-space:pre;">90%</div><div style="left:903px;top:623.85px;font-family:'Liberation Serif', serif;font-size:13.5px;line-height:13.5px;font-weight:normal;color:#f0f0f0;white-space:pre;">80%</div><div style="left:903px;top:651.91px;font-family:'Liberation Serif', serif;font-size:13.5px;line-height:13.5px;font-weight:normal;color:#f0f0f0;white-space:pre;">70%</div><div style="left:903px;top:679.97px;font-family:'Liberation Serif', serif;font-size:13.5px;line-height:13.5px;font-weight:normal;color:#f0f0f0;white-space:pre;">60%</div><div style="left:903px;top:763.95px;font-family:'Liberation Serif', serif;font-size:13.5px;line-height:13.5px;font-weight:normal;color:#f0f0f0;white-space:pre;">8</div><div style="left:903px;top:820.07px;font-family:'Liberation Serif', serif;font-size:13.5px;line-height:13.5px;font-weight:normal;color:#f0f0f0;white-space:pre;">6</div><div style="left:903px;top:876.19px;font-family:'Liberation Serif', serif;font-size:13.5px;line-height:13.5px;font-weight:normal;color:#f0f0f0;white-space:pre;">4</div><div style="left:903px;top:932.31px;font-family:'Liberation Serif', serif;font-size:13.5px;line-height:13.5px;font-weight:normal;color:#f0f0f0;white-space:pre;">2</div><div style="left:1401px;top:455.49px;font-family:'Liberation Serif', serif;font-size:13.5px;line-height:13.5px;font-weight:normal;color:#f0f0f0;white-space:pre;">2.9</div><div style="left:1401px;top:483.55px;font-family:'Liberation Serif', serif;font-size:13.5px;line-height:13.5px;font-weight:normal;color:#f0f0f0;white-space:pre;">2.8</div><div style="left:1401px;top:511.61px;font-family:'Liberation Serif', serif;font-size:13.5px;line-height:13.5px;font-weight:normal;color:#f0f0f0;white-space:pre;">2.7</div><div style="left:1401px;top:539.67px;font-family:'Liberation Serif', serif;font-size:13.5px;line-height:13.5px;font-weight:normal;color:#f0f0f0;white-space:pre;">2.6</div><div style="left:1401px;top:567.73px;font-family:'Liberation Serif', serif;font-size:13.5px;line-height:13.5px;font-weight:normal;color:#f0f0f0;white-space:pre;">2.5</div><div style="left:1401px;top:595.79px;font-family:'Liberation Serif', serif;font-size:13.5px;line-height:13.5px;font-weight:normal;color:#f0f0f0;white-space:pre;">2.4</div><div style="left:1401px;top:623.85px;font-family:'Liberation Serif', serif;font-size:13.5px;line-height:13.5px;font-weight:normal;color:#f0f0f0;white-space:pre;">2.3</div><div style="left:1401px;top:651.91px;font-family:'Liberation Serif', serif;font-size:13.5px;line-height:13.5px;font-weight:normal;color:#f0f0f0;white-space:pre;">2.2</div><div style="left:1401px;top:679.97px;font-family:'Liberation Serif', serif;font-size:13.5px;line-height:13.5px;font-weight:normal;color:#f0f0f0;white-space:pre;">2.1</div><div style="left:1401px;top:708.03px;font-family:'Liberation Serif', serif;font-size:13.5px;line-height:13.5px;font-weight:normal;color:#f0f0f0;white-space:pre;">2</div><div style="left:1401px;top:736.09px;font-family:'Liberation Serif', serif;font-size:13.5px;line-height:13.5px;font-weight:normal;color:#f0f0f0;white-space:pre;">1.9</div><div style="left:1401px;top:764.15px;font-family:'Liberation Serif', serif;font-size:13.5px;line-height:13.5px;font-weight:normal;color:#f0f0f0;white-space:pre;">1.8</div><div style="left:1401px;top:792.21px;font-family:'Liberation Serif', serif;font-size:13.5px;line-height:13.5px;font-weight:normal;color:#f0f0f0;white-space:pre;">1.7</div><div style="left:1401px;top:820.27px;font-family:'Liberation Serif', serif;font-size:13.5px;line-height:13.5px;font-weight:normal;color:#f0f0f0;white-space:pre;">1.6</div><div style="left:1401px;top:848.33px;font-family:'Liberation Serif', serif;font-size:13.5px;line-height:13.5px;font-weight:normal;color:#f0f0f0;white-space:pre;">1.5</div><div style="left:1401px;top:876.39px;font-family:'Liberation Serif', serif;font-size:13.5px;line-height:13.5px;font-weight:normal;color:#f0f0f0;white-space:pre;">1.4</div><div style="left:1401px;top:904.45px;font-family:'Liberation Serif', serif;font-size:13.5px;line-height:13.5px;font-weight:normal;color:#f0f0f0;white-space:pre;">1.3</div><div style="left:1401px;top:932.51px;font-family:'Liberation Serif', serif;font-size:13.5px;line-height:13.5px;font-weight:normal;color:#f0f0f0;white-space:pre;">1.2</div><div style="left:1401px;top:960.57px;font-family:'Liberation Serif', serif;font-size:13.5px;line-height:13.5px;font-weight:normal;color:#f0f0f0;white-space:pre;">1.1</div><svg style="left:901px;top:443px" width="489" height="562" viewBox="0 0 489 562"><text x="50.9" y="276.8" font-family="Liberation Serif" font-size="13.5" fill="#f4f4f4">10% White</text><text x="50.9" y="557.0" font-family="Liberation Serif" font-size="13.5" fill="#f4f4f4">10% White</text><text x="148.7" y="276.8" font-family="Liberation Serif" font-size="13.5" fill="#a4a4a4">30% White</text><text x="148.7" y="557.0" font-family="Liberation Serif" font-size="13.5" fill="#a4a4a4">30% White</text><text x="246.5" y="276.8" font-family="Liberation Serif" font-size="13.5" fill="#a8a8a8">50% White</text><text x="246.5" y="557.0" font-family="Liberation Serif" font-size="13.5" fill="#a8a8a8">50% White</text><text x="344.3" y="276.8" font-family="Liberation Serif" font-size="13.5" fill="#3a3a3a">70% White</text><text x="344.3" y="557.0" font-family="Liberation Serif" font-size="13.5" fill="#3a3a3a">70% White</text><text x="442.1" y="276.8" font-family="Liberation Serif" font-size="13.5" fill="#101010">90% White</text><text x="442.1" y="557.0" font-family="Liberation Serif" font-size="13.5" fill="#101010">90% White</text></svg><svg style="left:1399px;top:443px" width="489" height="562" viewBox="0 0 489 562"><text x="50.9" y="557.0" font-family="Liberation Serif" font-size="13.5" fill="#f4f4f4">10% White</text><text x="148.7" y="557.0" font-family="Liberation Serif" font-size="13.5" fill="#a4a4a4">30% White</text><text x="246.5" y="557.0" font-family="Liberation Serif" font-size="13.5" fill="#a8a8a8">50% White</text><text x="344.3" y="557.0" font-family="Liberation Serif" font-size="13.5" fill="#3a3a3a">70% White</text><text x="442.1" y="557.0" font-family="Liberation Serif" font-size="13.5" fill="#101010">90% White</text></svg><div style="left:1390px;top:443px;width:1px;height:562px;background:#fff"></div><div style="left:1888px;top:443px;width:1px;height:562px;background:#fff"></div><div style="left:856px;width:600px;text-align:center;top:444.31px;font-family:'Liberation Sans', sans-serif;font-size:14.4px;line-height:14.4px;font-weight:bold;color:#d8d800;white-space:pre;">Gray Scale Balance w/gamma</div><div style="left:1356px;width:600px;text-align:center;top:444.06px;font-family:'Liberation Sans', sans-serif;font-size:14.7px;line-height:14.7px;font-weight:bold;color:#d8d800;white-space:pre;">EOTF(Gamma)</div><div style="left:1226px;top:949.46px;font-family:'Liberation Sans', sans-serif;font-size:16px;line-height:16px;font-weight:bold;color:#a0a0a0;white-space:pre;letter-spacing:0.015px;">hcfr.sourceforge.net</div><div style="left:1723px;top:949.46px;font-family:'Liberation Sans', sans-serif;font-size:16px;line-height:16px;font-weight:bold;color:#a0a0a0;white-space:pre;letter-spacing:0.015px;">hcfr.sourceforge.net</div><svg style="left:901px;top:443px" width="489" height="562" viewBox="0 0 489 562"><rect x="48.40" y="0" width="1.3" height="562" fill="#0e4240"/><rect x="97.30" y="0" width="1.3" height="562" fill="#0e4240"/><rect x="146.20" y="0" width="1.3" height="562" fill="#0e4240"/><rect x="195.10" y="0" width="1.3" height="562" fill="#0e4240"/><rect x="244.00" y="0" width="1.3" height="562" fill="#0e4240"/><rect x="292.90" y="0" width="1.3" height="562" fill="#0e4240"/><rect x="341.80" y="0" width="1.3" height="562" fill="#0e4240"/><rect x="390.70" y="0" width="1.3" height="562" fill="#0e4240"/><rect x="439.60" y="0" width="1.3" height="562" fill="#0e4240"/><rect x="0" y="27.60" width="489" height="1.3" fill="#0e4240"/><rect x="0" y="55.66" width="489" height="1.3" fill="#0e4240"/><rect x="0" y="83.72" width="489" height="1.3" fill="#0e4240"/><rect x="0" y="111.78" width="489" height="1.3" fill="#0e4240"/><rect x="0" y="139.84" width="489" height="1.3" fill="#0e4240"/><rect x="0" y="167.90" width="489" height="1.3" fill="#0e4240"/><rect x="0" y="195.96" width="489" height="1.3" fill="#0e4240"/><rect x="0" y="224.02" width="489" height="1.3" fill="#0e4240"/><rect x="0" y="252.08" width="489" height="1.3" fill="#0e4240"/><rect x="0" y="336.26" width="489" height="1.3" fill="#0e4240"/><rect x="0" y="392.38" width="489" height="1.3" fill="#0e4240"/><rect x="0" y="448.50" width="489" height="1.3" fill="#0e4240"/><rect x="0" y="504.62" width="489" height="1.3" fill="#0e4240"/></svg><svg style="left:1399px;top:443px" width="489" height="562" viewBox="0 0 489 562"><rect x="48.40" y="0" width="1.3" height="562" fill="#0e4240"/><rect x="97.30" y="0" width="1.3" height="562" fill="#0e4240"/><rect x="146.20" y="0" width="1.3" height="562" fill="#0e4240"/><rect x="195.10" y="0" width="1.3" height="562" fill="#0e4240"/><rect x="244.00" y="0" width="1.3" height="562" fill="#0e4240"/><rect x="292.90" y="0" width="1.3" height="562" fill="#0e4240"/><rect x="341.80" y="0" width="1.3" height="562" fill="#0e4240"/><rect x="390.70" y="0" width="1.3" height="562" fill="#0e4240"/><rect x="439.60" y="0" width="1.3" height="562" fill="#0e4240"/><rect x="0" y="27.60" width="489" height="1.3" fill="#0e4240"/><rect x="0" y="55.66" width="489" height="1.3" fill="#0e4240"/><rect x="0" y="83.72" width="489" height="1.3" fill="#0e4240"/><rect x="0" y="111.78" width="489" height="1.3" fill="#0e4240"/><rect x="0" y="139.84" width="489" height="1.3" fill="#0e4240"/><rect x="0" y="167.90" width="489" height="1.3" fill="#0e4240"/><rect x="0" y="195.96" width="489" height="1.3" fill="#0e4240"/><rect x="0" y="224.02" width="489" height="1.3" fill="#0e4240"/><rect x="0" y="252.08" width="489" height="1.3" fill="#0e4240"/><rect x="0" y="280.14" width="489" height="1.3" fill="#0e4240"/><rect x="0" y="308.20" width="489" height="1.3" fill="#0e4240"/><rect x="0" y="336.26" width="489" height="1.3" fill="#0e4240"/><rect x="0" y="364.32" width="489" height="1.3" fill="#0e4240"/><rect x="0" y="392.38" width="489" height="1.3" fill="#0e4240"/><rect x="0" y="420.44" width="489" height="1.3" fill="#0e4240"/><rect x="0" y="448.50" width="489" height="1.3" fill="#0e4240"/><rect x="0" y="476.56" width="489" height="1.3" fill="#0e4240"/><rect x="0" y="504.62" width="489" height="1.3" fill="#0e4240"/><rect x="0" y="532.68" width="489" height="1.3" fill="#0e4240"/></svg><svg style="left:901px;top:443px" width="489" height="562" viewBox="0 0 489 562"><line x1="0" y1="140" x2="489" y2="140" stroke="#fff" stroke-width="1.2" stroke-dasharray="4,3"/><rect x="0" y="136" width="5" height="8" fill="#e8e8e8"/><path d="M20.9,63.4 L44.6,151.4 L69.6,150.3 L94.6,137.0 L118.7,137.0 L143.7,140.6 L168.7,140.6 L192.6,137.0 L217.6,140.6 L241.8,139.8 L266.8,139.2 L291.8,137.0 L315.9,142.6 L340.4,140.6 L364.6,140.6 L389.6,142.6 L414.6,142.6 L438.4,140.6 L463.4,140.6 L486.2,140.6" fill="none" stroke="#ff0000" stroke-width="2"/><rect x="16.9" y="59.4" width="8" height="8" fill="#ff0000"/><rect x="40.6" y="147.4" width="8" height="8" fill="#ff0000"/><rect x="65.6" y="146.3" width="8" height="8" fill="#ff0000"/><rect x="90.6" y="133.0" width="8" height="8" fill="#ff0000"/><rect x="114.7" y="133.0" width="8" height="8" fill="#ff0000"/><rect x="139.7" y="136.6" width="8" height="8" fill="#ff0000"/><rect x="164.7" y="136.6" width="8" height="8" fill="#ff0000"/><rect x="188.6" y="133.0" width="8" height="8" fill="#ff0000"/><rect x="213.6" y="136.6" width="8" height="8" fill="#ff0000"/><rect x="237.8" y="135.8" width="8" height="8" fill="#ff0000"/><rect x="262.8" y="135.2" width="8" height="8" fill="#ff0000"/><rect x="287.8" y="133.0" width="8" height="8" fill="#ff0000"/><rect x="311.9" y="138.6" width="8" height="8" fill="#ff0000"/><rect x="336.4" y="136.6" width="8" height="8" fill="#ff0000"/><rect x="360.6" y="136.6" width="8" height="8" fill="#ff0000"/><rect x="385.6" y="138.6" width="8" height="8" fill="#ff0000"/><rect x="410.6" y="138.6" width="8" height="8" fill="#ff0000"/><rect x="434.4" y="136.6" width="8" height="8" fill="#ff0000"/><rect x="459.4" y="136.6" width="8" height="8" fill="#ff0000"/><rect x="482.2" y="136.6" width="8" height="8" fill="#ff0000"/><path d="M20.9,16.2 L44.6,131.4 L70.1,140.6 L94.6,142.6 L118.7,143.9 L143.7,139.2 L168.7,139.2 L192.6,138.4 L217.6,140.6 L241.8,140.6 L266.8,141.2 L291.8,140.6 L315.9,140.6 L340.4,140.6 L364.6,140.6 L389.6,140.6 L414.6,140.6 L438.4,140.6 L463.4,139.2 L486.2,140.6" fill="none" stroke="#00ff00" stroke-width="2"/><rect x="16.9" y="12.2" width="8" height="8" fill="#00ff00"/><rect x="40.6" y="127.4" width="8" height="8" fill="#00ff00"/><rect x="66.1" y="136.6" width="8" height="8" fill="#00ff00"/><rect x="90.6" y="138.6" width="8" height="8" fill="#00ff00"/><rect x="114.7" y="139.9" width="8" height="8" fill="#00ff00"/><rect x="139.7" y="135.2" width="8" height="8" fill="#00ff00"/><rect x="164.7" y="135.2" width="8" height="8" fill="#00ff00"/><rect x="188.6" y="134.4" width="8" height="8" fill="#00ff00"/><rect x="213.6" y="136.6" width="8" height="8" fill="#00ff00"/><rect x="237.8" y="136.6" width="8" height="8" fill="#00ff00"/><rect x="262.8" y="137.2" width="8" height="8" fill="#00ff00"/><rect x="287.8" y="136.6" width="8" height="8" fill="#00ff00"/><rect x="311.9" y="136.6" width="8" height="8" fill="#00ff00"/><rect x="336.4" y="136.6" width="8" height="8" fill="#00ff00"/><rect x="360.6" y="136.6" width="8" height="8" fill="#00ff00"/><rect x="385.6" y="136.6" width="8" height="8" fill="#00ff00"/><rect x="410.6" y="136.6" width="8" height="8" fill="#00ff00"/><rect x="434.4" y="136.6" width="8" height="8" fill="#00ff00"/><rect x="459.4" y="135.2" width="8" height="8" fill="#00ff00"/><rect x="482.2" y="136.6" width="8" height="8" fill="#00ff00"/><path d="M32.1,-96.3 L44.6,108.4 L70.1,142.6 L94.6,135.6 L118.7,143.1 L143.7,140.6 L168.7,143.9 L192.6,143.1 L217.6,140.6 L241.8,139.8 L266.8,139.2 L291.8,138.4 L315.9,140.6 L340.4,140.6 L364.6,140.6 L389.6,139.8 L414.6,140.6 L438.4,138.4 L463.4,141.2 L486.2,139.8" fill="none" stroke="#0000ff" stroke-width="2"/><rect x="40.6" y="104.4" width="8" height="8" fill="#0000ff"/><rect x="66.1" y="138.6" width="8" height="8" fill="#0000ff"/><rect x="90.6" y="131.6" width="8" height="8" fill="#0000ff"/><rect x="114.7" y="139.1" width="8" height="8" fill="#0000ff"/><rect x="139.7" y="136.6" width="8" height="8" fill="#0000ff"/><rect x="164.7" y="139.9" width="8" height="8" fill="#0000ff"/><rect x="188.6" y="139.1" width="8" height="8" fill="#0000ff"/><rect x="213.6" y="136.6" width="8" height="8" fill="#0000ff"/><rect x="237.8" y="135.8" width="8" height="8" fill="#0000ff"/><rect x="262.8" y="135.2" width="8" height="8" fill="#0000ff"/><rect x="287.8" y="134.4" width="8" height="8" fill="#0000ff"/><rect x="311.9" y="136.6" width="8" height="8" fill="#0000ff"/><rect x="336.4" y="136.6" width="8" height="8" fill="#0000ff"/><rect x="360.6" y="136.6" width="8" height="8" fill="#0000ff"/><rect x="385.6" y="135.8" width="8" height="8" fill="#0000ff"/><rect x="410.6" y="136.6" width="8" height="8" fill="#0000ff"/><rect x="434.4" y="134.4" width="8" height="8" fill="#0000ff"/><rect x="459.4" y="137.2" width="8" height="8" fill="#0000ff"/><rect x="482.2" y="135.8" width="8" height="8" fill="#0000ff"/><path d="M20.6,537.6 L45.0,547.7 L69.9,550.5 L94.6,549.7 L119.0,552.0 L144.0,557.7 L169.0,545.4 L193.4,552.5 L218.0,558.3 L242.2,559.7 L266.8,554.8 L291.8,553.1 L316.2,553.1 L340.6,553.1 L365.0,550.5 L390.0,554.0 L415.2,551.1 L439.1,554.8 L464.0,549.1 L487.0,559.7 L502.8,564.0" fill="none" stroke="#ff00ff" stroke-width="2"/><rect x="16.6" y="533.6" width="8" height="8" fill="#ff00ff"/><rect x="41.0" y="543.7" width="8" height="8" fill="#ff00ff"/><rect x="65.9" y="546.5" width="8" height="8" fill="#ff00ff"/><rect x="90.6" y="545.7" width="8" height="8" fill="#ff00ff"/><rect x="115.0" y="548.0" width="8" height="8" fill="#ff00ff"/><rect x="140.0" y="553.7" width="8" height="8" fill="#ff00ff"/><rect x="165.0" y="541.4" width="8" height="8" fill="#ff00ff"/><rect x="189.4" y="548.5" width="8" height="8" fill="#ff00ff"/><rect x="214.0" y="554.3" width="8" height="8" fill="#ff00ff"/><rect x="238.2" y="555.7" width="8" height="8" fill="#ff00ff"/><rect x="262.8" y="550.8" width="8" height="8" fill="#ff00ff"/><rect x="287.8" y="549.1" width="8" height="8" fill="#ff00ff"/><rect x="312.2" y="549.1" width="8" height="8" fill="#ff00ff"/><rect x="336.6" y="549.1" width="8" height="8" fill="#ff00ff"/><rect x="361.0" y="546.5" width="8" height="8" fill="#ff00ff"/><rect x="386.0" y="550.0" width="8" height="8" fill="#ff00ff"/><rect x="411.2" y="547.1" width="8" height="8" fill="#ff00ff"/><rect x="435.1" y="550.8" width="8" height="8" fill="#ff00ff"/><rect x="460.0" y="545.1" width="8" height="8" fill="#ff00ff"/><rect x="483.0" y="555.7" width="8" height="8" fill="#ff00ff"/><rect x="498.8" y="560.0" width="8" height="8" fill="#ff00ff"/></svg><svg style="left:1399px;top:443px" width="489" height="562" viewBox="0 0 489 562"><line x1="0" y1="168.20000000000005" x2="463" y2="168.20000000000005" stroke="#fff" stroke-width="1.2" stroke-dasharray="4,3"/><line x1="421" y1="168.20000000000005" x2="463" y2="168.20000000000005" stroke="#222" stroke-width="1.2" stroke-dasharray="4,3"/><path d="M20.7,205.9 L44.6,168.9 L70.2,166.2 L94.6,168.1 L118.8,166.2 L143.8,168.1 L168.8,167.6 L192.9,168.1 L217.9,168.1 L241.8,168.1 L266.6,167.6 L291.6,168.9 L316.0,166.2 L341.0,167.6 L365.2,168.1 L389.6,166.2 L414.6,166.2 L438.8,175.3 L463.2,171.7" fill="none" stroke="#ffff00" stroke-width="2"/><rect x="16.7" y="201.9" width="8" height="8" fill="#ffff00"/><rect x="40.6" y="164.9" width="8" height="8" fill="#ffff00"/><rect x="66.2" y="162.2" width="8" height="8" fill="#ffff00"/><rect x="90.6" y="164.1" width="8" height="8" fill="#ffff00"/><rect x="114.8" y="162.2" width="8" height="8" fill="#ffff00"/><rect x="139.8" y="164.1" width="8" height="8" fill="#ffff00"/><rect x="164.8" y="163.6" width="8" height="8" fill="#ffff00"/><rect x="188.9" y="164.1" width="8" height="8" fill="#ffff00"/><rect x="213.9" y="164.1" width="8" height="8" fill="#ffff00"/><rect x="237.8" y="164.1" width="8" height="8" fill="#ffff00"/><rect x="262.6" y="163.6" width="8" height="8" fill="#ffff00"/><rect x="287.6" y="164.9" width="8" height="8" fill="#ffff00"/><rect x="312.0" y="162.2" width="8" height="8" fill="#ffff00"/><rect x="337.0" y="163.6" width="8" height="8" fill="#ffff00"/><rect x="361.2" y="164.1" width="8" height="8" fill="#ffff00"/><rect x="385.6" y="162.2" width="8" height="8" fill="#ffff00"/><rect x="410.6" y="162.2" width="8" height="8" fill="#ffff00"/><rect x="434.8" y="171.3" width="8" height="8" fill="#ffff00"/><rect x="459.2" y="167.7" width="8" height="8" fill="#ffff00"/><rect x="16.2" y="164.2" width="9" height="8" fill="#e0e0e0"/><rect x="40.1" y="164.2" width="9" height="8" fill="#e0e0e0"/><rect x="65.7" y="164.2" width="9" height="8" fill="#e0e0e0"/><rect x="90.1" y="164.2" width="9" height="8" fill="#e0e0e0"/><rect x="114.3" y="164.2" width="9" height="8" fill="#e0e0e0"/><rect x="139.3" y="164.2" width="9" height="8" fill="#e0e0e0"/><rect x="164.3" y="164.2" width="9" height="8" fill="#e0e0e0"/><rect x="188.4" y="164.2" width="9" height="8" fill="#e0e0e0"/><rect x="213.4" y="164.2" width="9" height="8" fill="#e0e0e0"/><rect x="237.3" y="164.2" width="9" height="8" fill="#e0e0e0"/><rect x="262.1" y="164.2" width="9" height="8" fill="#e0e0e0"/><rect x="287.1" y="164.2" width="9" height="8" fill="#e0e0e0"/><rect x="311.5" y="164.2" width="9" height="8" fill="#e0e0e0"/><rect x="336.5" y="164.2" width="9" height="8" fill="#e0e0e0"/><rect x="360.7" y="164.2" width="9" height="8" fill="#e0e0e0"/><rect x="385.1" y="164.2" width="9" height="8" fill="#e0e0e0"/><rect x="410.1" y="164.2" width="9" height="8" fill="#e0e0e0"/><rect x="434.3" y="164.2" width="9" height="8" fill="#e0e0e0"/><rect x="458.7" y="164.2" width="9" height="8" fill="#e0e0e0"/></svg><div style="left:0px;top:1042px;width:1920px;height:1px;background:#000"></div><div style="left:0px;top:1043px;width:1920px;height:18px;background:#f0f0f0"></div><div style="left:0px;top:1042px;width:54px;height:19px;background:#000"></div><div style="left:1.0px;top:1043px;width:17px;height:17px;background:#ececec;border-top:1px solid #fff;border-left:1px solid #fff;border-right:1px solid #a0a0a0;border-bottom:1px solid #a0a0a0"></div><div style="left:18.5px;top:1043px;width:17px;height:17px;background:#ececec;border-top:1px solid #fff;border-left:1px solid #fff;border-right:1px solid #a0a0a0;border-bottom:1px solid #a0a0a0"></div><div style="left:36.0px;top:1043px;width:17px;height:17px;background:#ececec;border-top:1px solid #fff;border-left:1px solid #fff;border-right:1px solid #a0a0a0;border-bottom:1px solid #a0a0a0"></div><svg style="left:5px;top:1047px" width="10" height="10" viewBox="0 0 10 10"><path d="M1,1 L9,9 M9,1 L1,9" stroke="#000" stroke-width="1.3"/></svg><svg style="left:24px;top:1047px" width="6" height="9" viewBox="0 0 6 9"><path d="M5,0.5 L1,4.5 L5,8.5 L5,6.5 L3,4.5 L5,2.5 Z" fill="#000"/></svg><svg style="left:41px;top:1047px" width="6" height="9" viewBox="0 0 6 9"><path d="M1,0.5 L5,4.5 L1,8.5 L1,6.5 L3,4.5 L1,2.5 Z" fill="#000"/></svg><svg style="left:54px;top:1042px" width="280" height="19" viewBox="0 0 280 19"><path d="M0.5,0 L8.5,18 L66,18 L73.5,0 Z" fill="#fff"/><path d="M0.5,0 L8.5,18" stroke="#000" stroke-width="1.1" fill="none"/><path d="M66,18.5 L73.5,0" stroke="#000" stroke-width="1.1" fill="none"/><path d="M66.5,18.5 L70,10" stroke="#000" stroke-width="0.9" fill="none"/><path d="M133.7,0.5 L140.8,18.5 M133.5,18.5 L137,10" stroke="#000" stroke-width="0.9" fill="none"/><path d="M184.2,0.5 L192.2,18.5 M184,18.5 L187.5,10" stroke="#000" stroke-width="0.9" fill="none"/><path d="M259.4,18.5 L267.4,0.5" stroke="#000" stroke-width="0.9" fill="none"/><path d="M8.5,18.5 H66" stroke="#a0a0a0" stroke-width="1"/><path d="M66,18.5 H259.4" stroke="#808080" stroke-width="1"/></svg><div style="left:66.6px;top:1045.27px;font-family:'Liberation Sans', sans-serif;font-size:11.5px;line-height:11.5px;font-weight:bold;color:#000;white-space:pre;letter-spacing:-0.445px;">Measures</div><div style="left:134px;top:1045.86px;font-family:'Liberation Sans', sans-serif;font-size:10.8px;line-height:10.8px;font-weight:normal;color:#1a1a3a;white-space:pre;letter-spacing:-0.870px;">Luminance</div><div style="left:200px;top:1045.86px;font-family:'Liberation Sans', sans-serif;font-size:10.8px;line-height:10.8px;font-weight:normal;color:#1a1a3a;white-space:pre;letter-spacing:-1.141px;">Gamma</div><div style="left:255.4px;top:1045.86px;font-family:'Liberation Sans', sans-serif;font-size:10.8px;line-height:10.8px;font-weight:normal;color:#1a1a3a;white-space:pre;letter-spacing:-0.821px;">RGB Levels</div><svg style="left:1750px;top:1043px" width="15" height="15" viewBox="0 0 15 15"><path d="M1,1 H14 V11 L11,14 H4 L1,11 Z" fill="#7a7000" stroke="#3a3a00"/><rect x="4" y="3" width="6" height="5" fill="#fff"/><path d="M5,6 L10,4" stroke="#e02020" stroke-width="2"/><circle cx="11" cy="12" r="2.5" fill="#ffff00"/><circle cx="4.5" cy="12" r="1.8" fill="#c0c000"/></svg><div style="left:1847px;top:1045px;width:11px;height:11px;background:#fff;border:1px solid #333;border-radius:2px"></div><div style="left:1862px;top:1045.34px;font-family:'Liberation Sans', sans-serif;font-size:12px;line-height:12px;font-weight:normal;color:#000;white-space:pre;letter-spacing:-0.708px;">Reference</div><div style="left:0px;top:1061px;width:1920px;height:19px;background:#e3eaf4"></div><div style="left:2.5px;top:1064.73px;font-family:'Liberation Sans', sans-serif;font-size:12.6px;line-height:12.6px;font-weight:normal;color:#000;white-space:pre;letter-spacing:-1.081px;">Ready</div><div style="left:1742px;top:1063px;width:74px;height:17px;border-top:1px solid #9fb4d0;border-left:1px solid #9fb4d0"></div><div style="left:1821px;top:1063px;width:27px;height:17px;border-top:1px solid #9fb4d0;border-left:1px solid #9fb4d0"></div><div style="left:1823px;top:1065.33px;font-family:'Liberation Sans', sans-serif;font-size:12.6px;line-height:12.6px;font-weight:normal;color:#000;white-space:pre;">CAP</div><div style="left:1851px;top:1063px;width:32px;height:17px;border-top:1px solid #9fb4d0;border-left:1px solid #9fb4d0"></div><div style="left:1853px;top:1065.33px;font-family:'Liberation Sans', sans-serif;font-size:12.6px;line-height:12.6px;font-weight:normal;color:#000;white-space:pre;">NUM</div><div style="left:1886px;top:1063px;width:34px;height:17px;border-top:1px solid #9fb4d0;border-left:1px solid #9fb4d0"></div>
</div></body></html>
